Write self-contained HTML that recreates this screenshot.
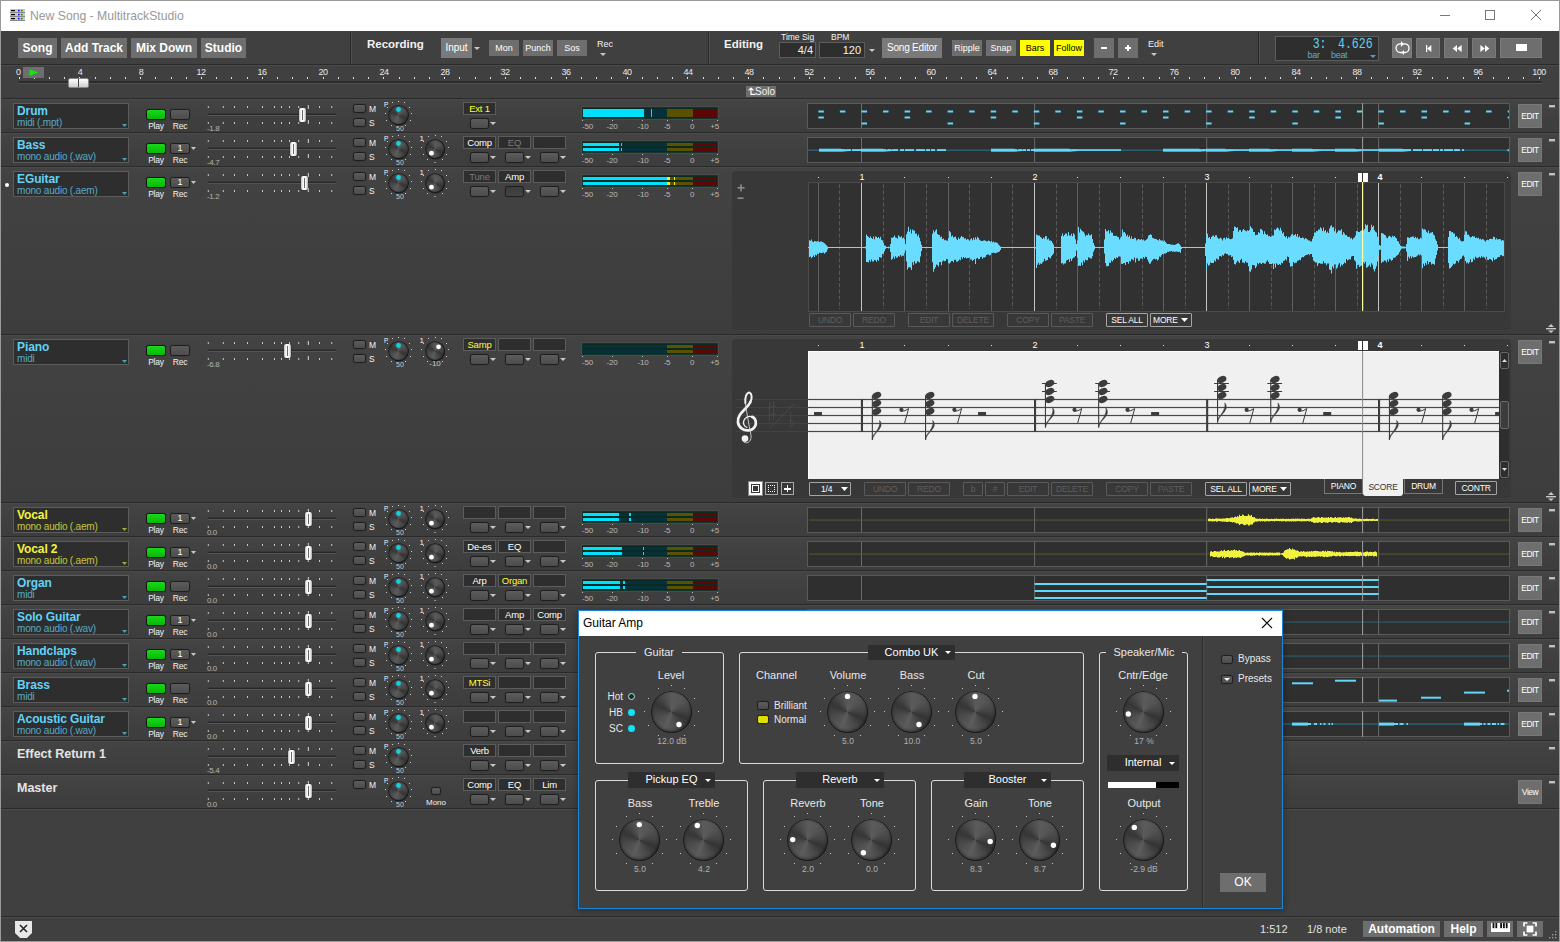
<!DOCTYPE html><html><head><meta charset="utf-8"><title>New Song - MultitrackStudio</title><style>
*{box-sizing:border-box;margin:0;padding:0}
html,body{width:1560px;height:942px;overflow:hidden;background:#404040}
body{position:relative;font-family:"Liberation Sans","DejaVu Sans",sans-serif;color:#f2f2f2;font-size:11px}
div,span.t,svg{position:absolute}
span.t{white-space:nowrap;line-height:1}
.dk{background:#2e2e2e;border:1px solid #5c5c5c}
.btn{background:#6e6e6e;color:#fff;text-align:center}
.b{font-weight:bold}
.sep{background:#2a2a2a;border-bottom:1px solid #4a4a4a}
.sb{background:linear-gradient(#5c5c5c,#4c4c4c);border:1px solid #1e1e1e;border-radius:2.5px;box-shadow:0 0 1px #222}
.ebtn{border:1px solid #5a5a5a;color:#5e5e5e;font-size:8.5px;letter-spacing:-0.2px;text-align:center;line-height:12px;border-radius:1px}
.ebtn.on{border-color:#a4a4a4;color:#fff}
.grp{border:1px solid #dadada;border-radius:3px}
.dd{background:#2e2e2e;color:#fff;font-size:11px;text-align:center}
</style></head><body>
<div style="left:0px;top:0px;width:1560px;height:942px;border:1px solid #9a9a9a;background:#404040"></div>
<div style="left:1px;top:1px;width:1558px;height:30px;background:#fff"></div>
<svg style="left:10px;top:9px" width="15" height="13" viewBox="0 0 15 13"><rect x="0" y="0" width="15" height="4" fill="#c8c8c8"/><rect x="0" y="3" width="15" height="1" fill="#888"/><rect x="1" y="1" width="4" height="1.2" fill="#000"/><rect x="8" y="0.8" width="1.6" height="1.6" fill="#10f"/><rect x="11" y="0.8" width="1.6" height="1.6" fill="#090"/><rect x="0" y="4" width="15" height="4" fill="#c8c8c8"/><rect x="0" y="7" width="15" height="1" fill="#888"/><rect x="1" y="5" width="4" height="1.2" fill="#000"/><rect x="8" y="4.8" width="1.6" height="1.6" fill="#10f"/><rect x="11" y="4.8" width="1.6" height="1.6" fill="#090"/><rect x="0" y="8" width="15" height="4" fill="#c8c8c8"/><rect x="0" y="11" width="15" height="1" fill="#888"/><rect x="1" y="9" width="4" height="1.2" fill="#000"/><rect x="8" y="8.8" width="1.6" height="1.6" fill="#10f"/><rect x="11" y="8.8" width="1.6" height="1.6" fill="#090"/></svg>
<span class="t" style="left:30px;top:9px;font-size:12.2px;color:#999;line-height:15px">New Song - MultitrackStudio</span>
<svg style="left:1430px;top:5px" width="120" height="22" viewBox="0 0 120 22" fill="none" stroke="#777" stroke-width="1"><path d="M10 10.5H20"/><rect x="55.5" y="5.5" width="9" height="9"/><path d="M101 5L111 15M111 5L101 15"/></svg>
<div style="left:1px;top:64px;width:1558px;height:2px;background:#2a2a2a;border-bottom:1px solid #4a4a4a"></div>
<div style="left:350px;top:32px;width:2px;height:32px;background:#2a2a2a;border-right:1px solid #505050"></div>
<div style="left:708px;top:32px;width:2px;height:32px;background:#2a2a2a;border-right:1px solid #505050"></div>
<div style="left:1258px;top:32px;width:2px;height:32px;background:#2a2a2a;border-right:1px solid #505050"></div>
<div style="left:18px;top:38px;width:39px;height:20px;background:#6e6e6e;color:#fff;font-size:12px;font-weight:bold;text-align:center;line-height:20px;">Song</div>
<div style="left:61px;top:38px;width:66px;height:20px;background:#6e6e6e;color:#fff;font-size:12px;font-weight:bold;text-align:center;line-height:20px;">Add Track</div>
<div style="left:131px;top:38px;width:66px;height:20px;background:#6e6e6e;color:#fff;font-size:12px;font-weight:bold;text-align:center;line-height:20px;">Mix Down</div>
<div style="left:201px;top:38px;width:45px;height:20px;background:#6e6e6e;color:#fff;font-size:12px;font-weight:bold;text-align:center;line-height:20px;">Studio</div>
<span class="t b" style="left:367px;top:37px;font-size:11.5px;line-height:14px">Recording</span>
<div style="left:441px;top:38px;width:31px;height:20px;background:#7a7a7a;color:#fff;font-size:10px;font-weight:normal;text-align:center;line-height:20px;">Input</div>
<svg style="left:474px;top:47px" width="6" height="3" viewBox="0 0 6 3"><path d="M0 0H6L3.0 3Z" fill="#c8c8c8"/></svg>
<div style="left:489px;top:40px;width:30px;height:16px;background:#6e6e6e;color:#fff;font-size:9px;font-weight:normal;text-align:center;line-height:16px;">Mon</div>
<div style="left:523px;top:40px;width:30px;height:16px;background:#6e6e6e;color:#fff;font-size:9px;font-weight:normal;text-align:center;line-height:16px;">Punch</div>
<div style="left:557px;top:40px;width:30px;height:16px;background:#6e6e6e;color:#fff;font-size:9px;font-weight:normal;text-align:center;line-height:16px;">Sos</div>
<span class="t" style="left:597px;top:39px;font-size:9px;line-height:10px">Rec</span>
<svg style="left:600px;top:53px" width="6" height="3" viewBox="0 0 6 3"><path d="M0 0H6L3.0 3Z" fill="#c8c8c8"/></svg>
<span class="t b" style="left:724px;top:37px;font-size:11.5px;line-height:14px">Editing</span>
<span class="t" style="left:781px;top:32px;font-size:8.5px;line-height:10px">Time Sig</span>
<div class="dk" style="left:779px;top:42px;width:37px;height:16px;font-size:11px;text-align:right;padding-right:2px;line-height:14px">4/4</div>
<span class="t" style="left:831px;top:32px;font-size:8.5px;line-height:10px">BPM</span>
<div class="dk" style="left:819px;top:42px;width:46px;height:16px;font-size:11px;text-align:right;padding-right:3px;line-height:14px">120</div>
<svg style="left:869px;top:49px" width="6" height="3" viewBox="0 0 6 3"><path d="M0 0H6L3.0 3Z" fill="#c8c8c8"/></svg>
<div style="left:882px;top:38px;width:60px;height:20px;background:#7a7a7a;color:#fff;font-size:10px;font-weight:normal;text-align:center;line-height:20px;letter-spacing:-0.2px;">Song Editor</div>
<div style="left:952px;top:40px;width:30px;height:16px;background:#6e6e6e;color:#fff;font-size:9px;font-weight:normal;text-align:center;line-height:16px;">Ripple</div>
<div style="left:986px;top:40px;width:30px;height:16px;background:#6e6e6e;color:#fff;font-size:9px;font-weight:normal;text-align:center;line-height:16px;">Snap</div>
<div style="left:1020px;top:40px;width:30px;height:16px;background:#ffff00;color:#000;font-size:9px;font-weight:normal;text-align:center;line-height:16px;">Bars</div>
<div style="left:1054px;top:40px;width:30px;height:16px;background:#ffff00;color:#000;font-size:9px;font-weight:normal;text-align:center;line-height:16px;">Follow</div>
<div class="btn" style="left:1094px;top:38px;width:20px;height:20px;"><div style="left:7px;top:9px;width:6px;height:2px;background:#fff"></div></div>
<div class="btn" style="left:1118px;top:38px;width:20px;height:20px;"><div style="left:7px;top:9px;width:6px;height:2px;background:#fff"></div><div style="left:9px;top:7px;width:2px;height:6px;background:#fff"></div></div>
<span class="t" style="left:1148px;top:39px;font-size:9px;line-height:10px">Edit</span>
<svg style="left:1151px;top:53px" width="6" height="3" viewBox="0 0 6 3"><path d="M0 0H6L3.0 3Z" fill="#c8c8c8"/></svg>
<div class="dk" style="left:1275px;top:35.5px;width:104px;height:25px;"></div>
<span class="t" style="left:1290px;top:37px;font-family:'Liberation Mono','DejaVu Sans Mono',monospace;font-size:15px;line-height:15px;transform:scaleX(0.77);color:#62d2f6;width:36.5px;text-align:right;transform-origin:100% 50%">3:</span>
<span class="t" style="left:1337.5px;top:37px;font-family:'Liberation Mono','DejaVu Sans Mono',monospace;font-size:15px;line-height:15px;transform:scaleX(0.77);color:#62d2f6;transform-origin:0 50%">4.626</span>
<span class="t" style="left:1307.5px;top:50px;font-size:9px;line-height:10px;color:#5aaecb;letter-spacing:-0.2px">bar</span>
<span class="t" style="left:1331px;top:50px;font-size:9px;line-height:10px;color:#5aaecb;letter-spacing:-0.3px">beat</span>
<svg style="left:1370px;top:55px" width="6" height="3" viewBox="0 0 6 3"><path d="M0 0H6L3.0 3Z" fill="#4aa6c4"/></svg>
<div class="btn" style="left:1392px;top:38px;width:20px;height:20px;background:#747474;border:1px solid #7e7e7e"><svg style="left:-1px;top:-1px" width="20" height="20" viewBox="0 0 20 20"><rect x="4.1" y="5.8" width="12.9" height="8.7" rx="4.3" fill="none" stroke="#fff" stroke-width="1.3"/><path d="M8.9 2.9V9.1L12 5.9Z M12 11.9V17.1L9.6 14.5Z" fill="#fff"/></svg></div>
<div class="btn" style="left:1416px;top:38px;width:24px;height:20px;border:1px solid #7a7a7a"><svg style="left:8px;top:5px" width="8" height="9" viewBox="0 0 8 9" fill="#fff"><rect x="1" y="1" width="1.3" height="7"/><path d="M2.2 4.5L6.3 1V8Z"/></svg></div>
<div class="btn" style="left:1444px;top:38px;width:24px;height:20px;border:1px solid #7a7a7a"><svg style="left:6px;top:5px" width="12" height="9" viewBox="0 0 12 9" fill="#fff"><path d="M1.6 4.5L6 1V8Z"/><path d="M6.2 4.5L10.6 1V8Z"/></svg></div>
<div class="btn" style="left:1472px;top:38px;width:24px;height:20px;border:1px solid #7a7a7a"><svg style="left:6px;top:5px" width="12" height="9" viewBox="0 0 12 9" fill="#fff"><path d="M5.8 4.5L1.4 1V8Z"/><path d="M10.4 4.5L6 1V8Z"/></svg></div>
<div class="btn" style="left:1500px;top:38px;width:42px;height:20px;border:1px solid #7a7a7a"><div style="left:15px;top:5px;width:10.5px;height:7px;background:#fff"></div></div>
<svg style="left:0;top:66px" width="1560" height="33" viewBox="0 0 1560 33"><rect x="19" y="15" width="1523" height="2" fill="#2c2c2c"/><rect x="19" y="17" width="1523" height="1" fill="#505050"/><rect x="19" y="11" width="1" height="2" fill="#e0e0e0"/><rect x="34" y="11" width="1" height="2" fill="#e0e0e0"/><rect x="49" y="11" width="1" height="2" fill="#e0e0e0"/><rect x="64" y="11" width="1" height="2" fill="#e0e0e0"/><rect x="79" y="11" width="1" height="2" fill="#e0e0e0"/><rect x="95" y="11" width="1" height="2" fill="#e0e0e0"/><rect x="110" y="11" width="1" height="2" fill="#e0e0e0"/><rect x="125" y="11" width="1" height="2" fill="#e0e0e0"/><rect x="140" y="11" width="1" height="2" fill="#e0e0e0"/><rect x="155" y="11" width="1" height="2" fill="#e0e0e0"/><rect x="171" y="11" width="1" height="2" fill="#e0e0e0"/><rect x="186" y="11" width="1" height="2" fill="#e0e0e0"/><rect x="201" y="11" width="1" height="2" fill="#e0e0e0"/><rect x="216" y="11" width="1" height="2" fill="#e0e0e0"/><rect x="231" y="11" width="1" height="2" fill="#e0e0e0"/><rect x="247" y="11" width="1" height="2" fill="#e0e0e0"/><rect x="262" y="11" width="1" height="2" fill="#e0e0e0"/><rect x="277" y="11" width="1" height="2" fill="#e0e0e0"/><rect x="292" y="11" width="1" height="2" fill="#e0e0e0"/><rect x="307" y="11" width="1" height="2" fill="#e0e0e0"/><rect x="323" y="11" width="1" height="2" fill="#e0e0e0"/><rect x="338" y="11" width="1" height="2" fill="#e0e0e0"/><rect x="353" y="11" width="1" height="2" fill="#e0e0e0"/><rect x="368" y="11" width="1" height="2" fill="#e0e0e0"/><rect x="383" y="11" width="1" height="2" fill="#e0e0e0"/><rect x="399" y="11" width="1" height="2" fill="#e0e0e0"/><rect x="414" y="11" width="1" height="2" fill="#e0e0e0"/><rect x="429" y="11" width="1" height="2" fill="#e0e0e0"/><rect x="444" y="11" width="1" height="2" fill="#e0e0e0"/><rect x="459" y="11" width="1" height="2" fill="#e0e0e0"/><rect x="475" y="11" width="1" height="2" fill="#e0e0e0"/><rect x="490" y="11" width="1" height="2" fill="#e0e0e0"/><rect x="505" y="11" width="1" height="2" fill="#e0e0e0"/><rect x="520" y="11" width="1" height="2" fill="#e0e0e0"/><rect x="535" y="11" width="1" height="2" fill="#e0e0e0"/><rect x="551" y="11" width="1" height="2" fill="#e0e0e0"/><rect x="566" y="11" width="1" height="2" fill="#e0e0e0"/><rect x="581" y="11" width="1" height="2" fill="#e0e0e0"/><rect x="596" y="11" width="1" height="2" fill="#e0e0e0"/><rect x="611" y="11" width="1" height="2" fill="#e0e0e0"/><rect x="627" y="11" width="1" height="2" fill="#e0e0e0"/><rect x="642" y="11" width="1" height="2" fill="#e0e0e0"/><rect x="657" y="11" width="1" height="2" fill="#e0e0e0"/><rect x="672" y="11" width="1" height="2" fill="#e0e0e0"/><rect x="687" y="11" width="1" height="2" fill="#e0e0e0"/><rect x="703" y="11" width="1" height="2" fill="#e0e0e0"/><rect x="718" y="11" width="1" height="2" fill="#e0e0e0"/><rect x="733" y="11" width="1" height="2" fill="#e0e0e0"/><rect x="748" y="11" width="1" height="2" fill="#e0e0e0"/><rect x="763" y="11" width="1" height="2" fill="#e0e0e0"/><rect x="779" y="11" width="1" height="2" fill="#e0e0e0"/><rect x="794" y="11" width="1" height="2" fill="#e0e0e0"/><rect x="809" y="11" width="1" height="2" fill="#e0e0e0"/><rect x="824" y="11" width="1" height="2" fill="#e0e0e0"/><rect x="839" y="11" width="1" height="2" fill="#e0e0e0"/><rect x="855" y="11" width="1" height="2" fill="#e0e0e0"/><rect x="870" y="11" width="1" height="2" fill="#e0e0e0"/><rect x="885" y="11" width="1" height="2" fill="#e0e0e0"/><rect x="900" y="11" width="1" height="2" fill="#e0e0e0"/><rect x="915" y="11" width="1" height="2" fill="#e0e0e0"/><rect x="931" y="11" width="1" height="2" fill="#e0e0e0"/><rect x="946" y="11" width="1" height="2" fill="#e0e0e0"/><rect x="961" y="11" width="1" height="2" fill="#e0e0e0"/><rect x="976" y="11" width="1" height="2" fill="#e0e0e0"/><rect x="991" y="11" width="1" height="2" fill="#e0e0e0"/><rect x="1007" y="11" width="1" height="2" fill="#e0e0e0"/><rect x="1022" y="11" width="1" height="2" fill="#e0e0e0"/><rect x="1037" y="11" width="1" height="2" fill="#e0e0e0"/><rect x="1052" y="11" width="1" height="2" fill="#e0e0e0"/><rect x="1067" y="11" width="1" height="2" fill="#e0e0e0"/><rect x="1083" y="11" width="1" height="2" fill="#e0e0e0"/><rect x="1098" y="11" width="1" height="2" fill="#e0e0e0"/><rect x="1113" y="11" width="1" height="2" fill="#e0e0e0"/><rect x="1128" y="11" width="1" height="2" fill="#e0e0e0"/><rect x="1143" y="11" width="1" height="2" fill="#e0e0e0"/><rect x="1159" y="11" width="1" height="2" fill="#e0e0e0"/><rect x="1174" y="11" width="1" height="2" fill="#e0e0e0"/><rect x="1189" y="11" width="1" height="2" fill="#e0e0e0"/><rect x="1204" y="11" width="1" height="2" fill="#e0e0e0"/><rect x="1219" y="11" width="1" height="2" fill="#e0e0e0"/><rect x="1235" y="11" width="1" height="2" fill="#e0e0e0"/><rect x="1250" y="11" width="1" height="2" fill="#e0e0e0"/><rect x="1265" y="11" width="1" height="2" fill="#e0e0e0"/><rect x="1280" y="11" width="1" height="2" fill="#e0e0e0"/><rect x="1295" y="11" width="1" height="2" fill="#e0e0e0"/><rect x="1311" y="11" width="1" height="2" fill="#e0e0e0"/><rect x="1326" y="11" width="1" height="2" fill="#e0e0e0"/><rect x="1341" y="11" width="1" height="2" fill="#e0e0e0"/><rect x="1356" y="11" width="1" height="2" fill="#e0e0e0"/><rect x="1371" y="11" width="1" height="2" fill="#e0e0e0"/><rect x="1387" y="11" width="1" height="2" fill="#e0e0e0"/><rect x="1402" y="11" width="1" height="2" fill="#e0e0e0"/><rect x="1417" y="11" width="1" height="2" fill="#e0e0e0"/><rect x="1432" y="11" width="1" height="2" fill="#e0e0e0"/><rect x="1447" y="11" width="1" height="2" fill="#e0e0e0"/><rect x="1463" y="11" width="1" height="2" fill="#e0e0e0"/><rect x="1478" y="11" width="1" height="2" fill="#e0e0e0"/><rect x="1493" y="11" width="1" height="2" fill="#e0e0e0"/><rect x="1508" y="11" width="1" height="2" fill="#e0e0e0"/><rect x="1523" y="11" width="1" height="2" fill="#e0e0e0"/><rect x="1539" y="11" width="1" height="2" fill="#e0e0e0"/></svg>
<span class="t" style="left:16px;top:67px;font-size:9px;line-height:10px;color:#e8e8e8;letter-spacing:-0.5px">0</span>
<span class="t" style="left:65px;top:67px;width:30px;text-align:center;font-size:9px;line-height:10px;color:#e8e8e8;letter-spacing:-0.5px">4</span>
<span class="t" style="left:126px;top:67px;width:30px;text-align:center;font-size:9px;line-height:10px;color:#e8e8e8;letter-spacing:-0.5px">8</span>
<span class="t" style="left:186px;top:67px;width:30px;text-align:center;font-size:9px;line-height:10px;color:#e8e8e8;letter-spacing:-0.5px">12</span>
<span class="t" style="left:247px;top:67px;width:30px;text-align:center;font-size:9px;line-height:10px;color:#e8e8e8;letter-spacing:-0.5px">16</span>
<span class="t" style="left:308px;top:67px;width:30px;text-align:center;font-size:9px;line-height:10px;color:#e8e8e8;letter-spacing:-0.5px">20</span>
<span class="t" style="left:369px;top:67px;width:30px;text-align:center;font-size:9px;line-height:10px;color:#e8e8e8;letter-spacing:-0.5px">24</span>
<span class="t" style="left:430px;top:67px;width:30px;text-align:center;font-size:9px;line-height:10px;color:#e8e8e8;letter-spacing:-0.5px">28</span>
<span class="t" style="left:490px;top:67px;width:30px;text-align:center;font-size:9px;line-height:10px;color:#e8e8e8;letter-spacing:-0.5px">32</span>
<span class="t" style="left:551px;top:67px;width:30px;text-align:center;font-size:9px;line-height:10px;color:#e8e8e8;letter-spacing:-0.5px">36</span>
<span class="t" style="left:612px;top:67px;width:30px;text-align:center;font-size:9px;line-height:10px;color:#e8e8e8;letter-spacing:-0.5px">40</span>
<span class="t" style="left:673px;top:67px;width:30px;text-align:center;font-size:9px;line-height:10px;color:#e8e8e8;letter-spacing:-0.5px">44</span>
<span class="t" style="left:734px;top:67px;width:30px;text-align:center;font-size:9px;line-height:10px;color:#e8e8e8;letter-spacing:-0.5px">48</span>
<span class="t" style="left:794px;top:67px;width:30px;text-align:center;font-size:9px;line-height:10px;color:#e8e8e8;letter-spacing:-0.5px">52</span>
<span class="t" style="left:855px;top:67px;width:30px;text-align:center;font-size:9px;line-height:10px;color:#e8e8e8;letter-spacing:-0.5px">56</span>
<span class="t" style="left:916px;top:67px;width:30px;text-align:center;font-size:9px;line-height:10px;color:#e8e8e8;letter-spacing:-0.5px">60</span>
<span class="t" style="left:977px;top:67px;width:30px;text-align:center;font-size:9px;line-height:10px;color:#e8e8e8;letter-spacing:-0.5px">64</span>
<span class="t" style="left:1038px;top:67px;width:30px;text-align:center;font-size:9px;line-height:10px;color:#e8e8e8;letter-spacing:-0.5px">68</span>
<span class="t" style="left:1098px;top:67px;width:30px;text-align:center;font-size:9px;line-height:10px;color:#e8e8e8;letter-spacing:-0.5px">72</span>
<span class="t" style="left:1159px;top:67px;width:30px;text-align:center;font-size:9px;line-height:10px;color:#e8e8e8;letter-spacing:-0.5px">76</span>
<span class="t" style="left:1220px;top:67px;width:30px;text-align:center;font-size:9px;line-height:10px;color:#e8e8e8;letter-spacing:-0.5px">80</span>
<span class="t" style="left:1281px;top:67px;width:30px;text-align:center;font-size:9px;line-height:10px;color:#e8e8e8;letter-spacing:-0.5px">84</span>
<span class="t" style="left:1342px;top:67px;width:30px;text-align:center;font-size:9px;line-height:10px;color:#e8e8e8;letter-spacing:-0.5px">88</span>
<span class="t" style="left:1402px;top:67px;width:30px;text-align:center;font-size:9px;line-height:10px;color:#e8e8e8;letter-spacing:-0.5px">92</span>
<span class="t" style="left:1463px;top:67px;width:30px;text-align:center;font-size:9px;line-height:10px;color:#e8e8e8;letter-spacing:-0.5px">96</span>
<span class="t" style="left:1524px;top:67px;width:30px;text-align:center;font-size:9px;line-height:10px;color:#e8e8e8;letter-spacing:-0.5px">100</span>
<div style="left:23px;top:67px;width:21px;height:11px;background:#6e6e6e"><svg style="left:6px;top:2px" width="10" height="8" viewBox="0 0 10 8"><path d="M0.7 0.2L9.2 3.6L0.7 7Z" fill="#10e810"/></svg></div>
<div style="left:68px;top:78px;width:21px;height:10px;background:linear-gradient(#fff,#d0d0d0);border-radius:2px;border:1px solid #888"><div style="left:9px;top:0;width:1px;height:8px;background:#444"></div></div>
<div style="left:746px;top:86px;width:30px;height:11px;background:#6e6e6e"></div>
<svg style="left:748px;top:87px" width="8" height="9" viewBox="0 0 8 9" fill="none" stroke="#fff" stroke-width="1.2"><path d="M3 8V1.2M0.6 3.4L3 1L5.4 3.4M3 7.4H7.6"/></svg>
<span class="t" style="left:755px;top:86px;font-size:10px;line-height:11px">Solo</span>
<div style="left:1px;top:100px;width:1558px;height:32px;background:linear-gradient(#444 0,#424242 6px,#3f3f3f 60%,#3d3d3d 100%)"></div>
<div class="sep" style="left:1px;top:98px;width:1558px;height:2px;"></div>
<div class="dk" style="left:13px;top:103px;width:116px;height:26px;"></div>
<span class="t b" style="left:17px;top:104px;font-size:12px;line-height:14px;color:#62d2f6;letter-spacing:-0.1px">Drum</span>
<span class="t" style="left:17px;top:117px;font-size:10px;line-height:11px;color:#62d2f6;opacity:0.75;letter-spacing:-0.2px">midi (.mpt)</span>
<svg style="left:122px;top:124px" width="5" height="3" viewBox="0 0 5 3"><path d="M0 0H5L2.5 3Z" fill="#4d9fba"/></svg>
<div style="left:146px;top:109px;width:20px;height:11px;background:linear-gradient(#18d818,#08b808);border:1px solid #161616;border-radius:2.5px;box-shadow:0 0 1px #222"></div>
<span class="t" style="left:146px;top:121px;width:20px;text-align:center;font-size:8.5px;line-height:10px;letter-spacing:-0.2px">Play</span>
<div class="sb" style="left:170px;top:109px;width:20px;height:11px;color:#fff;font-size:9px;line-height:9px;text-align:center"></div>
<span class="t" style="left:170px;top:121px;width:20px;text-align:center;font-size:8.5px;line-height:10px;letter-spacing:-0.2px">Rec</span>
<svg style="left:200px;top:98px" width="145" height="34" viewBox="200 0 145 34"><rect x="207.8" y="8" width="1" height="2" fill="#c8c8c8"/><rect x="207.8" y="24" width="1" height="2" fill="#c8c8c8"/><rect x="222.8" y="8" width="1" height="2" fill="#c8c8c8"/><rect x="222.8" y="24" width="1" height="2" fill="#c8c8c8"/><rect x="234.0" y="8" width="1" height="2" fill="#c8c8c8"/><rect x="234.0" y="24" width="1" height="2" fill="#c8c8c8"/><rect x="247.0" y="8" width="1" height="2" fill="#c8c8c8"/><rect x="247.0" y="24" width="1" height="2" fill="#c8c8c8"/><rect x="262.0" y="8" width="1" height="2" fill="#c8c8c8"/><rect x="262.0" y="24" width="1" height="2" fill="#c8c8c8"/><rect x="274.0" y="8" width="1" height="2" fill="#c8c8c8"/><rect x="274.0" y="24" width="1" height="2" fill="#c8c8c8"/><rect x="281.0" y="8" width="1" height="2" fill="#c8c8c8"/><rect x="281.0" y="24" width="1" height="2" fill="#c8c8c8"/><rect x="289.0" y="8" width="1" height="2" fill="#c8c8c8"/><rect x="289.0" y="24" width="1" height="2" fill="#c8c8c8"/><rect x="298.2" y="8" width="1" height="2" fill="#c8c8c8"/><rect x="298.2" y="24" width="1" height="2" fill="#c8c8c8"/><rect x="319.0" y="8" width="1" height="2" fill="#c8c8c8"/><rect x="319.0" y="24" width="1" height="2" fill="#c8c8c8"/><rect x="331.2" y="8" width="1" height="2" fill="#c8c8c8"/><rect x="331.2" y="24" width="1" height="2" fill="#c8c8c8"/><rect x="307.8" y="7" width="1" height="4" fill="#d8d8d8"/><rect x="307.8" y="22" width="1" height="4" fill="#d8d8d8"/><rect x="208" y="15" width="128" height="1" fill="#383838"/><rect x="208" y="16" width="128" height="1" fill="#272727"/><rect x="208" y="17" width="128" height="1" fill="#565656"/></svg>
<div style="left:299px;top:108px;width:7px;height:14px;background:linear-gradient(90deg,#b8b8b8,#f4f4f4 25%,#fff 50%,#f0f0f0 75%,#a8a8a8);border-radius:2px;box-shadow:0 0 1px #111"><div style="left:3px;top:2px;width:1px;height:10px;background:#6a6a6a"></div></div>
<span class="t" style="left:207px;top:125px;font-size:8px;line-height:8px;color:#b4b4b4;letter-spacing:-0.4px">-1.8</span>
<div class="sb" style="left:353px;top:104px;width:13px;height:9px;"></div>
<span class="t" style="left:369px;top:104px;font-size:8.5px;line-height:10px">M</span>
<div class="sb" style="left:353px;top:118px;width:13px;height:9px;"></div>
<span class="t" style="left:369px;top:118px;font-size:8.5px;line-height:10px">S</span>
<svg style="left:383px;top:99px" width="32" height="32" viewBox="-16 -16 32 32"><rect x="-8" y="10" width="1.0" height="1.0" fill="#d0d0d0"/><rect x="-13" y="5" width="1.0" height="1.0" fill="#d0d0d0"/><rect x="-14" y="-2" width="1.0" height="1.0" fill="#d0d0d0"/><rect x="-12" y="-8" width="1.0" height="1.0" fill="#d0d0d0"/><rect x="-7" y="-13" width="1.0" height="1.0" fill="#d0d0d0"/><rect x="-1" y="-14" width="1.0" height="1.0" fill="#d0d0d0"/><rect x="5" y="-13" width="1.0" height="1.0" fill="#d0d0d0"/><rect x="10" y="-8" width="1.0" height="1.0" fill="#d0d0d0"/><rect x="12" y="-2" width="1.0" height="1.0" fill="#d0d0d0"/><rect x="11" y="5" width="1.0" height="1.0" fill="#d0d0d0"/><rect x="6" y="10" width="1.0" height="1.0" fill="#d0d0d0"/><circle cx="-0.2" cy="0.6" r="9.9" fill="#1c1c1c"/></svg>
<div style="left:389.4px;top:105.9px;width:18.2px;height:18.2px;border-radius:50%;background:conic-gradient(from 0deg,#5a5a5a 0deg,#565656 40deg,#444 85deg,#343434 115deg,#484848 150deg,#5c5c5c 200deg,#4c4c4c 250deg,#363636 298deg,#4c4c4c 335deg,#5a5a5a 360deg);box-shadow:inset 0 0 2px 0 rgba(0,0,0,.5),0 0 0 0.8px #1e1e1e"></div>
<svg style="left:394px;top:105px" width="9" height="9" viewBox="0 0 9 9"><circle cx="4.50" cy="4.50" r="2.4" fill="#00d8e8"/></svg>
<span class="t" style="left:384px;top:101px;font-size:6.5px;line-height:8px">P</span>
<span class="t" style="left:390px;top:124.5px;width:20px;text-align:center;font-size:7px;line-height:8px;color:#c8c8c8">50</span>
<div class="dk" style="left:463px;top:102px;width:33px;height:13px;font-size:9.5px;line-height:11px;text-align:center;color:#ffff28;letter-spacing:-0.2px">Ext 1</div>
<div class="sb" style="left:470px;top:118px;width:19px;height:10.5px;"></div>
<svg style="left:490px;top:122px" width="6" height="3" viewBox="0 0 6 3"><path d="M0 0H6L3.0 3Z" fill="#c8c8c8"/></svg>
<div style="left:582px;top:107px;width:136px;height:12px;background:#0a2a22;border:1px solid #13352b;box-shadow:0 0 0 1px #4a4a4a"></div>
<div style="left:583px;top:109px;width:134px;height:8px;overflow:hidden"><div style="left:0.0px;top:0;width:84.0px;height:8px;background:#06303a"></div><div style="left:84.0px;top:0;width:25.5px;height:8px;background:#5a5200"></div><div style="left:109.5px;top:0;width:24.5px;height:8px;background:#5c0606"></div><div style="left:0.0px;top:0;width:61.0px;height:8px;background:#00e0ff"></div><div style="left:67.8px;top:0;width:1.4px;height:8px;background:#00e0ff"></div></div>
<div style="left:582px;top:120px;width:1px;height:1px;background:#c0c0c0"></div>
<div style="left:612px;top:120px;width:1px;height:1px;background:#c0c0c0"></div>
<div style="left:642px;top:120px;width:1px;height:1px;background:#c0c0c0"></div>
<div style="left:667px;top:120px;width:1px;height:1px;background:#c0c0c0"></div>
<div style="left:692px;top:120px;width:1px;height:1px;background:#c0c0c0"></div>
<div style="left:717px;top:120px;width:1px;height:1px;background:#c0c0c0"></div>
<span class="t" style="left:582px;top:123px;font-size:8px;line-height:8px;color:#b8b8b8;letter-spacing:-0.2px">-50</span>
<span class="t" style="left:602px;top:123px;width:20px;text-align:center;font-size:8px;line-height:8px;color:#b8b8b8;letter-spacing:-0.2px">-20</span>
<span class="t" style="left:633px;top:123px;width:20px;text-align:center;font-size:8px;line-height:8px;color:#b8b8b8;letter-spacing:-0.2px">-10</span>
<span class="t" style="left:657px;top:123px;width:20px;text-align:center;font-size:8px;line-height:8px;color:#b8b8b8;letter-spacing:-0.2px">-5</span>
<span class="t" style="left:682px;top:123px;width:20px;text-align:center;font-size:8px;line-height:8px;color:#b8b8b8;letter-spacing:-0.2px">0</span>
<span class="t" style="left:699px;top:123px;width:20px;text-align:right;font-size:8px;line-height:8px;color:#b8b8b8;letter-spacing:-0.2px">+5</span>
<svg style="left:807px;top:103px" width="703" height="26" viewBox="807 0 703 26"><rect x="807.5" y="0.5" width="702" height="25" fill="#2f2f2f" stroke="#5a5a5a"/><rect x="861.0" y="1" width="1" height="24" fill="#6a6a6a"/><rect x="1034.1" y="1" width="1" height="24" fill="#6a6a6a"/><rect x="1206.2" y="1" width="1" height="24" fill="#6a6a6a"/><rect x="1378.1" y="1" width="1" height="24" fill="#6a6a6a"/><rect x="818.4" y="7.5" width="5.5" height="2" fill="#5fd8fa"/><rect x="818.4" y="13.5" width="5.5" height="2" fill="#5fd8fa"/><rect x="839.9" y="7.5" width="5.5" height="2" fill="#5fd8fa"/><rect x="861.5" y="7.5" width="5.5" height="2" fill="#5fd8fa"/><rect x="861.5" y="19.5" width="5.5" height="2" fill="#5fd8fa"/><rect x="883.0" y="7.5" width="5.5" height="2" fill="#5fd8fa"/><rect x="904.6" y="7.5" width="5.5" height="2" fill="#5fd8fa"/><rect x="904.6" y="13.5" width="5.5" height="2" fill="#5fd8fa"/><rect x="926.1" y="7.5" width="5.5" height="2" fill="#5fd8fa"/><rect x="947.6" y="7.5" width="5.5" height="2" fill="#5fd8fa"/><rect x="947.6" y="19.5" width="5.5" height="2" fill="#5fd8fa"/><rect x="969.2" y="7.5" width="5.5" height="2" fill="#5fd8fa"/><rect x="990.7" y="7.5" width="5.5" height="2" fill="#5fd8fa"/><rect x="990.7" y="13.5" width="5.5" height="2" fill="#5fd8fa"/><rect x="1012.3" y="7.5" width="5.5" height="2" fill="#5fd8fa"/><rect x="1033.8" y="7.5" width="5.5" height="2" fill="#5fd8fa"/><rect x="1033.8" y="19.5" width="5.5" height="2" fill="#5fd8fa"/><rect x="1055.3" y="7.5" width="5.5" height="2" fill="#5fd8fa"/><rect x="1076.9" y="7.5" width="5.5" height="2" fill="#5fd8fa"/><rect x="1076.9" y="13.5" width="5.5" height="2" fill="#5fd8fa"/><rect x="1098.4" y="7.5" width="5.5" height="2" fill="#5fd8fa"/><rect x="1120.0" y="7.5" width="5.5" height="2" fill="#5fd8fa"/><rect x="1120.0" y="19.5" width="5.5" height="2" fill="#5fd8fa"/><rect x="1141.5" y="7.5" width="5.5" height="2" fill="#5fd8fa"/><rect x="1163.0" y="7.5" width="5.5" height="2" fill="#5fd8fa"/><rect x="1163.0" y="13.5" width="5.5" height="2" fill="#5fd8fa"/><rect x="1184.6" y="7.5" width="5.5" height="2" fill="#5fd8fa"/><rect x="1206.1" y="7.5" width="5.5" height="2" fill="#5fd8fa"/><rect x="1206.1" y="19.5" width="5.5" height="2" fill="#5fd8fa"/><rect x="1227.7" y="7.5" width="5.5" height="2" fill="#5fd8fa"/><rect x="1249.2" y="7.5" width="5.5" height="2" fill="#5fd8fa"/><rect x="1249.2" y="13.5" width="5.5" height="2" fill="#5fd8fa"/><rect x="1270.7" y="7.5" width="5.5" height="2" fill="#5fd8fa"/><rect x="1292.3" y="7.5" width="5.5" height="2" fill="#5fd8fa"/><rect x="1292.3" y="19.5" width="5.5" height="2" fill="#5fd8fa"/><rect x="1313.8" y="7.5" width="5.5" height="2" fill="#5fd8fa"/><rect x="1335.4" y="7.5" width="5.5" height="2" fill="#5fd8fa"/><rect x="1335.4" y="13.5" width="5.5" height="2" fill="#5fd8fa"/><rect x="1356.9" y="7.5" width="5.5" height="2" fill="#5fd8fa"/><rect x="1378.4" y="7.5" width="5.5" height="2" fill="#5fd8fa"/><rect x="1378.4" y="19.5" width="5.5" height="2" fill="#5fd8fa"/><rect x="1400.0" y="7.5" width="5.5" height="2" fill="#5fd8fa"/><rect x="1421.5" y="7.5" width="5.5" height="2" fill="#5fd8fa"/><rect x="1421.5" y="13.5" width="5.5" height="2" fill="#5fd8fa"/><rect x="1443.1" y="7.5" width="5.5" height="2" fill="#5fd8fa"/><rect x="1464.6" y="7.5" width="5.5" height="2" fill="#5fd8fa"/><rect x="1464.6" y="19.5" width="5.5" height="2" fill="#5fd8fa"/><rect x="1486.1" y="7.5" width="5.5" height="2" fill="#5fd8fa"/><rect x="1507.7" y="7.5" width="1.3" height="2" fill="#5fd8fa"/><rect x="1507.7" y="13.5" width="1.3" height="2" fill="#5fd8fa"/><rect x="1362.1" y="0" width="1" height="26" fill="#a0a0a0"/></svg>
<div class="btn" style="left:1518px;top:104px;width:24px;height:24px;font-size:8.5px;line-height:22px;letter-spacing:-0.5px;border:1px solid #787878">EDIT</div>
<div style="left:1549px;top:105px;width:6px;height:3px;background:#c0c0c0;border-bottom:1px solid #777"></div>
<div style="left:1px;top:134px;width:1558px;height:32px;background:linear-gradient(#444 0,#424242 6px,#3f3f3f 60%,#3d3d3d 100%)"></div>
<div class="sep" style="left:1px;top:132px;width:1558px;height:2px;"></div>
<div class="dk" style="left:13px;top:137px;width:116px;height:26px;"></div>
<span class="t b" style="left:17px;top:138px;font-size:12px;line-height:14px;color:#62d2f6;letter-spacing:-0.1px">Bass</span>
<span class="t" style="left:17px;top:151px;font-size:10px;line-height:11px;color:#62d2f6;opacity:0.75;letter-spacing:-0.2px">mono audio (.wav)</span>
<svg style="left:122px;top:158px" width="5" height="3" viewBox="0 0 5 3"><path d="M0 0H5L2.5 3Z" fill="#4d9fba"/></svg>
<div style="left:146px;top:143px;width:20px;height:11px;background:linear-gradient(#18d818,#08b808);border:1px solid #161616;border-radius:2.5px;box-shadow:0 0 1px #222"></div>
<span class="t" style="left:146px;top:155px;width:20px;text-align:center;font-size:8.5px;line-height:10px;letter-spacing:-0.2px">Play</span>
<div class="sb" style="left:170px;top:143px;width:20px;height:11px;color:#fff;font-size:9px;line-height:9px;text-align:center">1</div>
<span class="t" style="left:170px;top:155px;width:20px;text-align:center;font-size:8.5px;line-height:10px;letter-spacing:-0.2px">Rec</span>
<svg style="left:191px;top:147px" width="5" height="3" viewBox="0 0 5 3"><path d="M0 0H5L2.5 3Z" fill="#c8c8c8"/></svg>
<svg style="left:200px;top:132px" width="145" height="34" viewBox="200 0 145 34"><rect x="207.8" y="8" width="1" height="2" fill="#c8c8c8"/><rect x="207.8" y="24" width="1" height="2" fill="#c8c8c8"/><rect x="222.8" y="8" width="1" height="2" fill="#c8c8c8"/><rect x="222.8" y="24" width="1" height="2" fill="#c8c8c8"/><rect x="234.0" y="8" width="1" height="2" fill="#c8c8c8"/><rect x="234.0" y="24" width="1" height="2" fill="#c8c8c8"/><rect x="247.0" y="8" width="1" height="2" fill="#c8c8c8"/><rect x="247.0" y="24" width="1" height="2" fill="#c8c8c8"/><rect x="262.0" y="8" width="1" height="2" fill="#c8c8c8"/><rect x="262.0" y="24" width="1" height="2" fill="#c8c8c8"/><rect x="274.0" y="8" width="1" height="2" fill="#c8c8c8"/><rect x="274.0" y="24" width="1" height="2" fill="#c8c8c8"/><rect x="281.0" y="8" width="1" height="2" fill="#c8c8c8"/><rect x="281.0" y="24" width="1" height="2" fill="#c8c8c8"/><rect x="289.0" y="8" width="1" height="2" fill="#c8c8c8"/><rect x="289.0" y="24" width="1" height="2" fill="#c8c8c8"/><rect x="298.2" y="8" width="1" height="2" fill="#c8c8c8"/><rect x="298.2" y="24" width="1" height="2" fill="#c8c8c8"/><rect x="319.0" y="8" width="1" height="2" fill="#c8c8c8"/><rect x="319.0" y="24" width="1" height="2" fill="#c8c8c8"/><rect x="331.2" y="8" width="1" height="2" fill="#c8c8c8"/><rect x="331.2" y="24" width="1" height="2" fill="#c8c8c8"/><rect x="307.8" y="7" width="1" height="4" fill="#d8d8d8"/><rect x="307.8" y="22" width="1" height="4" fill="#d8d8d8"/><rect x="208" y="15" width="128" height="1" fill="#383838"/><rect x="208" y="16" width="128" height="1" fill="#272727"/><rect x="208" y="17" width="128" height="1" fill="#565656"/></svg>
<div style="left:290px;top:142px;width:7px;height:14px;background:linear-gradient(90deg,#b8b8b8,#f4f4f4 25%,#fff 50%,#f0f0f0 75%,#a8a8a8);border-radius:2px;box-shadow:0 0 1px #111"><div style="left:3px;top:2px;width:1px;height:10px;background:#6a6a6a"></div></div>
<span class="t" style="left:207px;top:159px;font-size:8px;line-height:8px;color:#b4b4b4;letter-spacing:-0.4px">-4.7</span>
<div class="sb" style="left:353px;top:138px;width:13px;height:9px;"></div>
<span class="t" style="left:369px;top:138px;font-size:8.5px;line-height:10px">M</span>
<div class="sb" style="left:353px;top:152px;width:13px;height:9px;"></div>
<span class="t" style="left:369px;top:152px;font-size:8.5px;line-height:10px">S</span>
<svg style="left:383px;top:133px" width="32" height="32" viewBox="-16 -16 32 32"><rect x="-8" y="10" width="1.0" height="1.0" fill="#d0d0d0"/><rect x="-13" y="5" width="1.0" height="1.0" fill="#d0d0d0"/><rect x="-14" y="-2" width="1.0" height="1.0" fill="#d0d0d0"/><rect x="-12" y="-8" width="1.0" height="1.0" fill="#d0d0d0"/><rect x="-7" y="-13" width="1.0" height="1.0" fill="#d0d0d0"/><rect x="-1" y="-14" width="1.0" height="1.0" fill="#d0d0d0"/><rect x="5" y="-13" width="1.0" height="1.0" fill="#d0d0d0"/><rect x="10" y="-8" width="1.0" height="1.0" fill="#d0d0d0"/><rect x="12" y="-2" width="1.0" height="1.0" fill="#d0d0d0"/><rect x="11" y="5" width="1.0" height="1.0" fill="#d0d0d0"/><rect x="6" y="10" width="1.0" height="1.0" fill="#d0d0d0"/><circle cx="-0.2" cy="0.6" r="9.9" fill="#1c1c1c"/></svg>
<div style="left:389.4px;top:139.9px;width:18.2px;height:18.2px;border-radius:50%;background:conic-gradient(from 0deg,#5a5a5a 0deg,#565656 40deg,#444 85deg,#343434 115deg,#484848 150deg,#5c5c5c 200deg,#4c4c4c 250deg,#363636 298deg,#4c4c4c 335deg,#5a5a5a 360deg);box-shadow:inset 0 0 2px 0 rgba(0,0,0,.5),0 0 0 0.8px #1e1e1e"></div>
<svg style="left:394px;top:139px" width="9" height="9" viewBox="0 0 9 9"><circle cx="4.50" cy="4.50" r="2.4" fill="#00d8e8"/></svg>
<span class="t" style="left:384px;top:135px;font-size:6.5px;line-height:8px">P</span>
<span class="t" style="left:390px;top:158.5px;width:20px;text-align:center;font-size:7px;line-height:8px;color:#c8c8c8">50</span>
<svg style="left:419px;top:133px" width="32" height="32" viewBox="-16 -16 32 32"><rect x="-8" y="10" width="1.0" height="1.0" fill="#d0d0d0"/><rect x="-12" y="5" width="1.0" height="1.0" fill="#d0d0d0"/><rect x="-14" y="-2" width="1.0" height="1.0" fill="#d0d0d0"/><rect x="-12" y="-8" width="1.0" height="1.0" fill="#d0d0d0"/><rect x="-7" y="-13" width="1.0" height="1.0" fill="#d0d0d0"/><rect x="0" y="-14" width="1.0" height="1.0" fill="#d0d0d0"/><rect x="6" y="-13" width="1.0" height="1.0" fill="#d0d0d0"/><rect x="11" y="-8" width="1.0" height="1.0" fill="#d0d0d0"/><rect x="13" y="-2" width="1.0" height="1.0" fill="#d0d0d0"/><rect x="11" y="5" width="1.0" height="1.0" fill="#d0d0d0"/><rect x="7" y="10" width="1.0" height="1.0" fill="#d0d0d0"/><circle cx="0.3" cy="0.6" r="9.9" fill="#1c1c1c"/></svg>
<div style="left:425.9px;top:139.9px;width:18.2px;height:18.2px;border-radius:50%;background:conic-gradient(from 0deg,#5a5a5a 0deg,#565656 40deg,#444 85deg,#343434 115deg,#484848 150deg,#5c5c5c 200deg,#4c4c4c 250deg,#363636 298deg,#4c4c4c 335deg,#5a5a5a 360deg);box-shadow:inset 0 0 2px 0 rgba(0,0,0,.5),0 0 0 0.8px #1e1e1e"></div>
<svg style="left:427px;top:149px" width="9" height="9" viewBox="0 0 9 9"><circle cx="4.46" cy="4.21" r="2.4" fill="#fff"/></svg>
<span class="t" style="left:419.5px;top:135px;font-size:8px;line-height:8px">1</span>
<span class="t" style="left:425px;top:158px;width:20px;text-align:center;font-size:8px;line-height:8px;color:#c8c8c8">-</span>
<div class="dk" style="left:463px;top:136px;width:33px;height:13px;font-size:9.5px;line-height:11px;text-align:center;color:#ffffff;letter-spacing:-0.2px">Comp</div>
<div class="sb" style="left:470px;top:152px;width:19px;height:10.5px;"></div>
<svg style="left:490px;top:156px" width="6" height="3" viewBox="0 0 6 3"><path d="M0 0H6L3.0 3Z" fill="#c8c8c8"/></svg>
<div class="dk" style="left:498px;top:136px;width:33px;height:13px;font-size:9.5px;line-height:11px;text-align:center;color:#7a7a7a;letter-spacing:-0.2px">EQ</div>
<div class="sb" style="left:505px;top:152px;width:19px;height:10.5px;"></div>
<svg style="left:525px;top:156px" width="6" height="3" viewBox="0 0 6 3"><path d="M0 0H6L3.0 3Z" fill="#c8c8c8"/></svg>
<div class="dk" style="left:533px;top:136px;width:33px;height:13px;font-size:9.5px;line-height:11px;text-align:center;color:#ffffff;letter-spacing:-0.2px"></div>
<div class="sb" style="left:540px;top:152px;width:19px;height:10.5px;"></div>
<svg style="left:560px;top:156px" width="6" height="3" viewBox="0 0 6 3"><path d="M0 0H6L3.0 3Z" fill="#c8c8c8"/></svg>
<div style="left:582px;top:141px;width:136px;height:12px;background:#0a2a22;border:1px solid #13352b;box-shadow:0 0 0 1px #4a4a4a"></div>
<div style="left:583px;top:143px;width:134px;height:3px;overflow:hidden"><div style="left:0.0px;top:0;width:84.0px;height:3px;background:#06303a"></div><div style="left:84.0px;top:0;width:25.5px;height:3px;background:#5a5200"></div><div style="left:109.5px;top:0;width:24.5px;height:3px;background:#5c0606"></div><div style="left:0.0px;top:0;width:35.7px;height:3px;background:#00e0ff"></div><div style="left:37.8px;top:0;width:1.4px;height:3px;background:#00e0ff"></div></div>
<div style="left:583px;top:148px;width:134px;height:3px;overflow:hidden"><div style="left:0.0px;top:0;width:84.0px;height:3px;background:#06303a"></div><div style="left:84.0px;top:0;width:25.5px;height:3px;background:#5a5200"></div><div style="left:109.5px;top:0;width:24.5px;height:3px;background:#5c0606"></div><div style="left:0.0px;top:0;width:35.7px;height:3px;background:#00e0ff"></div><div style="left:37.8px;top:0;width:1.4px;height:3px;background:#00e0ff"></div></div>
<div style="left:582px;top:154px;width:1px;height:1px;background:#c0c0c0"></div>
<div style="left:612px;top:154px;width:1px;height:1px;background:#c0c0c0"></div>
<div style="left:642px;top:154px;width:1px;height:1px;background:#c0c0c0"></div>
<div style="left:667px;top:154px;width:1px;height:1px;background:#c0c0c0"></div>
<div style="left:692px;top:154px;width:1px;height:1px;background:#c0c0c0"></div>
<div style="left:717px;top:154px;width:1px;height:1px;background:#c0c0c0"></div>
<span class="t" style="left:582px;top:157px;font-size:8px;line-height:8px;color:#b8b8b8;letter-spacing:-0.2px">-50</span>
<span class="t" style="left:602px;top:157px;width:20px;text-align:center;font-size:8px;line-height:8px;color:#b8b8b8;letter-spacing:-0.2px">-20</span>
<span class="t" style="left:633px;top:157px;width:20px;text-align:center;font-size:8px;line-height:8px;color:#b8b8b8;letter-spacing:-0.2px">-10</span>
<span class="t" style="left:657px;top:157px;width:20px;text-align:center;font-size:8px;line-height:8px;color:#b8b8b8;letter-spacing:-0.2px">-5</span>
<span class="t" style="left:682px;top:157px;width:20px;text-align:center;font-size:8px;line-height:8px;color:#b8b8b8;letter-spacing:-0.2px">0</span>
<span class="t" style="left:699px;top:157px;width:20px;text-align:right;font-size:8px;line-height:8px;color:#b8b8b8;letter-spacing:-0.2px">+5</span>
<svg style="left:807px;top:137px" width="703" height="26" viewBox="807 0 703 26"><rect x="807.5" y="0.5" width="702" height="25" fill="#2f2f2f" stroke="#5a5a5a"/><rect x="861.0" y="1" width="1" height="24" fill="#6a6a6a"/><rect x="1034.1" y="1" width="1" height="24" fill="#6a6a6a"/><rect x="1206.2" y="1" width="1" height="24" fill="#6a6a6a"/><rect x="1378.1" y="1" width="1" height="24" fill="#6a6a6a"/><rect x="808" y="12.7" width="701" height="0.9" fill="#2c7f98"/><rect x="819" y="11.7" width="22" height="3" fill="#5fd8fa"/><path d="M841 11.7l3 1.2l2 -0.8l2 1l2 -0.6v1.6l-9 0.6z" fill="#5fd8fa"/><rect x="861" y="11.7" width="22" height="3" fill="#5fd8fa"/><path d="M883 11.7l3 1.2l2 -0.8l2 1l2 -0.6v1.6l-9 0.6z" fill="#5fd8fa"/><rect x="991" y="11.7" width="23" height="3" fill="#5fd8fa"/><path d="M1014 11.7l3 1.2l2 -0.8l2 1l2 -0.6v1.6l-9 0.6z" fill="#5fd8fa"/><rect x="1034" y="11.7" width="35" height="3" fill="#5fd8fa"/><path d="M1069 11.7l3 1.2l2 -0.8l2 1l2 -0.6v1.6l-9 0.6z" fill="#5fd8fa"/><rect x="1163" y="11.7" width="36" height="3" fill="#5fd8fa"/><path d="M1199 11.7l3 1.2l2 -0.8l2 1l2 -0.6v1.6l-9 0.6z" fill="#5fd8fa"/><rect x="1206" y="11.7" width="19" height="3" fill="#5fd8fa"/><path d="M1225 11.7l3 1.2l2 -0.8l2 1l2 -0.6v1.6l-9 0.6z" fill="#5fd8fa"/><rect x="1249" y="11.7" width="20" height="3" fill="#5fd8fa"/><path d="M1269 11.7l3 1.2l2 -0.8l2 1l2 -0.6v1.6l-9 0.6z" fill="#5fd8fa"/><rect x="1292" y="11.7" width="20" height="3" fill="#5fd8fa"/><path d="M1312 11.7l3 1.2l2 -0.8l2 1l2 -0.6v1.6l-9 0.6z" fill="#5fd8fa"/><rect x="1335" y="11.7" width="20" height="3" fill="#5fd8fa"/><path d="M1355 11.7l3 1.2l2 -0.8l2 1l2 -0.6v1.6l-9 0.6z" fill="#5fd8fa"/><rect x="1379" y="11.7" width="23" height="3" fill="#5fd8fa"/><path d="M1402 11.7l3 1.2l2 -0.8l2 1l2 -0.6v1.6l-9 0.6z" fill="#5fd8fa"/><rect x="1069" y="12.2" width="52" height="1.7" fill="#5fd8fa"/><rect x="1199" y="12.2" width="7" height="1.7" fill="#5fd8fa"/><rect x="1225" y="12.2" width="24" height="1.7" fill="#5fd8fa"/><rect x="1269" y="12.2" width="23" height="1.7" fill="#5fd8fa"/><rect x="1312" y="12.2" width="23" height="1.7" fill="#5fd8fa"/><rect x="1355" y="12.2" width="24" height="1.7" fill="#5fd8fa"/><rect x="841" y="12.1" width="4" height="1.9" fill="#5fd8fa"/><rect x="847" y="12.1" width="4" height="1.9" fill="#5fd8fa"/><rect x="852" y="12.1" width="9" height="1.9" fill="#5fd8fa"/><rect x="883" y="12.1" width="3" height="1.9" fill="#5fd8fa"/><rect x="888" y="12.1" width="3" height="1.9" fill="#5fd8fa"/><rect x="892" y="12.1" width="6" height="1.9" fill="#5fd8fa"/><rect x="900" y="12.1" width="4" height="1.9" fill="#5fd8fa"/><rect x="905" y="12.1" width="9" height="1.9" fill="#5fd8fa"/><rect x="916" y="12.1" width="9" height="1.9" fill="#5fd8fa"/><rect x="926" y="12.1" width="4" height="1.9" fill="#5fd8fa"/><rect x="931" y="12.1" width="4" height="1.9" fill="#5fd8fa"/><rect x="937" y="12.1" width="9" height="1.9" fill="#5fd8fa"/><rect x="1014" y="12.1" width="3" height="1.9" fill="#5fd8fa"/><rect x="1019" y="12.1" width="3" height="1.9" fill="#5fd8fa"/><rect x="1023" y="12.1" width="3" height="1.9" fill="#5fd8fa"/><rect x="1027" y="12.1" width="3" height="1.9" fill="#5fd8fa"/><rect x="1031" y="12.1" width="3" height="1.9" fill="#5fd8fa"/><rect x="1402" y="12.1" width="9" height="1.9" fill="#5fd8fa"/><rect x="1413" y="12.1" width="9" height="1.9" fill="#5fd8fa"/><rect x="1423" y="12.1" width="9" height="1.9" fill="#5fd8fa"/><rect x="1433" y="12.1" width="6" height="1.9" fill="#5fd8fa"/><rect x="1440" y="12.1" width="3" height="1.9" fill="#5fd8fa"/><rect x="1444" y="12.1" width="9" height="1.9" fill="#5fd8fa"/><rect x="1454" y="12.1" width="6" height="1.9" fill="#5fd8fa"/><rect x="1462" y="12.1" width="2" height="1.9" fill="#5fd8fa"/><rect x="1507.5" y="12.2" width="1.5" height="2" fill="#5fd8fa"/><rect x="1362.1" y="0" width="1" height="26" fill="#a0a0a0"/></svg>
<div class="btn" style="left:1518px;top:138px;width:24px;height:24px;font-size:8.5px;line-height:22px;letter-spacing:-0.5px;border:1px solid #787878">EDIT</div>
<div style="left:1549px;top:139px;width:6px;height:3px;background:#c0c0c0;border-bottom:1px solid #777"></div>
<div style="left:1px;top:168px;width:1558px;height:166px;background:linear-gradient(#444 0,#424242 6px,#3f3f3f 60%,#3d3d3d 100%)"></div>
<div class="sep" style="left:1px;top:166px;width:1558px;height:2px;"></div>
<div class="dk" style="left:13px;top:171px;width:116px;height:26px;"></div>
<span class="t b" style="left:17px;top:172px;font-size:12px;line-height:14px;color:#62d2f6;letter-spacing:-0.1px">EGuitar</span>
<span class="t" style="left:17px;top:185px;font-size:10px;line-height:11px;color:#62d2f6;opacity:0.75;letter-spacing:-0.2px">mono audio (.aem)</span>
<svg style="left:122px;top:192px" width="5" height="3" viewBox="0 0 5 3"><path d="M0 0H5L2.5 3Z" fill="#4d9fba"/></svg>
<div style="left:5px;top:183px;width:4px;height:4px;background:#fff;border-radius:2px"></div>
<div style="left:146px;top:177px;width:20px;height:11px;background:linear-gradient(#18d818,#08b808);border:1px solid #161616;border-radius:2.5px;box-shadow:0 0 1px #222"></div>
<span class="t" style="left:146px;top:189px;width:20px;text-align:center;font-size:8.5px;line-height:10px;letter-spacing:-0.2px">Play</span>
<div class="sb" style="left:170px;top:177px;width:20px;height:11px;color:#fff;font-size:9px;line-height:9px;text-align:center">1</div>
<span class="t" style="left:170px;top:189px;width:20px;text-align:center;font-size:8.5px;line-height:10px;letter-spacing:-0.2px">Rec</span>
<svg style="left:191px;top:181px" width="5" height="3" viewBox="0 0 5 3"><path d="M0 0H5L2.5 3Z" fill="#c8c8c8"/></svg>
<svg style="left:200px;top:166px" width="145" height="34" viewBox="200 0 145 34"><rect x="207.8" y="8" width="1" height="2" fill="#c8c8c8"/><rect x="207.8" y="24" width="1" height="2" fill="#c8c8c8"/><rect x="222.8" y="8" width="1" height="2" fill="#c8c8c8"/><rect x="222.8" y="24" width="1" height="2" fill="#c8c8c8"/><rect x="234.0" y="8" width="1" height="2" fill="#c8c8c8"/><rect x="234.0" y="24" width="1" height="2" fill="#c8c8c8"/><rect x="247.0" y="8" width="1" height="2" fill="#c8c8c8"/><rect x="247.0" y="24" width="1" height="2" fill="#c8c8c8"/><rect x="262.0" y="8" width="1" height="2" fill="#c8c8c8"/><rect x="262.0" y="24" width="1" height="2" fill="#c8c8c8"/><rect x="274.0" y="8" width="1" height="2" fill="#c8c8c8"/><rect x="274.0" y="24" width="1" height="2" fill="#c8c8c8"/><rect x="281.0" y="8" width="1" height="2" fill="#c8c8c8"/><rect x="281.0" y="24" width="1" height="2" fill="#c8c8c8"/><rect x="289.0" y="8" width="1" height="2" fill="#c8c8c8"/><rect x="289.0" y="24" width="1" height="2" fill="#c8c8c8"/><rect x="298.2" y="8" width="1" height="2" fill="#c8c8c8"/><rect x="298.2" y="24" width="1" height="2" fill="#c8c8c8"/><rect x="319.0" y="8" width="1" height="2" fill="#c8c8c8"/><rect x="319.0" y="24" width="1" height="2" fill="#c8c8c8"/><rect x="331.2" y="8" width="1" height="2" fill="#c8c8c8"/><rect x="331.2" y="24" width="1" height="2" fill="#c8c8c8"/><rect x="307.8" y="7" width="1" height="4" fill="#d8d8d8"/><rect x="307.8" y="22" width="1" height="4" fill="#d8d8d8"/><rect x="208" y="15" width="128" height="1" fill="#383838"/><rect x="208" y="16" width="128" height="1" fill="#272727"/><rect x="208" y="17" width="128" height="1" fill="#565656"/></svg>
<div style="left:301px;top:176px;width:7px;height:14px;background:linear-gradient(90deg,#b8b8b8,#f4f4f4 25%,#fff 50%,#f0f0f0 75%,#a8a8a8);border-radius:2px;box-shadow:0 0 1px #111"><div style="left:3px;top:2px;width:1px;height:10px;background:#6a6a6a"></div></div>
<span class="t" style="left:207px;top:193px;font-size:8px;line-height:8px;color:#b4b4b4;letter-spacing:-0.4px">-1.2</span>
<div class="sb" style="left:353px;top:172px;width:13px;height:9px;"></div>
<span class="t" style="left:369px;top:172px;font-size:8.5px;line-height:10px">M</span>
<div class="sb" style="left:353px;top:186px;width:13px;height:9px;"></div>
<span class="t" style="left:369px;top:186px;font-size:8.5px;line-height:10px">S</span>
<svg style="left:383px;top:167px" width="32" height="32" viewBox="-16 -16 32 32"><rect x="-8" y="10" width="1.0" height="1.0" fill="#d0d0d0"/><rect x="-13" y="5" width="1.0" height="1.0" fill="#d0d0d0"/><rect x="-14" y="-2" width="1.0" height="1.0" fill="#d0d0d0"/><rect x="-12" y="-8" width="1.0" height="1.0" fill="#d0d0d0"/><rect x="-7" y="-13" width="1.0" height="1.0" fill="#d0d0d0"/><rect x="-1" y="-14" width="1.0" height="1.0" fill="#d0d0d0"/><rect x="5" y="-13" width="1.0" height="1.0" fill="#d0d0d0"/><rect x="10" y="-8" width="1.0" height="1.0" fill="#d0d0d0"/><rect x="12" y="-2" width="1.0" height="1.0" fill="#d0d0d0"/><rect x="11" y="5" width="1.0" height="1.0" fill="#d0d0d0"/><rect x="6" y="10" width="1.0" height="1.0" fill="#d0d0d0"/><circle cx="-0.2" cy="0.6" r="9.9" fill="#1c1c1c"/></svg>
<div style="left:389.4px;top:173.9px;width:18.2px;height:18.2px;border-radius:50%;background:conic-gradient(from 0deg,#5a5a5a 0deg,#565656 40deg,#444 85deg,#343434 115deg,#484848 150deg,#5c5c5c 200deg,#4c4c4c 250deg,#363636 298deg,#4c4c4c 335deg,#5a5a5a 360deg);box-shadow:inset 0 0 2px 0 rgba(0,0,0,.5),0 0 0 0.8px #1e1e1e"></div>
<svg style="left:394px;top:173px" width="9" height="9" viewBox="0 0 9 9"><circle cx="4.50" cy="4.50" r="2.4" fill="#00d8e8"/></svg>
<span class="t" style="left:384px;top:169px;font-size:6.5px;line-height:8px">P</span>
<span class="t" style="left:390px;top:192.5px;width:20px;text-align:center;font-size:7px;line-height:8px;color:#c8c8c8">50</span>
<svg style="left:419px;top:167px" width="32" height="32" viewBox="-16 -16 32 32"><rect x="-8" y="10" width="1.0" height="1.0" fill="#d0d0d0"/><rect x="-12" y="5" width="1.0" height="1.0" fill="#d0d0d0"/><rect x="-14" y="-2" width="1.0" height="1.0" fill="#d0d0d0"/><rect x="-12" y="-8" width="1.0" height="1.0" fill="#d0d0d0"/><rect x="-7" y="-13" width="1.0" height="1.0" fill="#d0d0d0"/><rect x="0" y="-14" width="1.0" height="1.0" fill="#d0d0d0"/><rect x="6" y="-13" width="1.0" height="1.0" fill="#d0d0d0"/><rect x="11" y="-8" width="1.0" height="1.0" fill="#d0d0d0"/><rect x="13" y="-2" width="1.0" height="1.0" fill="#d0d0d0"/><rect x="11" y="5" width="1.0" height="1.0" fill="#d0d0d0"/><rect x="7" y="10" width="1.0" height="1.0" fill="#d0d0d0"/><circle cx="0.3" cy="0.6" r="9.9" fill="#1c1c1c"/></svg>
<div style="left:425.9px;top:173.9px;width:18.2px;height:18.2px;border-radius:50%;background:conic-gradient(from 0deg,#5a5a5a 0deg,#565656 40deg,#444 85deg,#343434 115deg,#484848 150deg,#5c5c5c 200deg,#4c4c4c 250deg,#363636 298deg,#4c4c4c 335deg,#5a5a5a 360deg);box-shadow:inset 0 0 2px 0 rgba(0,0,0,.5),0 0 0 0.8px #1e1e1e"></div>
<svg style="left:427px;top:183px" width="9" height="9" viewBox="0 0 9 9"><circle cx="4.46" cy="4.21" r="2.4" fill="#fff"/></svg>
<span class="t" style="left:419.5px;top:169px;font-size:8px;line-height:8px">1</span>
<span class="t" style="left:425px;top:192px;width:20px;text-align:center;font-size:8px;line-height:8px;color:#c8c8c8">-</span>
<div class="dk" style="left:463px;top:170px;width:33px;height:13px;font-size:9.5px;line-height:11px;text-align:center;color:#7a7a7a;letter-spacing:-0.2px">Tune</div>
<div class="sb" style="left:470px;top:186px;width:19px;height:10.5px;"></div>
<svg style="left:490px;top:190px" width="6" height="3" viewBox="0 0 6 3"><path d="M0 0H6L3.0 3Z" fill="#c8c8c8"/></svg>
<div class="dk" style="left:498px;top:170px;width:33px;height:13px;font-size:9.5px;line-height:11px;text-align:center;color:#ffffff;letter-spacing:-0.2px">Amp</div>
<div class="sb" style="left:505px;top:186px;width:19px;height:10.5px;background:linear-gradient(#3a3a3a,#444);"></div>
<svg style="left:525px;top:190px" width="6" height="3" viewBox="0 0 6 3"><path d="M0 0H6L3.0 3Z" fill="#c8c8c8"/></svg>
<div class="dk" style="left:533px;top:170px;width:33px;height:13px;font-size:9.5px;line-height:11px;text-align:center;color:#ffffff;letter-spacing:-0.2px"></div>
<div class="sb" style="left:540px;top:186px;width:19px;height:10.5px;"></div>
<svg style="left:560px;top:190px" width="6" height="3" viewBox="0 0 6 3"><path d="M0 0H6L3.0 3Z" fill="#c8c8c8"/></svg>
<div style="left:582px;top:175px;width:136px;height:12px;background:#0a2a22;border:1px solid #13352b;box-shadow:0 0 0 1px #4a4a4a"></div>
<div style="left:583px;top:177px;width:134px;height:3px;overflow:hidden"><div style="left:0.0px;top:0;width:84.0px;height:3px;background:#06303a"></div><div style="left:84.0px;top:0;width:25.5px;height:3px;background:#5a5200"></div><div style="left:109.5px;top:0;width:24.5px;height:3px;background:#5c0606"></div><div style="left:0.0px;top:0;width:84.0px;height:3px;background:#00e0ff"></div><div style="left:84.0px;top:0;width:3.0px;height:3px;background:#ffee00"></div><div style="left:90.8px;top:0;width:1.4px;height:3px;background:#ffee00"></div></div>
<div style="left:583px;top:182px;width:134px;height:3px;overflow:hidden"><div style="left:0.0px;top:0;width:84.0px;height:3px;background:#06303a"></div><div style="left:84.0px;top:0;width:25.5px;height:3px;background:#5a5200"></div><div style="left:109.5px;top:0;width:24.5px;height:3px;background:#5c0606"></div><div style="left:0.0px;top:0;width:84.0px;height:3px;background:#00e0ff"></div><div style="left:84.0px;top:0;width:3.0px;height:3px;background:#ffee00"></div><div style="left:90.8px;top:0;width:1.4px;height:3px;background:#ffee00"></div></div>
<div style="left:582px;top:188px;width:1px;height:1px;background:#c0c0c0"></div>
<div style="left:612px;top:188px;width:1px;height:1px;background:#c0c0c0"></div>
<div style="left:642px;top:188px;width:1px;height:1px;background:#c0c0c0"></div>
<div style="left:667px;top:188px;width:1px;height:1px;background:#c0c0c0"></div>
<div style="left:692px;top:188px;width:1px;height:1px;background:#c0c0c0"></div>
<div style="left:717px;top:188px;width:1px;height:1px;background:#c0c0c0"></div>
<span class="t" style="left:582px;top:191px;font-size:8px;line-height:8px;color:#b8b8b8;letter-spacing:-0.2px">-50</span>
<span class="t" style="left:602px;top:191px;width:20px;text-align:center;font-size:8px;line-height:8px;color:#b8b8b8;letter-spacing:-0.2px">-20</span>
<span class="t" style="left:633px;top:191px;width:20px;text-align:center;font-size:8px;line-height:8px;color:#b8b8b8;letter-spacing:-0.2px">-10</span>
<span class="t" style="left:657px;top:191px;width:20px;text-align:center;font-size:8px;line-height:8px;color:#b8b8b8;letter-spacing:-0.2px">-5</span>
<span class="t" style="left:682px;top:191px;width:20px;text-align:center;font-size:8px;line-height:8px;color:#b8b8b8;letter-spacing:-0.2px">0</span>
<span class="t" style="left:699px;top:191px;width:20px;text-align:right;font-size:8px;line-height:8px;color:#b8b8b8;letter-spacing:-0.2px">+5</span>
<div class="btn" style="left:1518px;top:172px;width:24px;height:24px;font-size:8.5px;line-height:22px;letter-spacing:-0.5px;border:1px solid #787878">EDIT</div>
<div style="left:1549px;top:173px;width:6px;height:3px;background:#c0c0c0;border-bottom:1px solid #777"></div>
<div style="left:1px;top:336px;width:1558px;height:166px;background:linear-gradient(#444 0,#424242 6px,#3f3f3f 60%,#3d3d3d 100%)"></div>
<div class="sep" style="left:1px;top:334px;width:1558px;height:2px;"></div>
<div class="dk" style="left:13px;top:339px;width:116px;height:26px;"></div>
<span class="t b" style="left:17px;top:340px;font-size:12px;line-height:14px;color:#62d2f6;letter-spacing:-0.1px">Piano</span>
<span class="t" style="left:17px;top:353px;font-size:10px;line-height:11px;color:#62d2f6;opacity:0.75;letter-spacing:-0.2px">midi</span>
<svg style="left:122px;top:360px" width="5" height="3" viewBox="0 0 5 3"><path d="M0 0H5L2.5 3Z" fill="#4d9fba"/></svg>
<div style="left:146px;top:345px;width:20px;height:11px;background:linear-gradient(#18d818,#08b808);border:1px solid #161616;border-radius:2.5px;box-shadow:0 0 1px #222"></div>
<span class="t" style="left:146px;top:357px;width:20px;text-align:center;font-size:8.5px;line-height:10px;letter-spacing:-0.2px">Play</span>
<div class="sb" style="left:170px;top:345px;width:20px;height:11px;color:#fff;font-size:9px;line-height:9px;text-align:center"></div>
<span class="t" style="left:170px;top:357px;width:20px;text-align:center;font-size:8.5px;line-height:10px;letter-spacing:-0.2px">Rec</span>
<svg style="left:200px;top:334px" width="145" height="34" viewBox="200 0 145 34"><rect x="207.8" y="8" width="1" height="2" fill="#c8c8c8"/><rect x="207.8" y="24" width="1" height="2" fill="#c8c8c8"/><rect x="222.8" y="8" width="1" height="2" fill="#c8c8c8"/><rect x="222.8" y="24" width="1" height="2" fill="#c8c8c8"/><rect x="234.0" y="8" width="1" height="2" fill="#c8c8c8"/><rect x="234.0" y="24" width="1" height="2" fill="#c8c8c8"/><rect x="247.0" y="8" width="1" height="2" fill="#c8c8c8"/><rect x="247.0" y="24" width="1" height="2" fill="#c8c8c8"/><rect x="262.0" y="8" width="1" height="2" fill="#c8c8c8"/><rect x="262.0" y="24" width="1" height="2" fill="#c8c8c8"/><rect x="274.0" y="8" width="1" height="2" fill="#c8c8c8"/><rect x="274.0" y="24" width="1" height="2" fill="#c8c8c8"/><rect x="281.0" y="8" width="1" height="2" fill="#c8c8c8"/><rect x="281.0" y="24" width="1" height="2" fill="#c8c8c8"/><rect x="289.0" y="8" width="1" height="2" fill="#c8c8c8"/><rect x="289.0" y="24" width="1" height="2" fill="#c8c8c8"/><rect x="298.2" y="8" width="1" height="2" fill="#c8c8c8"/><rect x="298.2" y="24" width="1" height="2" fill="#c8c8c8"/><rect x="319.0" y="8" width="1" height="2" fill="#c8c8c8"/><rect x="319.0" y="24" width="1" height="2" fill="#c8c8c8"/><rect x="331.2" y="8" width="1" height="2" fill="#c8c8c8"/><rect x="331.2" y="24" width="1" height="2" fill="#c8c8c8"/><rect x="307.8" y="7" width="1" height="4" fill="#d8d8d8"/><rect x="307.8" y="22" width="1" height="4" fill="#d8d8d8"/><rect x="208" y="15" width="128" height="1" fill="#383838"/><rect x="208" y="16" width="128" height="1" fill="#272727"/><rect x="208" y="17" width="128" height="1" fill="#565656"/></svg>
<div style="left:284px;top:344px;width:7px;height:14px;background:linear-gradient(90deg,#b8b8b8,#f4f4f4 25%,#fff 50%,#f0f0f0 75%,#a8a8a8);border-radius:2px;box-shadow:0 0 1px #111"><div style="left:3px;top:2px;width:1px;height:10px;background:#6a6a6a"></div></div>
<span class="t" style="left:207px;top:361px;font-size:8px;line-height:8px;color:#b4b4b4;letter-spacing:-0.4px">-6.8</span>
<div class="sb" style="left:353px;top:340px;width:13px;height:9px;"></div>
<span class="t" style="left:369px;top:340px;font-size:8.5px;line-height:10px">M</span>
<div class="sb" style="left:353px;top:354px;width:13px;height:9px;"></div>
<span class="t" style="left:369px;top:354px;font-size:8.5px;line-height:10px">S</span>
<svg style="left:383px;top:335px" width="32" height="32" viewBox="-16 -16 32 32"><rect x="-8" y="10" width="1.0" height="1.0" fill="#d0d0d0"/><rect x="-13" y="5" width="1.0" height="1.0" fill="#d0d0d0"/><rect x="-14" y="-2" width="1.0" height="1.0" fill="#d0d0d0"/><rect x="-12" y="-8" width="1.0" height="1.0" fill="#d0d0d0"/><rect x="-7" y="-13" width="1.0" height="1.0" fill="#d0d0d0"/><rect x="-1" y="-14" width="1.0" height="1.0" fill="#d0d0d0"/><rect x="5" y="-13" width="1.0" height="1.0" fill="#d0d0d0"/><rect x="10" y="-8" width="1.0" height="1.0" fill="#d0d0d0"/><rect x="12" y="-2" width="1.0" height="1.0" fill="#d0d0d0"/><rect x="11" y="5" width="1.0" height="1.0" fill="#d0d0d0"/><rect x="6" y="10" width="1.0" height="1.0" fill="#d0d0d0"/><circle cx="-0.2" cy="0.6" r="9.9" fill="#1c1c1c"/></svg>
<div style="left:389.4px;top:341.9px;width:18.2px;height:18.2px;border-radius:50%;background:conic-gradient(from 0deg,#5a5a5a 0deg,#565656 40deg,#444 85deg,#343434 115deg,#484848 150deg,#5c5c5c 200deg,#4c4c4c 250deg,#363636 298deg,#4c4c4c 335deg,#5a5a5a 360deg);box-shadow:inset 0 0 2px 0 rgba(0,0,0,.5),0 0 0 0.8px #1e1e1e"></div>
<svg style="left:394px;top:341px" width="9" height="9" viewBox="0 0 9 9"><circle cx="4.50" cy="4.50" r="2.4" fill="#00d8e8"/></svg>
<span class="t" style="left:384px;top:337px;font-size:6.5px;line-height:8px">P</span>
<span class="t" style="left:390px;top:360.5px;width:20px;text-align:center;font-size:7px;line-height:8px;color:#c8c8c8">50</span>
<svg style="left:419px;top:335px" width="32" height="32" viewBox="-16 -16 32 32"><rect x="-8" y="10" width="1.0" height="1.0" fill="#d0d0d0"/><rect x="-12" y="5" width="1.0" height="1.0" fill="#d0d0d0"/><rect x="-14" y="-2" width="1.0" height="1.0" fill="#d0d0d0"/><rect x="-12" y="-8" width="1.0" height="1.0" fill="#d0d0d0"/><rect x="-7" y="-13" width="1.0" height="1.0" fill="#d0d0d0"/><rect x="0" y="-14" width="1.0" height="1.0" fill="#d0d0d0"/><rect x="6" y="-13" width="1.0" height="1.0" fill="#d0d0d0"/><rect x="11" y="-8" width="1.0" height="1.0" fill="#d0d0d0"/><rect x="13" y="-2" width="1.0" height="1.0" fill="#d0d0d0"/><rect x="11" y="5" width="1.0" height="1.0" fill="#d0d0d0"/><rect x="7" y="10" width="1.0" height="1.0" fill="#d0d0d0"/><circle cx="0.3" cy="0.6" r="9.9" fill="#1c1c1c"/></svg>
<div style="left:425.9px;top:341.9px;width:18.2px;height:18.2px;border-radius:50%;background:conic-gradient(from 0deg,#5a5a5a 0deg,#565656 40deg,#444 85deg,#343434 115deg,#484848 150deg,#5c5c5c 200deg,#4c4c4c 250deg,#363636 298deg,#4c4c4c 335deg,#5a5a5a 360deg);box-shadow:inset 0 0 2px 0 rgba(0,0,0,.5),0 0 0 0.8px #1e1e1e"></div>
<svg style="left:434px;top:342px" width="9" height="9" viewBox="0 0 9 9"><circle cx="4.54" cy="4.79" r="2.4" fill="#fff"/></svg>
<span class="t" style="left:419.5px;top:337px;font-size:8px;line-height:8px">1</span>
<span class="t" style="left:425px;top:360px;width:20px;text-align:center;font-size:8px;line-height:8px;color:#c8c8c8">-10</span>
<div class="dk" style="left:463px;top:338px;width:33px;height:13px;font-size:9.5px;line-height:11px;text-align:center;color:#ffff28;letter-spacing:-0.2px">Samp</div>
<div class="sb" style="left:470px;top:354px;width:19px;height:10.5px;"></div>
<svg style="left:490px;top:358px" width="6" height="3" viewBox="0 0 6 3"><path d="M0 0H6L3.0 3Z" fill="#c8c8c8"/></svg>
<div class="dk" style="left:498px;top:338px;width:33px;height:13px;font-size:9.5px;line-height:11px;text-align:center;color:#ffffff;letter-spacing:-0.2px"></div>
<div class="sb" style="left:505px;top:354px;width:19px;height:10.5px;"></div>
<svg style="left:525px;top:358px" width="6" height="3" viewBox="0 0 6 3"><path d="M0 0H6L3.0 3Z" fill="#c8c8c8"/></svg>
<div class="dk" style="left:533px;top:338px;width:33px;height:13px;font-size:9.5px;line-height:11px;text-align:center;color:#ffffff;letter-spacing:-0.2px"></div>
<div class="sb" style="left:540px;top:354px;width:19px;height:10.5px;"></div>
<svg style="left:560px;top:358px" width="6" height="3" viewBox="0 0 6 3"><path d="M0 0H6L3.0 3Z" fill="#c8c8c8"/></svg>
<div style="left:582px;top:343px;width:136px;height:12px;background:#0a2a22;border:1px solid #13352b;box-shadow:0 0 0 1px #4a4a4a"></div>
<div style="left:583px;top:345px;width:134px;height:3px;overflow:hidden"><div style="left:0.0px;top:0;width:84.0px;height:3px;background:#06303a"></div><div style="left:84.0px;top:0;width:25.5px;height:3px;background:#5a5200"></div><div style="left:109.5px;top:0;width:24.5px;height:3px;background:#5c0606"></div></div>
<div style="left:583px;top:350px;width:134px;height:3px;overflow:hidden"><div style="left:0.0px;top:0;width:84.0px;height:3px;background:#06303a"></div><div style="left:84.0px;top:0;width:25.5px;height:3px;background:#5a5200"></div><div style="left:109.5px;top:0;width:24.5px;height:3px;background:#5c0606"></div></div>
<div style="left:582px;top:356px;width:1px;height:1px;background:#c0c0c0"></div>
<div style="left:612px;top:356px;width:1px;height:1px;background:#c0c0c0"></div>
<div style="left:642px;top:356px;width:1px;height:1px;background:#c0c0c0"></div>
<div style="left:667px;top:356px;width:1px;height:1px;background:#c0c0c0"></div>
<div style="left:692px;top:356px;width:1px;height:1px;background:#c0c0c0"></div>
<div style="left:717px;top:356px;width:1px;height:1px;background:#c0c0c0"></div>
<span class="t" style="left:582px;top:359px;font-size:8px;line-height:8px;color:#b8b8b8;letter-spacing:-0.2px">-50</span>
<span class="t" style="left:602px;top:359px;width:20px;text-align:center;font-size:8px;line-height:8px;color:#b8b8b8;letter-spacing:-0.2px">-20</span>
<span class="t" style="left:633px;top:359px;width:20px;text-align:center;font-size:8px;line-height:8px;color:#b8b8b8;letter-spacing:-0.2px">-10</span>
<span class="t" style="left:657px;top:359px;width:20px;text-align:center;font-size:8px;line-height:8px;color:#b8b8b8;letter-spacing:-0.2px">-5</span>
<span class="t" style="left:682px;top:359px;width:20px;text-align:center;font-size:8px;line-height:8px;color:#b8b8b8;letter-spacing:-0.2px">0</span>
<span class="t" style="left:699px;top:359px;width:20px;text-align:right;font-size:8px;line-height:8px;color:#b8b8b8;letter-spacing:-0.2px">+5</span>
<div class="btn" style="left:1518px;top:340px;width:24px;height:24px;font-size:8.5px;line-height:22px;letter-spacing:-0.5px;border:1px solid #787878">EDIT</div>
<div style="left:1549px;top:341px;width:6px;height:3px;background:#c0c0c0;border-bottom:1px solid #777"></div>
<div style="left:1px;top:504px;width:1558px;height:32px;background:linear-gradient(#444 0,#424242 6px,#3f3f3f 60%,#3d3d3d 100%)"></div>
<div class="sep" style="left:1px;top:502px;width:1558px;height:2px;"></div>
<div class="dk" style="left:13px;top:507px;width:116px;height:26px;"></div>
<span class="t b" style="left:17px;top:508px;font-size:12px;line-height:14px;color:#f4f43c;letter-spacing:-0.1px">Vocal</span>
<span class="t" style="left:17px;top:521px;font-size:10px;line-height:11px;color:#f4f43c;opacity:0.75;letter-spacing:-0.2px">mono audio (.aem)</span>
<svg style="left:122px;top:528px" width="5" height="3" viewBox="0 0 5 3"><path d="M0 0H5L2.5 3Z" fill="#a8a83a"/></svg>
<div style="left:146px;top:513px;width:20px;height:11px;background:linear-gradient(#18d818,#08b808);border:1px solid #161616;border-radius:2.5px;box-shadow:0 0 1px #222"></div>
<span class="t" style="left:146px;top:525px;width:20px;text-align:center;font-size:8.5px;line-height:10px;letter-spacing:-0.2px">Play</span>
<div class="sb" style="left:170px;top:513px;width:20px;height:11px;color:#fff;font-size:9px;line-height:9px;text-align:center">1</div>
<span class="t" style="left:170px;top:525px;width:20px;text-align:center;font-size:8.5px;line-height:10px;letter-spacing:-0.2px">Rec</span>
<svg style="left:191px;top:517px" width="5" height="3" viewBox="0 0 5 3"><path d="M0 0H5L2.5 3Z" fill="#c8c8c8"/></svg>
<svg style="left:200px;top:502px" width="145" height="34" viewBox="200 0 145 34"><rect x="207.8" y="8" width="1" height="2" fill="#c8c8c8"/><rect x="207.8" y="24" width="1" height="2" fill="#c8c8c8"/><rect x="222.8" y="8" width="1" height="2" fill="#c8c8c8"/><rect x="222.8" y="24" width="1" height="2" fill="#c8c8c8"/><rect x="234.0" y="8" width="1" height="2" fill="#c8c8c8"/><rect x="234.0" y="24" width="1" height="2" fill="#c8c8c8"/><rect x="247.0" y="8" width="1" height="2" fill="#c8c8c8"/><rect x="247.0" y="24" width="1" height="2" fill="#c8c8c8"/><rect x="262.0" y="8" width="1" height="2" fill="#c8c8c8"/><rect x="262.0" y="24" width="1" height="2" fill="#c8c8c8"/><rect x="274.0" y="8" width="1" height="2" fill="#c8c8c8"/><rect x="274.0" y="24" width="1" height="2" fill="#c8c8c8"/><rect x="281.0" y="8" width="1" height="2" fill="#c8c8c8"/><rect x="281.0" y="24" width="1" height="2" fill="#c8c8c8"/><rect x="289.0" y="8" width="1" height="2" fill="#c8c8c8"/><rect x="289.0" y="24" width="1" height="2" fill="#c8c8c8"/><rect x="298.2" y="8" width="1" height="2" fill="#c8c8c8"/><rect x="298.2" y="24" width="1" height="2" fill="#c8c8c8"/><rect x="319.0" y="8" width="1" height="2" fill="#c8c8c8"/><rect x="319.0" y="24" width="1" height="2" fill="#c8c8c8"/><rect x="331.2" y="8" width="1" height="2" fill="#c8c8c8"/><rect x="331.2" y="24" width="1" height="2" fill="#c8c8c8"/><rect x="307.8" y="7" width="1" height="4" fill="#d8d8d8"/><rect x="307.8" y="22" width="1" height="4" fill="#d8d8d8"/><rect x="208" y="15" width="128" height="1" fill="#383838"/><rect x="208" y="16" width="128" height="1" fill="#272727"/><rect x="208" y="17" width="128" height="1" fill="#565656"/></svg>
<div style="left:305px;top:512px;width:7px;height:14px;background:linear-gradient(90deg,#b8b8b8,#f4f4f4 25%,#fff 50%,#f0f0f0 75%,#a8a8a8);border-radius:2px;box-shadow:0 0 1px #111"><div style="left:3px;top:2px;width:1px;height:10px;background:#6a6a6a"></div></div>
<span class="t" style="left:207px;top:529px;font-size:8px;line-height:8px;color:#b4b4b4;letter-spacing:-0.4px">0.0</span>
<div class="sb" style="left:353px;top:508px;width:13px;height:9px;"></div>
<span class="t" style="left:369px;top:508px;font-size:8.5px;line-height:10px">M</span>
<div class="sb" style="left:353px;top:522px;width:13px;height:9px;"></div>
<span class="t" style="left:369px;top:522px;font-size:8.5px;line-height:10px">S</span>
<svg style="left:383px;top:503px" width="32" height="32" viewBox="-16 -16 32 32"><rect x="-8" y="10" width="1.0" height="1.0" fill="#d0d0d0"/><rect x="-13" y="5" width="1.0" height="1.0" fill="#d0d0d0"/><rect x="-14" y="-2" width="1.0" height="1.0" fill="#d0d0d0"/><rect x="-12" y="-8" width="1.0" height="1.0" fill="#d0d0d0"/><rect x="-7" y="-13" width="1.0" height="1.0" fill="#d0d0d0"/><rect x="-1" y="-14" width="1.0" height="1.0" fill="#d0d0d0"/><rect x="5" y="-13" width="1.0" height="1.0" fill="#d0d0d0"/><rect x="10" y="-8" width="1.0" height="1.0" fill="#d0d0d0"/><rect x="12" y="-2" width="1.0" height="1.0" fill="#d0d0d0"/><rect x="11" y="5" width="1.0" height="1.0" fill="#d0d0d0"/><rect x="6" y="10" width="1.0" height="1.0" fill="#d0d0d0"/><circle cx="-0.2" cy="0.6" r="9.9" fill="#1c1c1c"/></svg>
<div style="left:389.4px;top:509.9px;width:18.2px;height:18.2px;border-radius:50%;background:conic-gradient(from 0deg,#5a5a5a 0deg,#565656 40deg,#444 85deg,#343434 115deg,#484848 150deg,#5c5c5c 200deg,#4c4c4c 250deg,#363636 298deg,#4c4c4c 335deg,#5a5a5a 360deg);box-shadow:inset 0 0 2px 0 rgba(0,0,0,.5),0 0 0 0.8px #1e1e1e"></div>
<svg style="left:394px;top:509px" width="9" height="9" viewBox="0 0 9 9"><circle cx="4.50" cy="4.50" r="2.4" fill="#00d8e8"/></svg>
<span class="t" style="left:384px;top:505px;font-size:6.5px;line-height:8px">P</span>
<span class="t" style="left:390px;top:528.5px;width:20px;text-align:center;font-size:7px;line-height:8px;color:#c8c8c8">50</span>
<svg style="left:419px;top:503px" width="32" height="32" viewBox="-16 -16 32 32"><rect x="-8" y="10" width="1.0" height="1.0" fill="#d0d0d0"/><rect x="-12" y="5" width="1.0" height="1.0" fill="#d0d0d0"/><rect x="-14" y="-2" width="1.0" height="1.0" fill="#d0d0d0"/><rect x="-12" y="-8" width="1.0" height="1.0" fill="#d0d0d0"/><rect x="-7" y="-13" width="1.0" height="1.0" fill="#d0d0d0"/><rect x="0" y="-14" width="1.0" height="1.0" fill="#d0d0d0"/><rect x="6" y="-13" width="1.0" height="1.0" fill="#d0d0d0"/><rect x="11" y="-8" width="1.0" height="1.0" fill="#d0d0d0"/><rect x="13" y="-2" width="1.0" height="1.0" fill="#d0d0d0"/><rect x="11" y="5" width="1.0" height="1.0" fill="#d0d0d0"/><rect x="7" y="10" width="1.0" height="1.0" fill="#d0d0d0"/><circle cx="0.3" cy="0.6" r="9.9" fill="#1c1c1c"/></svg>
<div style="left:425.9px;top:509.9px;width:18.2px;height:18.2px;border-radius:50%;background:conic-gradient(from 0deg,#5a5a5a 0deg,#565656 40deg,#444 85deg,#343434 115deg,#484848 150deg,#5c5c5c 200deg,#4c4c4c 250deg,#363636 298deg,#4c4c4c 335deg,#5a5a5a 360deg);box-shadow:inset 0 0 2px 0 rgba(0,0,0,.5),0 0 0 0.8px #1e1e1e"></div>
<svg style="left:427px;top:519px" width="9" height="9" viewBox="0 0 9 9"><circle cx="4.46" cy="4.21" r="2.4" fill="#fff"/></svg>
<span class="t" style="left:419.5px;top:505px;font-size:8px;line-height:8px">1</span>
<span class="t" style="left:425px;top:528px;width:20px;text-align:center;font-size:8px;line-height:8px;color:#c8c8c8">-</span>
<div class="dk" style="left:463px;top:506px;width:33px;height:13px;font-size:9.5px;line-height:11px;text-align:center;color:#ffffff;letter-spacing:-0.2px"></div>
<div class="sb" style="left:470px;top:522px;width:19px;height:10.5px;"></div>
<svg style="left:490px;top:526px" width="6" height="3" viewBox="0 0 6 3"><path d="M0 0H6L3.0 3Z" fill="#c8c8c8"/></svg>
<div class="dk" style="left:498px;top:506px;width:33px;height:13px;font-size:9.5px;line-height:11px;text-align:center;color:#ffffff;letter-spacing:-0.2px"></div>
<div class="sb" style="left:505px;top:522px;width:19px;height:10.5px;"></div>
<svg style="left:525px;top:526px" width="6" height="3" viewBox="0 0 6 3"><path d="M0 0H6L3.0 3Z" fill="#c8c8c8"/></svg>
<div class="dk" style="left:533px;top:506px;width:33px;height:13px;font-size:9.5px;line-height:11px;text-align:center;color:#ffffff;letter-spacing:-0.2px"></div>
<div class="sb" style="left:540px;top:522px;width:19px;height:10.5px;"></div>
<svg style="left:560px;top:526px" width="6" height="3" viewBox="0 0 6 3"><path d="M0 0H6L3.0 3Z" fill="#c8c8c8"/></svg>
<div style="left:582px;top:511px;width:136px;height:12px;background:#0a2a22;border:1px solid #13352b;box-shadow:0 0 0 1px #4a4a4a"></div>
<div style="left:583px;top:513px;width:134px;height:3px;overflow:hidden"><div style="left:0.0px;top:0;width:84.0px;height:3px;background:#06303a"></div><div style="left:84.0px;top:0;width:25.5px;height:3px;background:#5a5200"></div><div style="left:109.5px;top:0;width:24.5px;height:3px;background:#5c0606"></div><div style="left:0.0px;top:0;width:35.5px;height:3px;background:#00e0ff"></div><div style="left:46.3px;top:0;width:1.4px;height:3px;background:#00e0ff"></div></div>
<div style="left:583px;top:518px;width:134px;height:3px;overflow:hidden"><div style="left:0.0px;top:0;width:84.0px;height:3px;background:#06303a"></div><div style="left:84.0px;top:0;width:25.5px;height:3px;background:#5a5200"></div><div style="left:109.5px;top:0;width:24.5px;height:3px;background:#5c0606"></div><div style="left:0.0px;top:0;width:35.5px;height:3px;background:#00e0ff"></div><div style="left:46.3px;top:0;width:1.4px;height:3px;background:#00e0ff"></div></div>
<div style="left:582px;top:524px;width:1px;height:1px;background:#c0c0c0"></div>
<div style="left:612px;top:524px;width:1px;height:1px;background:#c0c0c0"></div>
<div style="left:642px;top:524px;width:1px;height:1px;background:#c0c0c0"></div>
<div style="left:667px;top:524px;width:1px;height:1px;background:#c0c0c0"></div>
<div style="left:692px;top:524px;width:1px;height:1px;background:#c0c0c0"></div>
<div style="left:717px;top:524px;width:1px;height:1px;background:#c0c0c0"></div>
<span class="t" style="left:582px;top:527px;font-size:8px;line-height:8px;color:#b8b8b8;letter-spacing:-0.2px">-50</span>
<span class="t" style="left:602px;top:527px;width:20px;text-align:center;font-size:8px;line-height:8px;color:#b8b8b8;letter-spacing:-0.2px">-20</span>
<span class="t" style="left:633px;top:527px;width:20px;text-align:center;font-size:8px;line-height:8px;color:#b8b8b8;letter-spacing:-0.2px">-10</span>
<span class="t" style="left:657px;top:527px;width:20px;text-align:center;font-size:8px;line-height:8px;color:#b8b8b8;letter-spacing:-0.2px">-5</span>
<span class="t" style="left:682px;top:527px;width:20px;text-align:center;font-size:8px;line-height:8px;color:#b8b8b8;letter-spacing:-0.2px">0</span>
<span class="t" style="left:699px;top:527px;width:20px;text-align:right;font-size:8px;line-height:8px;color:#b8b8b8;letter-spacing:-0.2px">+5</span>
<svg style="left:807px;top:507px" width="703" height="26" viewBox="807 0 703 26"><rect x="807.5" y="0.5" width="702" height="25" fill="#2f2f2f" stroke="#5a5a5a"/><rect x="861.0" y="1" width="1" height="24" fill="#6a6a6a"/><rect x="1034.1" y="1" width="1" height="24" fill="#6a6a6a"/><rect x="1206.2" y="1" width="1" height="24" fill="#6a6a6a"/><rect x="1378.1" y="1" width="1" height="24" fill="#6a6a6a"/><rect x="809" y="12.6" width="700" height="0.9" fill="#5e5e34"/><path d="M1208 11.8h1v2.4h-1zM1209 11.5h1v2.7h-1zM1210 11.7h1v2.5h-1zM1211 11.9h1v2.4h-1zM1212 11.6h1v2.8h-1zM1213 11.9h1v2.3h-1zM1214 11.9h1v2.6h-1zM1215 11.5h1v2.6h-1zM1216 11.3h1v3.4h-1zM1217 11.5h1v3.0h-1zM1218 11.8h1v2.3h-1zM1219 11.5h1v2.7h-1zM1220 11.7h1v2.6h-1zM1221 11.8h1v2.7h-1zM1222 11.5h1v3.2h-1zM1223 11.4h1v3.2h-1zM1224 11.4h1v3.3h-1zM1225 11.4h1v3.0h-1zM1226 10.9h1v4.1h-1zM1227 10.9h1v4.0h-1zM1228 11.3h1v3.4h-1zM1229 11.2h1v3.4h-1zM1230 10.7h1v4.4h-1zM1231 10.5h1v4.6h-1zM1232 10.2h1v5.4h-1zM1233 11.1h1v4.0h-1zM1234 10.0h1v5.4h-1zM1235 9.5h1v6.2h-1zM1236 10.3h1v6.1h-1zM1237 8.9h1v7.4h-1zM1238 9.7h1v7.0h-1zM1239 7.7h1v10.2h-1zM1240 9.0h1v8.3h-1zM1241 9.0h1v7.8h-1zM1242 7.6h1v9.5h-1zM1243 8.1h1v9.6h-1zM1244 8.9h1v9.4h-1zM1245 9.0h1v9.1h-1zM1246 9.0h1v8.6h-1zM1247 8.8h1v8.5h-1zM1248 7.2h1v11.2h-1zM1249 8.6h1v10.0h-1zM1250 8.8h1v8.8h-1zM1251 8.1h1v9.4h-1zM1252 10.0h1v7.5h-1zM1253 10.3h1v5.5h-1zM1254 10.1h1v5.2h-1zM1255 11.2h1v3.4h-1zM1256 11.6h1v3.2h-1zM1257 11.7h1v2.8h-1zM1258 11.9h1v2.3h-1zM1259 11.6h1v2.6h-1zM1260 11.8h1v2.6h-1zM1261 12.0h1v2.0h-1zM1262 11.6h1v2.8h-1zM1263 11.9h1v2.1h-1zM1264 11.7h1v2.8h-1zM1265 12.0h1v2.5h-1zM1266 11.6h1v2.7h-1zM1267 11.8h1v2.1h-1zM1268 12.0h1v2.4h-1zM1269 11.9h1v2.4h-1zM1270 11.9h1v2.4h-1zM1271 11.7h1v2.3h-1zM1272 12.0h1v2.3h-1zM1273 12.0h1v2.0h-1zM1274 11.8h1v2.6h-1zM1275 11.7h1v2.3h-1zM1276 11.6h1v2.5h-1zM1277 12.1h1v2.0h-1zM1278 11.8h1v2.1h-1zM1279 12.0h1v2.2h-1zM1280 11.8h1v2.2h-1zM1281 11.9h1v2.5h-1zM1282 11.5h1v2.7h-1zM1283 11.7h1v2.5h-1zM1284 12.0h1v2.0h-1zM1285 12.1h1v2.4h-1zM1286 11.7h1v2.8h-1zM1287 12.1h1v2.2h-1zM1288 11.8h1v2.5h-1zM1289 11.9h1v2.6h-1zM1290 12.0h1v2.2h-1zM1291 11.7h1v2.7h-1zM1292 11.7h1v2.6h-1zM1293 11.6h1v2.8h-1zM1294 11.9h1v2.4h-1zM1295 11.6h1v2.8h-1zM1296 11.8h1v2.5h-1zM1297 11.6h1v2.6h-1zM1298 11.7h1v2.4h-1zM1299 11.8h1v2.5h-1zM1300 12.0h1v2.3h-1zM1301 11.5h1v2.9h-1zM1302 11.7h1v2.5h-1zM1303 11.7h1v2.6h-1zM1304 11.8h1v2.5h-1zM1305 12.0h1v2.3h-1zM1306 12.0h1v2.2h-1zM1307 11.8h1v2.2h-1zM1308 11.7h1v2.5h-1zM1309 11.7h1v2.7h-1zM1310 11.9h1v2.0h-1zM1311 11.3h1v3.7h-1zM1312 10.8h1v4.3h-1zM1313 10.1h1v5.6h-1zM1314 10.6h1v5.4h-1zM1315 10.7h1v5.0h-1zM1316 10.8h1v4.6h-1zM1317 10.2h1v5.8h-1zM1318 10.1h1v5.3h-1zM1319 10.4h1v4.9h-1zM1320 10.9h1v4.6h-1zM1321 10.1h1v5.8h-1zM1322 10.3h1v5.7h-1zM1323 10.7h1v4.4h-1zM1324 10.6h1v4.7h-1zM1325 10.8h1v4.6h-1zM1326 10.4h1v5.1h-1zM1327 10.7h1v5.2h-1zM1328 10.0h1v5.5h-1zM1329 11.0h1v4.0h-1zM1330 10.1h1v4.9h-1zM1331 10.3h1v5.3h-1zM1332 10.7h1v5.1h-1zM1333 11.0h1v4.1h-1zM1334 10.5h1v4.4h-1zM1335 10.1h1v5.1h-1zM1336 10.9h1v4.1h-1zM1337 10.4h1v5.1h-1zM1338 10.4h1v5.3h-1zM1339 10.2h1v5.8h-1zM1340 10.3h1v4.9h-1zM1341 10.5h1v4.6h-1zM1342 11.0h1v4.4h-1zM1343 10.3h1v4.9h-1zM1344 10.8h1v4.6h-1zM1345 10.3h1v5.2h-1zM1346 10.4h1v5.4h-1zM1347 10.6h1v5.2h-1zM1348 10.1h1v5.0h-1zM1349 10.0h1v5.7h-1zM1350 10.9h1v4.5h-1zM1351 10.4h1v5.6h-1zM1352 11.2h1v3.8h-1zM1353 11.5h1v3.0h-1zM1354 11.5h1v2.8h-1zM1355 11.6h1v2.5h-1zM1356 11.6h1v2.8h-1zM1357 11.7h1v2.7h-1zM1358 11.9h1v2.5h-1zM1359 11.5h1v2.9h-1zM1360 11.8h1v2.5h-1zM1361 11.9h1v2.5h-1zM1362 11.7h1v2.4h-1zM1363 12.1h1v2.0h-1zM1364 11.9h1v2.4h-1zM1365 11.9h1v2.0h-1zM1366 11.8h1v2.1h-1zM1367 11.8h1v2.1h-1zM1368 12.0h1v2.2h-1zM1369 12.1h1v1.7h-1zM1370 12.0h1v2.1h-1zM1371 11.9h1v2.2h-1zM1372 11.8h1v2.2h-1zM1373 11.8h1v1.9h-1zM1374 12.2h1v1.8h-1zM1375 12.2h1v1.9h-1zM1376 12.0h1v1.9h-1zM1377 12.0h1v2.0h-1z" fill="#f2f240"/><rect x="1362.1" y="0" width="1" height="26" fill="#a0a0a0"/></svg>
<div class="btn" style="left:1518px;top:508px;width:24px;height:24px;font-size:8.5px;line-height:22px;letter-spacing:-0.5px;border:1px solid #787878">EDIT</div>
<div style="left:1549px;top:509px;width:6px;height:3px;background:#c0c0c0;border-bottom:1px solid #777"></div>
<div style="left:1px;top:538px;width:1558px;height:32px;background:linear-gradient(#444 0,#424242 6px,#3f3f3f 60%,#3d3d3d 100%)"></div>
<div class="sep" style="left:1px;top:536px;width:1558px;height:2px;"></div>
<div class="dk" style="left:13px;top:541px;width:116px;height:26px;"></div>
<span class="t b" style="left:17px;top:542px;font-size:12px;line-height:14px;color:#f4f43c;letter-spacing:-0.1px">Vocal 2</span>
<span class="t" style="left:17px;top:555px;font-size:10px;line-height:11px;color:#f4f43c;opacity:0.75;letter-spacing:-0.2px">mono audio (.aem)</span>
<svg style="left:122px;top:562px" width="5" height="3" viewBox="0 0 5 3"><path d="M0 0H5L2.5 3Z" fill="#a8a83a"/></svg>
<div style="left:146px;top:547px;width:20px;height:11px;background:linear-gradient(#18d818,#08b808);border:1px solid #161616;border-radius:2.5px;box-shadow:0 0 1px #222"></div>
<span class="t" style="left:146px;top:559px;width:20px;text-align:center;font-size:8.5px;line-height:10px;letter-spacing:-0.2px">Play</span>
<div class="sb" style="left:170px;top:547px;width:20px;height:11px;color:#fff;font-size:9px;line-height:9px;text-align:center">1</div>
<span class="t" style="left:170px;top:559px;width:20px;text-align:center;font-size:8.5px;line-height:10px;letter-spacing:-0.2px">Rec</span>
<svg style="left:191px;top:551px" width="5" height="3" viewBox="0 0 5 3"><path d="M0 0H5L2.5 3Z" fill="#c8c8c8"/></svg>
<svg style="left:200px;top:536px" width="145" height="34" viewBox="200 0 145 34"><rect x="207.8" y="8" width="1" height="2" fill="#c8c8c8"/><rect x="207.8" y="24" width="1" height="2" fill="#c8c8c8"/><rect x="222.8" y="8" width="1" height="2" fill="#c8c8c8"/><rect x="222.8" y="24" width="1" height="2" fill="#c8c8c8"/><rect x="234.0" y="8" width="1" height="2" fill="#c8c8c8"/><rect x="234.0" y="24" width="1" height="2" fill="#c8c8c8"/><rect x="247.0" y="8" width="1" height="2" fill="#c8c8c8"/><rect x="247.0" y="24" width="1" height="2" fill="#c8c8c8"/><rect x="262.0" y="8" width="1" height="2" fill="#c8c8c8"/><rect x="262.0" y="24" width="1" height="2" fill="#c8c8c8"/><rect x="274.0" y="8" width="1" height="2" fill="#c8c8c8"/><rect x="274.0" y="24" width="1" height="2" fill="#c8c8c8"/><rect x="281.0" y="8" width="1" height="2" fill="#c8c8c8"/><rect x="281.0" y="24" width="1" height="2" fill="#c8c8c8"/><rect x="289.0" y="8" width="1" height="2" fill="#c8c8c8"/><rect x="289.0" y="24" width="1" height="2" fill="#c8c8c8"/><rect x="298.2" y="8" width="1" height="2" fill="#c8c8c8"/><rect x="298.2" y="24" width="1" height="2" fill="#c8c8c8"/><rect x="319.0" y="8" width="1" height="2" fill="#c8c8c8"/><rect x="319.0" y="24" width="1" height="2" fill="#c8c8c8"/><rect x="331.2" y="8" width="1" height="2" fill="#c8c8c8"/><rect x="331.2" y="24" width="1" height="2" fill="#c8c8c8"/><rect x="307.8" y="7" width="1" height="4" fill="#d8d8d8"/><rect x="307.8" y="22" width="1" height="4" fill="#d8d8d8"/><rect x="208" y="15" width="128" height="1" fill="#383838"/><rect x="208" y="16" width="128" height="1" fill="#272727"/><rect x="208" y="17" width="128" height="1" fill="#565656"/></svg>
<div style="left:305px;top:546px;width:7px;height:14px;background:linear-gradient(90deg,#b8b8b8,#f4f4f4 25%,#fff 50%,#f0f0f0 75%,#a8a8a8);border-radius:2px;box-shadow:0 0 1px #111"><div style="left:3px;top:2px;width:1px;height:10px;background:#6a6a6a"></div></div>
<span class="t" style="left:207px;top:563px;font-size:8px;line-height:8px;color:#b4b4b4;letter-spacing:-0.4px">0.0</span>
<div class="sb" style="left:353px;top:542px;width:13px;height:9px;"></div>
<span class="t" style="left:369px;top:542px;font-size:8.5px;line-height:10px">M</span>
<div class="sb" style="left:353px;top:556px;width:13px;height:9px;"></div>
<span class="t" style="left:369px;top:556px;font-size:8.5px;line-height:10px">S</span>
<svg style="left:383px;top:537px" width="32" height="32" viewBox="-16 -16 32 32"><rect x="-8" y="10" width="1.0" height="1.0" fill="#d0d0d0"/><rect x="-13" y="5" width="1.0" height="1.0" fill="#d0d0d0"/><rect x="-14" y="-2" width="1.0" height="1.0" fill="#d0d0d0"/><rect x="-12" y="-8" width="1.0" height="1.0" fill="#d0d0d0"/><rect x="-7" y="-13" width="1.0" height="1.0" fill="#d0d0d0"/><rect x="-1" y="-14" width="1.0" height="1.0" fill="#d0d0d0"/><rect x="5" y="-13" width="1.0" height="1.0" fill="#d0d0d0"/><rect x="10" y="-8" width="1.0" height="1.0" fill="#d0d0d0"/><rect x="12" y="-2" width="1.0" height="1.0" fill="#d0d0d0"/><rect x="11" y="5" width="1.0" height="1.0" fill="#d0d0d0"/><rect x="6" y="10" width="1.0" height="1.0" fill="#d0d0d0"/><circle cx="-0.2" cy="0.6" r="9.9" fill="#1c1c1c"/></svg>
<div style="left:389.4px;top:543.9px;width:18.2px;height:18.2px;border-radius:50%;background:conic-gradient(from 0deg,#5a5a5a 0deg,#565656 40deg,#444 85deg,#343434 115deg,#484848 150deg,#5c5c5c 200deg,#4c4c4c 250deg,#363636 298deg,#4c4c4c 335deg,#5a5a5a 360deg);box-shadow:inset 0 0 2px 0 rgba(0,0,0,.5),0 0 0 0.8px #1e1e1e"></div>
<svg style="left:394px;top:543px" width="9" height="9" viewBox="0 0 9 9"><circle cx="4.50" cy="4.50" r="2.4" fill="#00d8e8"/></svg>
<span class="t" style="left:384px;top:539px;font-size:6.5px;line-height:8px">P</span>
<span class="t" style="left:390px;top:562.5px;width:20px;text-align:center;font-size:7px;line-height:8px;color:#c8c8c8">50</span>
<svg style="left:419px;top:537px" width="32" height="32" viewBox="-16 -16 32 32"><rect x="-8" y="10" width="1.0" height="1.0" fill="#d0d0d0"/><rect x="-12" y="5" width="1.0" height="1.0" fill="#d0d0d0"/><rect x="-14" y="-2" width="1.0" height="1.0" fill="#d0d0d0"/><rect x="-12" y="-8" width="1.0" height="1.0" fill="#d0d0d0"/><rect x="-7" y="-13" width="1.0" height="1.0" fill="#d0d0d0"/><rect x="0" y="-14" width="1.0" height="1.0" fill="#d0d0d0"/><rect x="6" y="-13" width="1.0" height="1.0" fill="#d0d0d0"/><rect x="11" y="-8" width="1.0" height="1.0" fill="#d0d0d0"/><rect x="13" y="-2" width="1.0" height="1.0" fill="#d0d0d0"/><rect x="11" y="5" width="1.0" height="1.0" fill="#d0d0d0"/><rect x="7" y="10" width="1.0" height="1.0" fill="#d0d0d0"/><circle cx="0.3" cy="0.6" r="9.9" fill="#1c1c1c"/></svg>
<div style="left:425.9px;top:543.9px;width:18.2px;height:18.2px;border-radius:50%;background:conic-gradient(from 0deg,#5a5a5a 0deg,#565656 40deg,#444 85deg,#343434 115deg,#484848 150deg,#5c5c5c 200deg,#4c4c4c 250deg,#363636 298deg,#4c4c4c 335deg,#5a5a5a 360deg);box-shadow:inset 0 0 2px 0 rgba(0,0,0,.5),0 0 0 0.8px #1e1e1e"></div>
<svg style="left:427px;top:553px" width="9" height="9" viewBox="0 0 9 9"><circle cx="4.46" cy="4.21" r="2.4" fill="#fff"/></svg>
<span class="t" style="left:419.5px;top:539px;font-size:8px;line-height:8px">1</span>
<span class="t" style="left:425px;top:562px;width:20px;text-align:center;font-size:8px;line-height:8px;color:#c8c8c8">-</span>
<div class="dk" style="left:463px;top:540px;width:33px;height:13px;font-size:9.5px;line-height:11px;text-align:center;color:#ffffff;letter-spacing:-0.2px">De-es</div>
<div class="sb" style="left:470px;top:556px;width:19px;height:10.5px;"></div>
<svg style="left:490px;top:560px" width="6" height="3" viewBox="0 0 6 3"><path d="M0 0H6L3.0 3Z" fill="#c8c8c8"/></svg>
<div class="dk" style="left:498px;top:540px;width:33px;height:13px;font-size:9.5px;line-height:11px;text-align:center;color:#ffffff;letter-spacing:-0.2px">EQ</div>
<div class="sb" style="left:505px;top:556px;width:19px;height:10.5px;"></div>
<svg style="left:525px;top:560px" width="6" height="3" viewBox="0 0 6 3"><path d="M0 0H6L3.0 3Z" fill="#c8c8c8"/></svg>
<div class="dk" style="left:533px;top:540px;width:33px;height:13px;font-size:9.5px;line-height:11px;text-align:center;color:#ffffff;letter-spacing:-0.2px"></div>
<div class="sb" style="left:540px;top:556px;width:19px;height:10.5px;"></div>
<svg style="left:560px;top:560px" width="6" height="3" viewBox="0 0 6 3"><path d="M0 0H6L3.0 3Z" fill="#c8c8c8"/></svg>
<div style="left:582px;top:545px;width:136px;height:12px;background:#0a2a22;border:1px solid #13352b;box-shadow:0 0 0 1px #4a4a4a"></div>
<div style="left:583px;top:547px;width:134px;height:3px;overflow:hidden"><div style="left:0.0px;top:0;width:84.0px;height:3px;background:#06303a"></div><div style="left:84.0px;top:0;width:25.5px;height:3px;background:#5a5200"></div><div style="left:109.5px;top:0;width:24.5px;height:3px;background:#5c0606"></div><div style="left:0.0px;top:0;width:38.5px;height:3px;background:#00e0ff"></div><div style="left:59.8px;top:0;width:1.4px;height:3px;background:#00e0ff"></div></div>
<div style="left:583px;top:552px;width:134px;height:3px;overflow:hidden"><div style="left:0.0px;top:0;width:84.0px;height:3px;background:#06303a"></div><div style="left:84.0px;top:0;width:25.5px;height:3px;background:#5a5200"></div><div style="left:109.5px;top:0;width:24.5px;height:3px;background:#5c0606"></div><div style="left:0.0px;top:0;width:38.5px;height:3px;background:#00e0ff"></div><div style="left:59.8px;top:0;width:1.4px;height:3px;background:#00e0ff"></div></div>
<div style="left:582px;top:558px;width:1px;height:1px;background:#c0c0c0"></div>
<div style="left:612px;top:558px;width:1px;height:1px;background:#c0c0c0"></div>
<div style="left:642px;top:558px;width:1px;height:1px;background:#c0c0c0"></div>
<div style="left:667px;top:558px;width:1px;height:1px;background:#c0c0c0"></div>
<div style="left:692px;top:558px;width:1px;height:1px;background:#c0c0c0"></div>
<div style="left:717px;top:558px;width:1px;height:1px;background:#c0c0c0"></div>
<span class="t" style="left:582px;top:561px;font-size:8px;line-height:8px;color:#b8b8b8;letter-spacing:-0.2px">-50</span>
<span class="t" style="left:602px;top:561px;width:20px;text-align:center;font-size:8px;line-height:8px;color:#b8b8b8;letter-spacing:-0.2px">-20</span>
<span class="t" style="left:633px;top:561px;width:20px;text-align:center;font-size:8px;line-height:8px;color:#b8b8b8;letter-spacing:-0.2px">-10</span>
<span class="t" style="left:657px;top:561px;width:20px;text-align:center;font-size:8px;line-height:8px;color:#b8b8b8;letter-spacing:-0.2px">-5</span>
<span class="t" style="left:682px;top:561px;width:20px;text-align:center;font-size:8px;line-height:8px;color:#b8b8b8;letter-spacing:-0.2px">0</span>
<span class="t" style="left:699px;top:561px;width:20px;text-align:right;font-size:8px;line-height:8px;color:#b8b8b8;letter-spacing:-0.2px">+5</span>
<svg style="left:807px;top:541px" width="703" height="26" viewBox="807 0 703 26"><rect x="807.5" y="0.5" width="702" height="25" fill="#2f2f2f" stroke="#5a5a5a"/><rect x="861.0" y="1" width="1" height="24" fill="#6a6a6a"/><rect x="1034.1" y="1" width="1" height="24" fill="#6a6a6a"/><rect x="1206.2" y="1" width="1" height="24" fill="#6a6a6a"/><rect x="1378.1" y="1" width="1" height="24" fill="#6a6a6a"/><rect x="809" y="12.6" width="700" height="0.9" fill="#5e5e34"/><path d="M1210 10.5h1v5.1h-1zM1211 10.2h1v4.9h-1zM1212 10.9h1v4.6h-1zM1213 10.6h1v5.5h-1zM1214 10.0h1v5.9h-1zM1215 10.1h1v6.0h-1zM1216 10.5h1v5.3h-1zM1217 10.4h1v6.1h-1zM1218 10.5h1v6.0h-1zM1219 10.4h1v6.0h-1zM1220 10.0h1v6.1h-1zM1221 9.2h1v6.4h-1zM1222 10.3h1v6.7h-1zM1223 9.5h1v6.3h-1zM1224 8.7h1v8.5h-1zM1225 10.0h1v6.5h-1zM1226 10.0h1v6.3h-1zM1227 9.2h1v6.9h-1zM1228 9.1h1v6.8h-1zM1229 9.9h1v7.2h-1zM1230 9.6h1v6.9h-1zM1231 9.2h1v7.3h-1zM1232 9.6h1v6.3h-1zM1233 9.0h1v8.3h-1zM1234 8.6h1v8.2h-1zM1235 9.6h1v6.8h-1zM1236 9.1h1v7.8h-1zM1237 10.0h1v6.2h-1zM1238 9.6h1v7.0h-1zM1239 8.9h1v7.7h-1zM1240 10.1h1v7.0h-1zM1241 9.9h1v6.3h-1zM1242 10.6h1v5.1h-1zM1243 10.8h1v4.8h-1zM1244 11.4h1v3.5h-1zM1245 11.7h1v2.9h-1zM1246 11.8h1v2.5h-1zM1247 11.6h1v3.0h-1zM1248 11.8h1v2.6h-1zM1249 11.7h1v2.6h-1zM1250 11.5h1v3.2h-1zM1251 11.5h1v3.2h-1zM1252 11.8h1v3.0h-1zM1253 11.6h1v2.6h-1zM1254 11.4h1v3.3h-1zM1255 11.9h1v2.4h-1zM1256 11.4h1v2.9h-1zM1257 11.7h1v2.4h-1zM1258 11.9h1v2.6h-1zM1259 11.3h1v3.4h-1zM1260 11.6h1v2.5h-1zM1261 11.7h1v2.9h-1zM1262 11.4h1v3.1h-1zM1263 11.8h1v2.6h-1zM1264 11.6h1v2.8h-1zM1265 11.8h1v2.9h-1zM1266 11.4h1v2.8h-1zM1267 11.8h1v2.8h-1zM1268 11.8h1v2.9h-1zM1269 11.6h1v2.8h-1zM1270 11.5h1v2.7h-1zM1271 11.8h1v2.4h-1zM1272 11.6h1v2.9h-1zM1273 11.9h1v2.7h-1zM1274 11.7h1v2.5h-1zM1275 11.7h1v2.9h-1zM1276 11.6h1v2.7h-1zM1277 11.4h1v3.1h-1zM1278 11.5h1v2.7h-1zM1279 11.6h1v2.9h-1zM1280 12.4h1v1.2h-1zM1281 12.3h1v1.3h-1zM1282 11.9h1v2.1h-1zM1283 11.4h1v3.8h-1zM1284 9.8h1v6.3h-1zM1285 8.9h1v8.2h-1zM1286 8.7h1v9.1h-1zM1287 8.3h1v8.9h-1zM1288 8.3h1v9.3h-1zM1289 7.0h1v11.4h-1zM1290 7.9h1v10.4h-1zM1291 8.8h1v9.2h-1zM1292 7.6h1v10.2h-1zM1293 8.6h1v9.2h-1zM1294 8.4h1v10.0h-1zM1295 9.3h1v7.3h-1zM1296 9.5h1v7.6h-1zM1297 9.4h1v7.0h-1zM1298 9.9h1v5.5h-1zM1299 10.9h1v4.7h-1zM1300 10.5h1v4.8h-1zM1301 10.2h1v5.2h-1zM1302 10.7h1v4.7h-1zM1303 9.9h1v5.2h-1zM1304 10.5h1v4.9h-1zM1305 10.7h1v4.9h-1zM1306 10.7h1v5.5h-1zM1307 10.3h1v5.5h-1zM1308 10.7h1v4.9h-1zM1309 10.2h1v5.9h-1zM1310 10.6h1v5.0h-1zM1311 9.9h1v6.2h-1zM1312 10.6h1v5.1h-1zM1313 10.0h1v5.6h-1zM1314 10.1h1v5.8h-1zM1315 9.7h1v6.0h-1zM1316 10.1h1v5.5h-1zM1317 10.0h1v5.5h-1zM1318 10.3h1v5.3h-1zM1319 10.5h1v4.8h-1zM1320 10.6h1v5.2h-1zM1321 10.6h1v4.6h-1zM1322 9.9h1v5.6h-1zM1323 9.7h1v6.2h-1zM1324 10.4h1v5.8h-1zM1325 9.8h1v5.8h-1zM1326 10.7h1v5.3h-1zM1327 9.8h1v6.1h-1zM1328 9.9h1v5.8h-1zM1329 10.1h1v5.4h-1zM1330 10.3h1v5.3h-1zM1331 10.3h1v5.3h-1zM1332 10.3h1v4.8h-1zM1333 11.3h1v3.5h-1zM1334 10.6h1v4.4h-1zM1335 11.4h1v3.9h-1zM1336 10.7h1v4.6h-1zM1337 11.1h1v4.1h-1zM1338 11.2h1v3.5h-1zM1339 10.7h1v4.6h-1zM1340 11.3h1v4.1h-1zM1341 11.4h1v3.4h-1zM1342 11.4h1v3.3h-1zM1343 11.3h1v3.9h-1zM1344 11.2h1v3.5h-1zM1345 11.3h1v3.6h-1zM1346 10.7h1v4.4h-1zM1347 11.3h1v3.8h-1zM1348 11.0h1v4.0h-1zM1349 11.0h1v4.2h-1zM1350 10.7h1v4.3h-1zM1351 10.9h1v4.1h-1zM1352 10.9h1v4.0h-1zM1353 11.1h1v3.9h-1zM1354 10.8h1v4.0h-1zM1355 10.6h1v4.4h-1zM1356 10.7h1v4.5h-1zM1357 10.6h1v4.6h-1zM1358 11.1h1v3.9h-1zM1359 10.9h1v4.3h-1zM1360 10.7h1v4.0h-1zM1361 11.4h1v3.3h-1zM1362 11.4h1v3.2h-1zM1363 11.4h1v3.3h-1zM1364 11.3h1v3.8h-1zM1365 10.9h1v4.5h-1zM1366 10.6h1v4.6h-1zM1367 10.6h1v4.0h-1zM1368 11.2h1v4.1h-1zM1369 11.0h1v3.7h-1zM1370 10.8h1v4.2h-1zM1371 11.0h1v3.9h-1zM1372 11.2h1v3.4h-1zM1373 10.9h1v4.5h-1zM1374 10.6h1v4.7h-1zM1375 10.6h1v4.3h-1zM1376 11.2h1v4.2h-1z" fill="#f2f240"/><rect x="1362.1" y="0" width="1" height="26" fill="#a0a0a0"/></svg>
<div class="btn" style="left:1518px;top:542px;width:24px;height:24px;font-size:8.5px;line-height:22px;letter-spacing:-0.5px;border:1px solid #787878">EDIT</div>
<div style="left:1549px;top:543px;width:6px;height:3px;background:#c0c0c0;border-bottom:1px solid #777"></div>
<div style="left:1px;top:572px;width:1558px;height:32px;background:linear-gradient(#444 0,#424242 6px,#3f3f3f 60%,#3d3d3d 100%)"></div>
<div class="sep" style="left:1px;top:570px;width:1558px;height:2px;"></div>
<div class="dk" style="left:13px;top:575px;width:116px;height:26px;"></div>
<span class="t b" style="left:17px;top:576px;font-size:12px;line-height:14px;color:#62d2f6;letter-spacing:-0.1px">Organ</span>
<span class="t" style="left:17px;top:589px;font-size:10px;line-height:11px;color:#62d2f6;opacity:0.75;letter-spacing:-0.2px">midi</span>
<svg style="left:122px;top:596px" width="5" height="3" viewBox="0 0 5 3"><path d="M0 0H5L2.5 3Z" fill="#4d9fba"/></svg>
<div style="left:146px;top:581px;width:20px;height:11px;background:linear-gradient(#18d818,#08b808);border:1px solid #161616;border-radius:2.5px;box-shadow:0 0 1px #222"></div>
<span class="t" style="left:146px;top:593px;width:20px;text-align:center;font-size:8.5px;line-height:10px;letter-spacing:-0.2px">Play</span>
<div class="sb" style="left:170px;top:581px;width:20px;height:11px;color:#fff;font-size:9px;line-height:9px;text-align:center"></div>
<span class="t" style="left:170px;top:593px;width:20px;text-align:center;font-size:8.5px;line-height:10px;letter-spacing:-0.2px">Rec</span>
<svg style="left:200px;top:570px" width="145" height="34" viewBox="200 0 145 34"><rect x="207.8" y="8" width="1" height="2" fill="#c8c8c8"/><rect x="207.8" y="24" width="1" height="2" fill="#c8c8c8"/><rect x="222.8" y="8" width="1" height="2" fill="#c8c8c8"/><rect x="222.8" y="24" width="1" height="2" fill="#c8c8c8"/><rect x="234.0" y="8" width="1" height="2" fill="#c8c8c8"/><rect x="234.0" y="24" width="1" height="2" fill="#c8c8c8"/><rect x="247.0" y="8" width="1" height="2" fill="#c8c8c8"/><rect x="247.0" y="24" width="1" height="2" fill="#c8c8c8"/><rect x="262.0" y="8" width="1" height="2" fill="#c8c8c8"/><rect x="262.0" y="24" width="1" height="2" fill="#c8c8c8"/><rect x="274.0" y="8" width="1" height="2" fill="#c8c8c8"/><rect x="274.0" y="24" width="1" height="2" fill="#c8c8c8"/><rect x="281.0" y="8" width="1" height="2" fill="#c8c8c8"/><rect x="281.0" y="24" width="1" height="2" fill="#c8c8c8"/><rect x="289.0" y="8" width="1" height="2" fill="#c8c8c8"/><rect x="289.0" y="24" width="1" height="2" fill="#c8c8c8"/><rect x="298.2" y="8" width="1" height="2" fill="#c8c8c8"/><rect x="298.2" y="24" width="1" height="2" fill="#c8c8c8"/><rect x="319.0" y="8" width="1" height="2" fill="#c8c8c8"/><rect x="319.0" y="24" width="1" height="2" fill="#c8c8c8"/><rect x="331.2" y="8" width="1" height="2" fill="#c8c8c8"/><rect x="331.2" y="24" width="1" height="2" fill="#c8c8c8"/><rect x="307.8" y="7" width="1" height="4" fill="#d8d8d8"/><rect x="307.8" y="22" width="1" height="4" fill="#d8d8d8"/><rect x="208" y="15" width="128" height="1" fill="#383838"/><rect x="208" y="16" width="128" height="1" fill="#272727"/><rect x="208" y="17" width="128" height="1" fill="#565656"/></svg>
<div style="left:305px;top:580px;width:7px;height:14px;background:linear-gradient(90deg,#b8b8b8,#f4f4f4 25%,#fff 50%,#f0f0f0 75%,#a8a8a8);border-radius:2px;box-shadow:0 0 1px #111"><div style="left:3px;top:2px;width:1px;height:10px;background:#6a6a6a"></div></div>
<span class="t" style="left:207px;top:597px;font-size:8px;line-height:8px;color:#b4b4b4;letter-spacing:-0.4px">0.0</span>
<div class="sb" style="left:353px;top:576px;width:13px;height:9px;"></div>
<span class="t" style="left:369px;top:576px;font-size:8.5px;line-height:10px">M</span>
<div class="sb" style="left:353px;top:590px;width:13px;height:9px;"></div>
<span class="t" style="left:369px;top:590px;font-size:8.5px;line-height:10px">S</span>
<svg style="left:383px;top:571px" width="32" height="32" viewBox="-16 -16 32 32"><rect x="-8" y="10" width="1.0" height="1.0" fill="#d0d0d0"/><rect x="-13" y="5" width="1.0" height="1.0" fill="#d0d0d0"/><rect x="-14" y="-2" width="1.0" height="1.0" fill="#d0d0d0"/><rect x="-12" y="-8" width="1.0" height="1.0" fill="#d0d0d0"/><rect x="-7" y="-13" width="1.0" height="1.0" fill="#d0d0d0"/><rect x="-1" y="-14" width="1.0" height="1.0" fill="#d0d0d0"/><rect x="5" y="-13" width="1.0" height="1.0" fill="#d0d0d0"/><rect x="10" y="-8" width="1.0" height="1.0" fill="#d0d0d0"/><rect x="12" y="-2" width="1.0" height="1.0" fill="#d0d0d0"/><rect x="11" y="5" width="1.0" height="1.0" fill="#d0d0d0"/><rect x="6" y="10" width="1.0" height="1.0" fill="#d0d0d0"/><circle cx="-0.2" cy="0.6" r="9.9" fill="#1c1c1c"/></svg>
<div style="left:389.4px;top:577.9px;width:18.2px;height:18.2px;border-radius:50%;background:conic-gradient(from 0deg,#5a5a5a 0deg,#565656 40deg,#444 85deg,#343434 115deg,#484848 150deg,#5c5c5c 200deg,#4c4c4c 250deg,#363636 298deg,#4c4c4c 335deg,#5a5a5a 360deg);box-shadow:inset 0 0 2px 0 rgba(0,0,0,.5),0 0 0 0.8px #1e1e1e"></div>
<svg style="left:394px;top:577px" width="9" height="9" viewBox="0 0 9 9"><circle cx="4.50" cy="4.50" r="2.4" fill="#00d8e8"/></svg>
<span class="t" style="left:384px;top:573px;font-size:6.5px;line-height:8px">P</span>
<span class="t" style="left:390px;top:596.5px;width:20px;text-align:center;font-size:7px;line-height:8px;color:#c8c8c8">50</span>
<svg style="left:419px;top:571px" width="32" height="32" viewBox="-16 -16 32 32"><rect x="-8" y="10" width="1.0" height="1.0" fill="#d0d0d0"/><rect x="-12" y="5" width="1.0" height="1.0" fill="#d0d0d0"/><rect x="-14" y="-2" width="1.0" height="1.0" fill="#d0d0d0"/><rect x="-12" y="-8" width="1.0" height="1.0" fill="#d0d0d0"/><rect x="-7" y="-13" width="1.0" height="1.0" fill="#d0d0d0"/><rect x="0" y="-14" width="1.0" height="1.0" fill="#d0d0d0"/><rect x="6" y="-13" width="1.0" height="1.0" fill="#d0d0d0"/><rect x="11" y="-8" width="1.0" height="1.0" fill="#d0d0d0"/><rect x="13" y="-2" width="1.0" height="1.0" fill="#d0d0d0"/><rect x="11" y="5" width="1.0" height="1.0" fill="#d0d0d0"/><rect x="7" y="10" width="1.0" height="1.0" fill="#d0d0d0"/><circle cx="0.3" cy="0.6" r="9.9" fill="#1c1c1c"/></svg>
<div style="left:425.9px;top:577.9px;width:18.2px;height:18.2px;border-radius:50%;background:conic-gradient(from 0deg,#5a5a5a 0deg,#565656 40deg,#444 85deg,#343434 115deg,#484848 150deg,#5c5c5c 200deg,#4c4c4c 250deg,#363636 298deg,#4c4c4c 335deg,#5a5a5a 360deg);box-shadow:inset 0 0 2px 0 rgba(0,0,0,.5),0 0 0 0.8px #1e1e1e"></div>
<svg style="left:427px;top:587px" width="9" height="9" viewBox="0 0 9 9"><circle cx="4.46" cy="4.21" r="2.4" fill="#fff"/></svg>
<span class="t" style="left:419.5px;top:573px;font-size:8px;line-height:8px">1</span>
<span class="t" style="left:425px;top:596px;width:20px;text-align:center;font-size:8px;line-height:8px;color:#c8c8c8">-</span>
<div class="dk" style="left:463px;top:574px;width:33px;height:13px;font-size:9.5px;line-height:11px;text-align:center;color:#ffffff;letter-spacing:-0.2px">Arp</div>
<div class="sb" style="left:470px;top:590px;width:19px;height:10.5px;"></div>
<svg style="left:490px;top:594px" width="6" height="3" viewBox="0 0 6 3"><path d="M0 0H6L3.0 3Z" fill="#c8c8c8"/></svg>
<div class="dk" style="left:498px;top:574px;width:33px;height:13px;font-size:9.5px;line-height:11px;text-align:center;color:#ffff28;letter-spacing:-0.2px">Organ</div>
<div class="sb" style="left:505px;top:590px;width:19px;height:10.5px;"></div>
<svg style="left:525px;top:594px" width="6" height="3" viewBox="0 0 6 3"><path d="M0 0H6L3.0 3Z" fill="#c8c8c8"/></svg>
<div class="dk" style="left:533px;top:574px;width:33px;height:13px;font-size:9.5px;line-height:11px;text-align:center;color:#ffffff;letter-spacing:-0.2px"></div>
<div class="sb" style="left:540px;top:590px;width:19px;height:10.5px;"></div>
<svg style="left:560px;top:594px" width="6" height="3" viewBox="0 0 6 3"><path d="M0 0H6L3.0 3Z" fill="#c8c8c8"/></svg>
<div style="left:582px;top:579px;width:136px;height:12px;background:#0a2a22;border:1px solid #13352b;box-shadow:0 0 0 1px #4a4a4a"></div>
<div style="left:583px;top:581px;width:134px;height:3px;overflow:hidden"><div style="left:0.0px;top:0;width:84.0px;height:3px;background:#06303a"></div><div style="left:84.0px;top:0;width:25.5px;height:3px;background:#5a5200"></div><div style="left:109.5px;top:0;width:24.5px;height:3px;background:#5c0606"></div><div style="left:0.0px;top:0;width:37.0px;height:3px;background:#00e0ff"></div><div style="left:40.3px;top:0;width:1.4px;height:3px;background:#00e0ff"></div></div>
<div style="left:583px;top:586px;width:134px;height:3px;overflow:hidden"><div style="left:0.0px;top:0;width:84.0px;height:3px;background:#06303a"></div><div style="left:84.0px;top:0;width:25.5px;height:3px;background:#5a5200"></div><div style="left:109.5px;top:0;width:24.5px;height:3px;background:#5c0606"></div><div style="left:0.0px;top:0;width:37.0px;height:3px;background:#00e0ff"></div><div style="left:40.3px;top:0;width:1.4px;height:3px;background:#00e0ff"></div></div>
<div style="left:582px;top:592px;width:1px;height:1px;background:#c0c0c0"></div>
<div style="left:612px;top:592px;width:1px;height:1px;background:#c0c0c0"></div>
<div style="left:642px;top:592px;width:1px;height:1px;background:#c0c0c0"></div>
<div style="left:667px;top:592px;width:1px;height:1px;background:#c0c0c0"></div>
<div style="left:692px;top:592px;width:1px;height:1px;background:#c0c0c0"></div>
<div style="left:717px;top:592px;width:1px;height:1px;background:#c0c0c0"></div>
<span class="t" style="left:582px;top:595px;font-size:8px;line-height:8px;color:#b8b8b8;letter-spacing:-0.2px">-50</span>
<span class="t" style="left:602px;top:595px;width:20px;text-align:center;font-size:8px;line-height:8px;color:#b8b8b8;letter-spacing:-0.2px">-20</span>
<span class="t" style="left:633px;top:595px;width:20px;text-align:center;font-size:8px;line-height:8px;color:#b8b8b8;letter-spacing:-0.2px">-10</span>
<span class="t" style="left:657px;top:595px;width:20px;text-align:center;font-size:8px;line-height:8px;color:#b8b8b8;letter-spacing:-0.2px">-5</span>
<span class="t" style="left:682px;top:595px;width:20px;text-align:center;font-size:8px;line-height:8px;color:#b8b8b8;letter-spacing:-0.2px">0</span>
<span class="t" style="left:699px;top:595px;width:20px;text-align:right;font-size:8px;line-height:8px;color:#b8b8b8;letter-spacing:-0.2px">+5</span>
<svg style="left:807px;top:575px" width="703" height="26" viewBox="807 0 703 26"><rect x="807.5" y="0.5" width="702" height="25" fill="#2f2f2f" stroke="#5a5a5a"/><rect x="861.0" y="1" width="1" height="24" fill="#6a6a6a"/><rect x="1034.1" y="1" width="1" height="24" fill="#6a6a6a"/><rect x="1206.2" y="1" width="1" height="24" fill="#6a6a6a"/><rect x="1378.1" y="1" width="1" height="24" fill="#6a6a6a"/><rect x="1034.6" y="8" width="172.1" height="2" fill="#5fd8fa"/><rect x="1034.6" y="15" width="172.1" height="2" fill="#5fd8fa"/><rect x="1034.6" y="22" width="172.1" height="2" fill="#5fd8fa"/><rect x="1206.7" y="4" width="171.9" height="2" fill="#5fd8fa"/><rect x="1206.7" y="11" width="171.9" height="2" fill="#5fd8fa"/><rect x="1206.7" y="18" width="171.9" height="2" fill="#5fd8fa"/><rect x="1362.1" y="0" width="1" height="26" fill="#a0a0a0"/></svg>
<div class="btn" style="left:1518px;top:576px;width:24px;height:24px;font-size:8.5px;line-height:22px;letter-spacing:-0.5px;border:1px solid #787878">EDIT</div>
<div style="left:1549px;top:577px;width:6px;height:3px;background:#c0c0c0;border-bottom:1px solid #777"></div>
<div style="left:1px;top:606px;width:1558px;height:32px;background:linear-gradient(#444 0,#424242 6px,#3f3f3f 60%,#3d3d3d 100%)"></div>
<div class="sep" style="left:1px;top:604px;width:1558px;height:2px;"></div>
<div class="dk" style="left:13px;top:609px;width:116px;height:26px;"></div>
<span class="t b" style="left:17px;top:610px;font-size:12px;line-height:14px;color:#62d2f6;letter-spacing:-0.1px">Solo Guitar</span>
<span class="t" style="left:17px;top:623px;font-size:10px;line-height:11px;color:#62d2f6;opacity:0.75;letter-spacing:-0.2px">mono audio (.wav)</span>
<svg style="left:122px;top:630px" width="5" height="3" viewBox="0 0 5 3"><path d="M0 0H5L2.5 3Z" fill="#4d9fba"/></svg>
<div style="left:146px;top:615px;width:20px;height:11px;background:linear-gradient(#18d818,#08b808);border:1px solid #161616;border-radius:2.5px;box-shadow:0 0 1px #222"></div>
<span class="t" style="left:146px;top:627px;width:20px;text-align:center;font-size:8.5px;line-height:10px;letter-spacing:-0.2px">Play</span>
<div class="sb" style="left:170px;top:615px;width:20px;height:11px;color:#fff;font-size:9px;line-height:9px;text-align:center">1</div>
<span class="t" style="left:170px;top:627px;width:20px;text-align:center;font-size:8.5px;line-height:10px;letter-spacing:-0.2px">Rec</span>
<svg style="left:191px;top:619px" width="5" height="3" viewBox="0 0 5 3"><path d="M0 0H5L2.5 3Z" fill="#c8c8c8"/></svg>
<svg style="left:200px;top:604px" width="145" height="34" viewBox="200 0 145 34"><rect x="207.8" y="8" width="1" height="2" fill="#c8c8c8"/><rect x="207.8" y="24" width="1" height="2" fill="#c8c8c8"/><rect x="222.8" y="8" width="1" height="2" fill="#c8c8c8"/><rect x="222.8" y="24" width="1" height="2" fill="#c8c8c8"/><rect x="234.0" y="8" width="1" height="2" fill="#c8c8c8"/><rect x="234.0" y="24" width="1" height="2" fill="#c8c8c8"/><rect x="247.0" y="8" width="1" height="2" fill="#c8c8c8"/><rect x="247.0" y="24" width="1" height="2" fill="#c8c8c8"/><rect x="262.0" y="8" width="1" height="2" fill="#c8c8c8"/><rect x="262.0" y="24" width="1" height="2" fill="#c8c8c8"/><rect x="274.0" y="8" width="1" height="2" fill="#c8c8c8"/><rect x="274.0" y="24" width="1" height="2" fill="#c8c8c8"/><rect x="281.0" y="8" width="1" height="2" fill="#c8c8c8"/><rect x="281.0" y="24" width="1" height="2" fill="#c8c8c8"/><rect x="289.0" y="8" width="1" height="2" fill="#c8c8c8"/><rect x="289.0" y="24" width="1" height="2" fill="#c8c8c8"/><rect x="298.2" y="8" width="1" height="2" fill="#c8c8c8"/><rect x="298.2" y="24" width="1" height="2" fill="#c8c8c8"/><rect x="319.0" y="8" width="1" height="2" fill="#c8c8c8"/><rect x="319.0" y="24" width="1" height="2" fill="#c8c8c8"/><rect x="331.2" y="8" width="1" height="2" fill="#c8c8c8"/><rect x="331.2" y="24" width="1" height="2" fill="#c8c8c8"/><rect x="307.8" y="7" width="1" height="4" fill="#d8d8d8"/><rect x="307.8" y="22" width="1" height="4" fill="#d8d8d8"/><rect x="208" y="15" width="128" height="1" fill="#383838"/><rect x="208" y="16" width="128" height="1" fill="#272727"/><rect x="208" y="17" width="128" height="1" fill="#565656"/></svg>
<div style="left:305px;top:614px;width:7px;height:14px;background:linear-gradient(90deg,#b8b8b8,#f4f4f4 25%,#fff 50%,#f0f0f0 75%,#a8a8a8);border-radius:2px;box-shadow:0 0 1px #111"><div style="left:3px;top:2px;width:1px;height:10px;background:#6a6a6a"></div></div>
<span class="t" style="left:207px;top:631px;font-size:8px;line-height:8px;color:#b4b4b4;letter-spacing:-0.4px">0.0</span>
<div class="sb" style="left:353px;top:610px;width:13px;height:9px;"></div>
<span class="t" style="left:369px;top:610px;font-size:8.5px;line-height:10px">M</span>
<div class="sb" style="left:353px;top:624px;width:13px;height:9px;"></div>
<span class="t" style="left:369px;top:624px;font-size:8.5px;line-height:10px">S</span>
<svg style="left:383px;top:605px" width="32" height="32" viewBox="-16 -16 32 32"><rect x="-8" y="10" width="1.0" height="1.0" fill="#d0d0d0"/><rect x="-13" y="5" width="1.0" height="1.0" fill="#d0d0d0"/><rect x="-14" y="-2" width="1.0" height="1.0" fill="#d0d0d0"/><rect x="-12" y="-8" width="1.0" height="1.0" fill="#d0d0d0"/><rect x="-7" y="-13" width="1.0" height="1.0" fill="#d0d0d0"/><rect x="-1" y="-14" width="1.0" height="1.0" fill="#d0d0d0"/><rect x="5" y="-13" width="1.0" height="1.0" fill="#d0d0d0"/><rect x="10" y="-8" width="1.0" height="1.0" fill="#d0d0d0"/><rect x="12" y="-2" width="1.0" height="1.0" fill="#d0d0d0"/><rect x="11" y="5" width="1.0" height="1.0" fill="#d0d0d0"/><rect x="6" y="10" width="1.0" height="1.0" fill="#d0d0d0"/><circle cx="-0.2" cy="0.6" r="9.9" fill="#1c1c1c"/></svg>
<div style="left:389.4px;top:611.9px;width:18.2px;height:18.2px;border-radius:50%;background:conic-gradient(from 0deg,#5a5a5a 0deg,#565656 40deg,#444 85deg,#343434 115deg,#484848 150deg,#5c5c5c 200deg,#4c4c4c 250deg,#363636 298deg,#4c4c4c 335deg,#5a5a5a 360deg);box-shadow:inset 0 0 2px 0 rgba(0,0,0,.5),0 0 0 0.8px #1e1e1e"></div>
<svg style="left:394px;top:611px" width="9" height="9" viewBox="0 0 9 9"><circle cx="4.50" cy="4.50" r="2.4" fill="#00d8e8"/></svg>
<span class="t" style="left:384px;top:607px;font-size:6.5px;line-height:8px">P</span>
<span class="t" style="left:390px;top:630.5px;width:20px;text-align:center;font-size:7px;line-height:8px;color:#c8c8c8">50</span>
<svg style="left:419px;top:605px" width="32" height="32" viewBox="-16 -16 32 32"><rect x="-8" y="10" width="1.0" height="1.0" fill="#d0d0d0"/><rect x="-12" y="5" width="1.0" height="1.0" fill="#d0d0d0"/><rect x="-14" y="-2" width="1.0" height="1.0" fill="#d0d0d0"/><rect x="-12" y="-8" width="1.0" height="1.0" fill="#d0d0d0"/><rect x="-7" y="-13" width="1.0" height="1.0" fill="#d0d0d0"/><rect x="0" y="-14" width="1.0" height="1.0" fill="#d0d0d0"/><rect x="6" y="-13" width="1.0" height="1.0" fill="#d0d0d0"/><rect x="11" y="-8" width="1.0" height="1.0" fill="#d0d0d0"/><rect x="13" y="-2" width="1.0" height="1.0" fill="#d0d0d0"/><rect x="11" y="5" width="1.0" height="1.0" fill="#d0d0d0"/><rect x="7" y="10" width="1.0" height="1.0" fill="#d0d0d0"/><circle cx="0.3" cy="0.6" r="9.9" fill="#1c1c1c"/></svg>
<div style="left:425.9px;top:611.9px;width:18.2px;height:18.2px;border-radius:50%;background:conic-gradient(from 0deg,#5a5a5a 0deg,#565656 40deg,#444 85deg,#343434 115deg,#484848 150deg,#5c5c5c 200deg,#4c4c4c 250deg,#363636 298deg,#4c4c4c 335deg,#5a5a5a 360deg);box-shadow:inset 0 0 2px 0 rgba(0,0,0,.5),0 0 0 0.8px #1e1e1e"></div>
<svg style="left:427px;top:621px" width="9" height="9" viewBox="0 0 9 9"><circle cx="4.46" cy="4.21" r="2.4" fill="#fff"/></svg>
<span class="t" style="left:419.5px;top:607px;font-size:8px;line-height:8px">1</span>
<span class="t" style="left:425px;top:630px;width:20px;text-align:center;font-size:8px;line-height:8px;color:#c8c8c8">-</span>
<div class="dk" style="left:463px;top:608px;width:33px;height:13px;font-size:9.5px;line-height:11px;text-align:center;color:#ffffff;letter-spacing:-0.2px"></div>
<div class="sb" style="left:470px;top:624px;width:19px;height:10.5px;"></div>
<svg style="left:490px;top:628px" width="6" height="3" viewBox="0 0 6 3"><path d="M0 0H6L3.0 3Z" fill="#c8c8c8"/></svg>
<div class="dk" style="left:498px;top:608px;width:33px;height:13px;font-size:9.5px;line-height:11px;text-align:center;color:#ffffff;letter-spacing:-0.2px">Amp</div>
<div class="sb" style="left:505px;top:624px;width:19px;height:10.5px;"></div>
<svg style="left:525px;top:628px" width="6" height="3" viewBox="0 0 6 3"><path d="M0 0H6L3.0 3Z" fill="#c8c8c8"/></svg>
<div class="dk" style="left:533px;top:608px;width:33px;height:13px;font-size:9.5px;line-height:11px;text-align:center;color:#ffffff;letter-spacing:-0.2px">Comp</div>
<div class="sb" style="left:540px;top:624px;width:19px;height:10.5px;"></div>
<svg style="left:560px;top:628px" width="6" height="3" viewBox="0 0 6 3"><path d="M0 0H6L3.0 3Z" fill="#c8c8c8"/></svg>
<svg style="left:807px;top:609px" width="703" height="26" viewBox="807 0 703 26"><rect x="807.5" y="0.5" width="702" height="25" fill="#2f2f2f" stroke="#5a5a5a"/><rect x="861.0" y="1" width="1" height="24" fill="#6a6a6a"/><rect x="1034.1" y="1" width="1" height="24" fill="#6a6a6a"/><rect x="1206.2" y="1" width="1" height="24" fill="#6a6a6a"/><rect x="1378.1" y="1" width="1" height="24" fill="#6a6a6a"/><rect x="809" y="12.6" width="700" height="0.9" fill="#2c6a7c"/><rect x="1362.1" y="0" width="1" height="26" fill="#a0a0a0"/></svg>
<div class="btn" style="left:1518px;top:610px;width:24px;height:24px;font-size:8.5px;line-height:22px;letter-spacing:-0.5px;border:1px solid #787878">EDIT</div>
<div style="left:1549px;top:611px;width:6px;height:3px;background:#c0c0c0;border-bottom:1px solid #777"></div>
<div style="left:1px;top:640px;width:1558px;height:32px;background:linear-gradient(#444 0,#424242 6px,#3f3f3f 60%,#3d3d3d 100%)"></div>
<div class="sep" style="left:1px;top:638px;width:1558px;height:2px;"></div>
<div class="dk" style="left:13px;top:643px;width:116px;height:26px;"></div>
<span class="t b" style="left:17px;top:644px;font-size:12px;line-height:14px;color:#62d2f6;letter-spacing:-0.1px">Handclaps</span>
<span class="t" style="left:17px;top:657px;font-size:10px;line-height:11px;color:#62d2f6;opacity:0.75;letter-spacing:-0.2px">mono audio (.wav)</span>
<svg style="left:122px;top:664px" width="5" height="3" viewBox="0 0 5 3"><path d="M0 0H5L2.5 3Z" fill="#4d9fba"/></svg>
<div style="left:146px;top:649px;width:20px;height:11px;background:linear-gradient(#18d818,#08b808);border:1px solid #161616;border-radius:2.5px;box-shadow:0 0 1px #222"></div>
<span class="t" style="left:146px;top:661px;width:20px;text-align:center;font-size:8.5px;line-height:10px;letter-spacing:-0.2px">Play</span>
<div class="sb" style="left:170px;top:649px;width:20px;height:11px;color:#fff;font-size:9px;line-height:9px;text-align:center">1</div>
<span class="t" style="left:170px;top:661px;width:20px;text-align:center;font-size:8.5px;line-height:10px;letter-spacing:-0.2px">Rec</span>
<svg style="left:191px;top:653px" width="5" height="3" viewBox="0 0 5 3"><path d="M0 0H5L2.5 3Z" fill="#c8c8c8"/></svg>
<svg style="left:200px;top:638px" width="145" height="34" viewBox="200 0 145 34"><rect x="207.8" y="8" width="1" height="2" fill="#c8c8c8"/><rect x="207.8" y="24" width="1" height="2" fill="#c8c8c8"/><rect x="222.8" y="8" width="1" height="2" fill="#c8c8c8"/><rect x="222.8" y="24" width="1" height="2" fill="#c8c8c8"/><rect x="234.0" y="8" width="1" height="2" fill="#c8c8c8"/><rect x="234.0" y="24" width="1" height="2" fill="#c8c8c8"/><rect x="247.0" y="8" width="1" height="2" fill="#c8c8c8"/><rect x="247.0" y="24" width="1" height="2" fill="#c8c8c8"/><rect x="262.0" y="8" width="1" height="2" fill="#c8c8c8"/><rect x="262.0" y="24" width="1" height="2" fill="#c8c8c8"/><rect x="274.0" y="8" width="1" height="2" fill="#c8c8c8"/><rect x="274.0" y="24" width="1" height="2" fill="#c8c8c8"/><rect x="281.0" y="8" width="1" height="2" fill="#c8c8c8"/><rect x="281.0" y="24" width="1" height="2" fill="#c8c8c8"/><rect x="289.0" y="8" width="1" height="2" fill="#c8c8c8"/><rect x="289.0" y="24" width="1" height="2" fill="#c8c8c8"/><rect x="298.2" y="8" width="1" height="2" fill="#c8c8c8"/><rect x="298.2" y="24" width="1" height="2" fill="#c8c8c8"/><rect x="319.0" y="8" width="1" height="2" fill="#c8c8c8"/><rect x="319.0" y="24" width="1" height="2" fill="#c8c8c8"/><rect x="331.2" y="8" width="1" height="2" fill="#c8c8c8"/><rect x="331.2" y="24" width="1" height="2" fill="#c8c8c8"/><rect x="307.8" y="7" width="1" height="4" fill="#d8d8d8"/><rect x="307.8" y="22" width="1" height="4" fill="#d8d8d8"/><rect x="208" y="15" width="128" height="1" fill="#383838"/><rect x="208" y="16" width="128" height="1" fill="#272727"/><rect x="208" y="17" width="128" height="1" fill="#565656"/></svg>
<div style="left:305px;top:648px;width:7px;height:14px;background:linear-gradient(90deg,#b8b8b8,#f4f4f4 25%,#fff 50%,#f0f0f0 75%,#a8a8a8);border-radius:2px;box-shadow:0 0 1px #111"><div style="left:3px;top:2px;width:1px;height:10px;background:#6a6a6a"></div></div>
<span class="t" style="left:207px;top:665px;font-size:8px;line-height:8px;color:#b4b4b4;letter-spacing:-0.4px">0.0</span>
<div class="sb" style="left:353px;top:644px;width:13px;height:9px;"></div>
<span class="t" style="left:369px;top:644px;font-size:8.5px;line-height:10px">M</span>
<div class="sb" style="left:353px;top:658px;width:13px;height:9px;"></div>
<span class="t" style="left:369px;top:658px;font-size:8.5px;line-height:10px">S</span>
<svg style="left:383px;top:639px" width="32" height="32" viewBox="-16 -16 32 32"><rect x="-8" y="10" width="1.0" height="1.0" fill="#d0d0d0"/><rect x="-13" y="5" width="1.0" height="1.0" fill="#d0d0d0"/><rect x="-14" y="-2" width="1.0" height="1.0" fill="#d0d0d0"/><rect x="-12" y="-8" width="1.0" height="1.0" fill="#d0d0d0"/><rect x="-7" y="-13" width="1.0" height="1.0" fill="#d0d0d0"/><rect x="-1" y="-14" width="1.0" height="1.0" fill="#d0d0d0"/><rect x="5" y="-13" width="1.0" height="1.0" fill="#d0d0d0"/><rect x="10" y="-8" width="1.0" height="1.0" fill="#d0d0d0"/><rect x="12" y="-2" width="1.0" height="1.0" fill="#d0d0d0"/><rect x="11" y="5" width="1.0" height="1.0" fill="#d0d0d0"/><rect x="6" y="10" width="1.0" height="1.0" fill="#d0d0d0"/><circle cx="-0.2" cy="0.6" r="9.9" fill="#1c1c1c"/></svg>
<div style="left:389.4px;top:645.9px;width:18.2px;height:18.2px;border-radius:50%;background:conic-gradient(from 0deg,#5a5a5a 0deg,#565656 40deg,#444 85deg,#343434 115deg,#484848 150deg,#5c5c5c 200deg,#4c4c4c 250deg,#363636 298deg,#4c4c4c 335deg,#5a5a5a 360deg);box-shadow:inset 0 0 2px 0 rgba(0,0,0,.5),0 0 0 0.8px #1e1e1e"></div>
<svg style="left:394px;top:645px" width="9" height="9" viewBox="0 0 9 9"><circle cx="4.50" cy="4.50" r="2.4" fill="#00d8e8"/></svg>
<span class="t" style="left:384px;top:641px;font-size:6.5px;line-height:8px">P</span>
<span class="t" style="left:390px;top:664.5px;width:20px;text-align:center;font-size:7px;line-height:8px;color:#c8c8c8">50</span>
<svg style="left:419px;top:639px" width="32" height="32" viewBox="-16 -16 32 32"><rect x="-8" y="10" width="1.0" height="1.0" fill="#d0d0d0"/><rect x="-12" y="5" width="1.0" height="1.0" fill="#d0d0d0"/><rect x="-14" y="-2" width="1.0" height="1.0" fill="#d0d0d0"/><rect x="-12" y="-8" width="1.0" height="1.0" fill="#d0d0d0"/><rect x="-7" y="-13" width="1.0" height="1.0" fill="#d0d0d0"/><rect x="0" y="-14" width="1.0" height="1.0" fill="#d0d0d0"/><rect x="6" y="-13" width="1.0" height="1.0" fill="#d0d0d0"/><rect x="11" y="-8" width="1.0" height="1.0" fill="#d0d0d0"/><rect x="13" y="-2" width="1.0" height="1.0" fill="#d0d0d0"/><rect x="11" y="5" width="1.0" height="1.0" fill="#d0d0d0"/><rect x="7" y="10" width="1.0" height="1.0" fill="#d0d0d0"/><circle cx="0.3" cy="0.6" r="9.9" fill="#1c1c1c"/></svg>
<div style="left:425.9px;top:645.9px;width:18.2px;height:18.2px;border-radius:50%;background:conic-gradient(from 0deg,#5a5a5a 0deg,#565656 40deg,#444 85deg,#343434 115deg,#484848 150deg,#5c5c5c 200deg,#4c4c4c 250deg,#363636 298deg,#4c4c4c 335deg,#5a5a5a 360deg);box-shadow:inset 0 0 2px 0 rgba(0,0,0,.5),0 0 0 0.8px #1e1e1e"></div>
<svg style="left:427px;top:655px" width="9" height="9" viewBox="0 0 9 9"><circle cx="4.46" cy="4.21" r="2.4" fill="#fff"/></svg>
<span class="t" style="left:419.5px;top:641px;font-size:8px;line-height:8px">1</span>
<span class="t" style="left:425px;top:664px;width:20px;text-align:center;font-size:8px;line-height:8px;color:#c8c8c8">-</span>
<div class="dk" style="left:463px;top:642px;width:33px;height:13px;font-size:9.5px;line-height:11px;text-align:center;color:#ffffff;letter-spacing:-0.2px"></div>
<div class="sb" style="left:470px;top:658px;width:19px;height:10.5px;"></div>
<svg style="left:490px;top:662px" width="6" height="3" viewBox="0 0 6 3"><path d="M0 0H6L3.0 3Z" fill="#c8c8c8"/></svg>
<div class="dk" style="left:498px;top:642px;width:33px;height:13px;font-size:9.5px;line-height:11px;text-align:center;color:#ffffff;letter-spacing:-0.2px"></div>
<div class="sb" style="left:505px;top:658px;width:19px;height:10.5px;"></div>
<svg style="left:525px;top:662px" width="6" height="3" viewBox="0 0 6 3"><path d="M0 0H6L3.0 3Z" fill="#c8c8c8"/></svg>
<div class="dk" style="left:533px;top:642px;width:33px;height:13px;font-size:9.5px;line-height:11px;text-align:center;color:#ffffff;letter-spacing:-0.2px"></div>
<div class="sb" style="left:540px;top:658px;width:19px;height:10.5px;"></div>
<svg style="left:560px;top:662px" width="6" height="3" viewBox="0 0 6 3"><path d="M0 0H6L3.0 3Z" fill="#c8c8c8"/></svg>
<svg style="left:807px;top:643px" width="703" height="26" viewBox="807 0 703 26"><rect x="807.5" y="0.5" width="702" height="25" fill="#2f2f2f" stroke="#5a5a5a"/><rect x="861.0" y="1" width="1" height="24" fill="#6a6a6a"/><rect x="1034.1" y="1" width="1" height="24" fill="#6a6a6a"/><rect x="1206.2" y="1" width="1" height="24" fill="#6a6a6a"/><rect x="1378.1" y="1" width="1" height="24" fill="#6a6a6a"/><rect x="809" y="12.6" width="700" height="0.9" fill="#2c6a7c"/><rect x="1362.1" y="0" width="1" height="26" fill="#a0a0a0"/></svg>
<div class="btn" style="left:1518px;top:644px;width:24px;height:24px;font-size:8.5px;line-height:22px;letter-spacing:-0.5px;border:1px solid #787878">EDIT</div>
<div style="left:1549px;top:645px;width:6px;height:3px;background:#c0c0c0;border-bottom:1px solid #777"></div>
<div style="left:1px;top:674px;width:1558px;height:32px;background:linear-gradient(#444 0,#424242 6px,#3f3f3f 60%,#3d3d3d 100%)"></div>
<div class="sep" style="left:1px;top:672px;width:1558px;height:2px;"></div>
<div class="dk" style="left:13px;top:677px;width:116px;height:26px;"></div>
<span class="t b" style="left:17px;top:678px;font-size:12px;line-height:14px;color:#62d2f6;letter-spacing:-0.1px">Brass</span>
<span class="t" style="left:17px;top:691px;font-size:10px;line-height:11px;color:#62d2f6;opacity:0.75;letter-spacing:-0.2px">midi</span>
<svg style="left:122px;top:698px" width="5" height="3" viewBox="0 0 5 3"><path d="M0 0H5L2.5 3Z" fill="#4d9fba"/></svg>
<div style="left:146px;top:683px;width:20px;height:11px;background:linear-gradient(#18d818,#08b808);border:1px solid #161616;border-radius:2.5px;box-shadow:0 0 1px #222"></div>
<span class="t" style="left:146px;top:695px;width:20px;text-align:center;font-size:8.5px;line-height:10px;letter-spacing:-0.2px">Play</span>
<div class="sb" style="left:170px;top:683px;width:20px;height:11px;color:#fff;font-size:9px;line-height:9px;text-align:center"></div>
<span class="t" style="left:170px;top:695px;width:20px;text-align:center;font-size:8.5px;line-height:10px;letter-spacing:-0.2px">Rec</span>
<svg style="left:200px;top:672px" width="145" height="34" viewBox="200 0 145 34"><rect x="207.8" y="8" width="1" height="2" fill="#c8c8c8"/><rect x="207.8" y="24" width="1" height="2" fill="#c8c8c8"/><rect x="222.8" y="8" width="1" height="2" fill="#c8c8c8"/><rect x="222.8" y="24" width="1" height="2" fill="#c8c8c8"/><rect x="234.0" y="8" width="1" height="2" fill="#c8c8c8"/><rect x="234.0" y="24" width="1" height="2" fill="#c8c8c8"/><rect x="247.0" y="8" width="1" height="2" fill="#c8c8c8"/><rect x="247.0" y="24" width="1" height="2" fill="#c8c8c8"/><rect x="262.0" y="8" width="1" height="2" fill="#c8c8c8"/><rect x="262.0" y="24" width="1" height="2" fill="#c8c8c8"/><rect x="274.0" y="8" width="1" height="2" fill="#c8c8c8"/><rect x="274.0" y="24" width="1" height="2" fill="#c8c8c8"/><rect x="281.0" y="8" width="1" height="2" fill="#c8c8c8"/><rect x="281.0" y="24" width="1" height="2" fill="#c8c8c8"/><rect x="289.0" y="8" width="1" height="2" fill="#c8c8c8"/><rect x="289.0" y="24" width="1" height="2" fill="#c8c8c8"/><rect x="298.2" y="8" width="1" height="2" fill="#c8c8c8"/><rect x="298.2" y="24" width="1" height="2" fill="#c8c8c8"/><rect x="319.0" y="8" width="1" height="2" fill="#c8c8c8"/><rect x="319.0" y="24" width="1" height="2" fill="#c8c8c8"/><rect x="331.2" y="8" width="1" height="2" fill="#c8c8c8"/><rect x="331.2" y="24" width="1" height="2" fill="#c8c8c8"/><rect x="307.8" y="7" width="1" height="4" fill="#d8d8d8"/><rect x="307.8" y="22" width="1" height="4" fill="#d8d8d8"/><rect x="208" y="15" width="128" height="1" fill="#383838"/><rect x="208" y="16" width="128" height="1" fill="#272727"/><rect x="208" y="17" width="128" height="1" fill="#565656"/></svg>
<div style="left:305px;top:682px;width:7px;height:14px;background:linear-gradient(90deg,#b8b8b8,#f4f4f4 25%,#fff 50%,#f0f0f0 75%,#a8a8a8);border-radius:2px;box-shadow:0 0 1px #111"><div style="left:3px;top:2px;width:1px;height:10px;background:#6a6a6a"></div></div>
<span class="t" style="left:207px;top:699px;font-size:8px;line-height:8px;color:#b4b4b4;letter-spacing:-0.4px">0.0</span>
<div class="sb" style="left:353px;top:678px;width:13px;height:9px;"></div>
<span class="t" style="left:369px;top:678px;font-size:8.5px;line-height:10px">M</span>
<div class="sb" style="left:353px;top:692px;width:13px;height:9px;"></div>
<span class="t" style="left:369px;top:692px;font-size:8.5px;line-height:10px">S</span>
<svg style="left:383px;top:673px" width="32" height="32" viewBox="-16 -16 32 32"><rect x="-8" y="10" width="1.0" height="1.0" fill="#d0d0d0"/><rect x="-13" y="5" width="1.0" height="1.0" fill="#d0d0d0"/><rect x="-14" y="-2" width="1.0" height="1.0" fill="#d0d0d0"/><rect x="-12" y="-8" width="1.0" height="1.0" fill="#d0d0d0"/><rect x="-7" y="-13" width="1.0" height="1.0" fill="#d0d0d0"/><rect x="-1" y="-14" width="1.0" height="1.0" fill="#d0d0d0"/><rect x="5" y="-13" width="1.0" height="1.0" fill="#d0d0d0"/><rect x="10" y="-8" width="1.0" height="1.0" fill="#d0d0d0"/><rect x="12" y="-2" width="1.0" height="1.0" fill="#d0d0d0"/><rect x="11" y="5" width="1.0" height="1.0" fill="#d0d0d0"/><rect x="6" y="10" width="1.0" height="1.0" fill="#d0d0d0"/><circle cx="-0.2" cy="0.6" r="9.9" fill="#1c1c1c"/></svg>
<div style="left:389.4px;top:679.9px;width:18.2px;height:18.2px;border-radius:50%;background:conic-gradient(from 0deg,#5a5a5a 0deg,#565656 40deg,#444 85deg,#343434 115deg,#484848 150deg,#5c5c5c 200deg,#4c4c4c 250deg,#363636 298deg,#4c4c4c 335deg,#5a5a5a 360deg);box-shadow:inset 0 0 2px 0 rgba(0,0,0,.5),0 0 0 0.8px #1e1e1e"></div>
<svg style="left:394px;top:679px" width="9" height="9" viewBox="0 0 9 9"><circle cx="4.50" cy="4.50" r="2.4" fill="#00d8e8"/></svg>
<span class="t" style="left:384px;top:675px;font-size:6.5px;line-height:8px">P</span>
<span class="t" style="left:390px;top:698.5px;width:20px;text-align:center;font-size:7px;line-height:8px;color:#c8c8c8">50</span>
<svg style="left:419px;top:673px" width="32" height="32" viewBox="-16 -16 32 32"><rect x="-8" y="10" width="1.0" height="1.0" fill="#d0d0d0"/><rect x="-12" y="5" width="1.0" height="1.0" fill="#d0d0d0"/><rect x="-14" y="-2" width="1.0" height="1.0" fill="#d0d0d0"/><rect x="-12" y="-8" width="1.0" height="1.0" fill="#d0d0d0"/><rect x="-7" y="-13" width="1.0" height="1.0" fill="#d0d0d0"/><rect x="0" y="-14" width="1.0" height="1.0" fill="#d0d0d0"/><rect x="6" y="-13" width="1.0" height="1.0" fill="#d0d0d0"/><rect x="11" y="-8" width="1.0" height="1.0" fill="#d0d0d0"/><rect x="13" y="-2" width="1.0" height="1.0" fill="#d0d0d0"/><rect x="11" y="5" width="1.0" height="1.0" fill="#d0d0d0"/><rect x="7" y="10" width="1.0" height="1.0" fill="#d0d0d0"/><circle cx="0.3" cy="0.6" r="9.9" fill="#1c1c1c"/></svg>
<div style="left:425.9px;top:679.9px;width:18.2px;height:18.2px;border-radius:50%;background:conic-gradient(from 0deg,#5a5a5a 0deg,#565656 40deg,#444 85deg,#343434 115deg,#484848 150deg,#5c5c5c 200deg,#4c4c4c 250deg,#363636 298deg,#4c4c4c 335deg,#5a5a5a 360deg);box-shadow:inset 0 0 2px 0 rgba(0,0,0,.5),0 0 0 0.8px #1e1e1e"></div>
<svg style="left:427px;top:689px" width="9" height="9" viewBox="0 0 9 9"><circle cx="4.46" cy="4.21" r="2.4" fill="#fff"/></svg>
<span class="t" style="left:419.5px;top:675px;font-size:8px;line-height:8px">1</span>
<span class="t" style="left:425px;top:698px;width:20px;text-align:center;font-size:8px;line-height:8px;color:#c8c8c8">-</span>
<div class="dk" style="left:463px;top:676px;width:33px;height:13px;font-size:9.5px;line-height:11px;text-align:center;color:#ffff28;letter-spacing:-0.2px">MTSi</div>
<div class="sb" style="left:470px;top:692px;width:19px;height:10.5px;"></div>
<svg style="left:490px;top:696px" width="6" height="3" viewBox="0 0 6 3"><path d="M0 0H6L3.0 3Z" fill="#c8c8c8"/></svg>
<div class="dk" style="left:498px;top:676px;width:33px;height:13px;font-size:9.5px;line-height:11px;text-align:center;color:#ffffff;letter-spacing:-0.2px"></div>
<div class="sb" style="left:505px;top:692px;width:19px;height:10.5px;"></div>
<svg style="left:525px;top:696px" width="6" height="3" viewBox="0 0 6 3"><path d="M0 0H6L3.0 3Z" fill="#c8c8c8"/></svg>
<div class="dk" style="left:533px;top:676px;width:33px;height:13px;font-size:9.5px;line-height:11px;text-align:center;color:#ffffff;letter-spacing:-0.2px"></div>
<div class="sb" style="left:540px;top:692px;width:19px;height:10.5px;"></div>
<svg style="left:560px;top:696px" width="6" height="3" viewBox="0 0 6 3"><path d="M0 0H6L3.0 3Z" fill="#c8c8c8"/></svg>
<svg style="left:807px;top:677px" width="703" height="26" viewBox="807 0 703 26"><rect x="807.5" y="0.5" width="702" height="25" fill="#2f2f2f" stroke="#5a5a5a"/><rect x="861.0" y="1" width="1" height="24" fill="#6a6a6a"/><rect x="1034.1" y="1" width="1" height="24" fill="#6a6a6a"/><rect x="1206.2" y="1" width="1" height="24" fill="#6a6a6a"/><rect x="1378.1" y="1" width="1" height="24" fill="#6a6a6a"/><rect x="1292" y="5.3" width="21" height="2" fill="#5fd8fa"/><rect x="1335" y="2.7" width="21" height="2" fill="#5fd8fa"/><rect x="1379" y="22.6" width="18" height="2" fill="#5fd8fa"/><rect x="1421" y="19.7" width="20" height="2" fill="#5fd8fa"/><rect x="1464" y="14.6" width="21" height="2" fill="#5fd8fa"/><rect x="1507" y="12.7" width="2" height="2" fill="#5fd8fa"/><rect x="1362.1" y="0" width="1" height="26" fill="#a0a0a0"/></svg>
<div class="btn" style="left:1518px;top:678px;width:24px;height:24px;font-size:8.5px;line-height:22px;letter-spacing:-0.5px;border:1px solid #787878">EDIT</div>
<div style="left:1549px;top:679px;width:6px;height:3px;background:#c0c0c0;border-bottom:1px solid #777"></div>
<div style="left:1px;top:708px;width:1558px;height:32px;background:linear-gradient(#444 0,#424242 6px,#3f3f3f 60%,#3d3d3d 100%)"></div>
<div class="sep" style="left:1px;top:706px;width:1558px;height:2px;"></div>
<div class="dk" style="left:13px;top:711px;width:116px;height:26px;"></div>
<span class="t b" style="left:17px;top:712px;font-size:12px;line-height:14px;color:#62d2f6;letter-spacing:-0.1px">Acoustic Guitar</span>
<span class="t" style="left:17px;top:725px;font-size:10px;line-height:11px;color:#62d2f6;opacity:0.75;letter-spacing:-0.2px">mono audio (.wav)</span>
<svg style="left:122px;top:732px" width="5" height="3" viewBox="0 0 5 3"><path d="M0 0H5L2.5 3Z" fill="#4d9fba"/></svg>
<div style="left:146px;top:717px;width:20px;height:11px;background:linear-gradient(#18d818,#08b808);border:1px solid #161616;border-radius:2.5px;box-shadow:0 0 1px #222"></div>
<span class="t" style="left:146px;top:729px;width:20px;text-align:center;font-size:8.5px;line-height:10px;letter-spacing:-0.2px">Play</span>
<div class="sb" style="left:170px;top:717px;width:20px;height:11px;color:#fff;font-size:9px;line-height:9px;text-align:center">1</div>
<span class="t" style="left:170px;top:729px;width:20px;text-align:center;font-size:8.5px;line-height:10px;letter-spacing:-0.2px">Rec</span>
<svg style="left:191px;top:721px" width="5" height="3" viewBox="0 0 5 3"><path d="M0 0H5L2.5 3Z" fill="#c8c8c8"/></svg>
<svg style="left:200px;top:706px" width="145" height="34" viewBox="200 0 145 34"><rect x="207.8" y="8" width="1" height="2" fill="#c8c8c8"/><rect x="207.8" y="24" width="1" height="2" fill="#c8c8c8"/><rect x="222.8" y="8" width="1" height="2" fill="#c8c8c8"/><rect x="222.8" y="24" width="1" height="2" fill="#c8c8c8"/><rect x="234.0" y="8" width="1" height="2" fill="#c8c8c8"/><rect x="234.0" y="24" width="1" height="2" fill="#c8c8c8"/><rect x="247.0" y="8" width="1" height="2" fill="#c8c8c8"/><rect x="247.0" y="24" width="1" height="2" fill="#c8c8c8"/><rect x="262.0" y="8" width="1" height="2" fill="#c8c8c8"/><rect x="262.0" y="24" width="1" height="2" fill="#c8c8c8"/><rect x="274.0" y="8" width="1" height="2" fill="#c8c8c8"/><rect x="274.0" y="24" width="1" height="2" fill="#c8c8c8"/><rect x="281.0" y="8" width="1" height="2" fill="#c8c8c8"/><rect x="281.0" y="24" width="1" height="2" fill="#c8c8c8"/><rect x="289.0" y="8" width="1" height="2" fill="#c8c8c8"/><rect x="289.0" y="24" width="1" height="2" fill="#c8c8c8"/><rect x="298.2" y="8" width="1" height="2" fill="#c8c8c8"/><rect x="298.2" y="24" width="1" height="2" fill="#c8c8c8"/><rect x="319.0" y="8" width="1" height="2" fill="#c8c8c8"/><rect x="319.0" y="24" width="1" height="2" fill="#c8c8c8"/><rect x="331.2" y="8" width="1" height="2" fill="#c8c8c8"/><rect x="331.2" y="24" width="1" height="2" fill="#c8c8c8"/><rect x="307.8" y="7" width="1" height="4" fill="#d8d8d8"/><rect x="307.8" y="22" width="1" height="4" fill="#d8d8d8"/><rect x="208" y="15" width="128" height="1" fill="#383838"/><rect x="208" y="16" width="128" height="1" fill="#272727"/><rect x="208" y="17" width="128" height="1" fill="#565656"/></svg>
<div style="left:305px;top:716px;width:7px;height:14px;background:linear-gradient(90deg,#b8b8b8,#f4f4f4 25%,#fff 50%,#f0f0f0 75%,#a8a8a8);border-radius:2px;box-shadow:0 0 1px #111"><div style="left:3px;top:2px;width:1px;height:10px;background:#6a6a6a"></div></div>
<span class="t" style="left:207px;top:733px;font-size:8px;line-height:8px;color:#b4b4b4;letter-spacing:-0.4px">0.0</span>
<div class="sb" style="left:353px;top:712px;width:13px;height:9px;"></div>
<span class="t" style="left:369px;top:712px;font-size:8.5px;line-height:10px">M</span>
<div class="sb" style="left:353px;top:726px;width:13px;height:9px;"></div>
<span class="t" style="left:369px;top:726px;font-size:8.5px;line-height:10px">S</span>
<svg style="left:383px;top:707px" width="32" height="32" viewBox="-16 -16 32 32"><rect x="-8" y="10" width="1.0" height="1.0" fill="#d0d0d0"/><rect x="-13" y="5" width="1.0" height="1.0" fill="#d0d0d0"/><rect x="-14" y="-2" width="1.0" height="1.0" fill="#d0d0d0"/><rect x="-12" y="-8" width="1.0" height="1.0" fill="#d0d0d0"/><rect x="-7" y="-13" width="1.0" height="1.0" fill="#d0d0d0"/><rect x="-1" y="-14" width="1.0" height="1.0" fill="#d0d0d0"/><rect x="5" y="-13" width="1.0" height="1.0" fill="#d0d0d0"/><rect x="10" y="-8" width="1.0" height="1.0" fill="#d0d0d0"/><rect x="12" y="-2" width="1.0" height="1.0" fill="#d0d0d0"/><rect x="11" y="5" width="1.0" height="1.0" fill="#d0d0d0"/><rect x="6" y="10" width="1.0" height="1.0" fill="#d0d0d0"/><circle cx="-0.2" cy="0.6" r="9.9" fill="#1c1c1c"/></svg>
<div style="left:389.4px;top:713.9px;width:18.2px;height:18.2px;border-radius:50%;background:conic-gradient(from 0deg,#5a5a5a 0deg,#565656 40deg,#444 85deg,#343434 115deg,#484848 150deg,#5c5c5c 200deg,#4c4c4c 250deg,#363636 298deg,#4c4c4c 335deg,#5a5a5a 360deg);box-shadow:inset 0 0 2px 0 rgba(0,0,0,.5),0 0 0 0.8px #1e1e1e"></div>
<svg style="left:394px;top:713px" width="9" height="9" viewBox="0 0 9 9"><circle cx="4.50" cy="4.50" r="2.4" fill="#00d8e8"/></svg>
<span class="t" style="left:384px;top:709px;font-size:6.5px;line-height:8px">P</span>
<span class="t" style="left:390px;top:732.5px;width:20px;text-align:center;font-size:7px;line-height:8px;color:#c8c8c8">50</span>
<svg style="left:419px;top:707px" width="32" height="32" viewBox="-16 -16 32 32"><rect x="-8" y="10" width="1.0" height="1.0" fill="#d0d0d0"/><rect x="-12" y="5" width="1.0" height="1.0" fill="#d0d0d0"/><rect x="-14" y="-2" width="1.0" height="1.0" fill="#d0d0d0"/><rect x="-12" y="-8" width="1.0" height="1.0" fill="#d0d0d0"/><rect x="-7" y="-13" width="1.0" height="1.0" fill="#d0d0d0"/><rect x="0" y="-14" width="1.0" height="1.0" fill="#d0d0d0"/><rect x="6" y="-13" width="1.0" height="1.0" fill="#d0d0d0"/><rect x="11" y="-8" width="1.0" height="1.0" fill="#d0d0d0"/><rect x="13" y="-2" width="1.0" height="1.0" fill="#d0d0d0"/><rect x="11" y="5" width="1.0" height="1.0" fill="#d0d0d0"/><rect x="7" y="10" width="1.0" height="1.0" fill="#d0d0d0"/><circle cx="0.3" cy="0.6" r="9.9" fill="#1c1c1c"/></svg>
<div style="left:425.9px;top:713.9px;width:18.2px;height:18.2px;border-radius:50%;background:conic-gradient(from 0deg,#5a5a5a 0deg,#565656 40deg,#444 85deg,#343434 115deg,#484848 150deg,#5c5c5c 200deg,#4c4c4c 250deg,#363636 298deg,#4c4c4c 335deg,#5a5a5a 360deg);box-shadow:inset 0 0 2px 0 rgba(0,0,0,.5),0 0 0 0.8px #1e1e1e"></div>
<svg style="left:427px;top:723px" width="9" height="9" viewBox="0 0 9 9"><circle cx="4.46" cy="4.21" r="2.4" fill="#fff"/></svg>
<span class="t" style="left:419.5px;top:709px;font-size:8px;line-height:8px">1</span>
<span class="t" style="left:425px;top:732px;width:20px;text-align:center;font-size:8px;line-height:8px;color:#c8c8c8">-</span>
<div class="dk" style="left:463px;top:710px;width:33px;height:13px;font-size:9.5px;line-height:11px;text-align:center;color:#ffffff;letter-spacing:-0.2px"></div>
<div class="sb" style="left:470px;top:726px;width:19px;height:10.5px;"></div>
<svg style="left:490px;top:730px" width="6" height="3" viewBox="0 0 6 3"><path d="M0 0H6L3.0 3Z" fill="#c8c8c8"/></svg>
<div class="dk" style="left:498px;top:710px;width:33px;height:13px;font-size:9.5px;line-height:11px;text-align:center;color:#ffffff;letter-spacing:-0.2px"></div>
<div class="sb" style="left:505px;top:726px;width:19px;height:10.5px;"></div>
<svg style="left:525px;top:730px" width="6" height="3" viewBox="0 0 6 3"><path d="M0 0H6L3.0 3Z" fill="#c8c8c8"/></svg>
<div class="dk" style="left:533px;top:710px;width:33px;height:13px;font-size:9.5px;line-height:11px;text-align:center;color:#ffffff;letter-spacing:-0.2px"></div>
<div class="sb" style="left:540px;top:726px;width:19px;height:10.5px;"></div>
<svg style="left:560px;top:730px" width="6" height="3" viewBox="0 0 6 3"><path d="M0 0H6L3.0 3Z" fill="#c8c8c8"/></svg>
<svg style="left:807px;top:711px" width="703" height="26" viewBox="807 0 703 26"><rect x="807.5" y="0.5" width="702" height="25" fill="#2f2f2f" stroke="#5a5a5a"/><rect x="861.0" y="1" width="1" height="24" fill="#6a6a6a"/><rect x="1034.1" y="1" width="1" height="24" fill="#6a6a6a"/><rect x="1206.2" y="1" width="1" height="24" fill="#6a6a6a"/><rect x="1378.1" y="1" width="1" height="24" fill="#6a6a6a"/><rect x="809" y="12.6" width="700" height="0.9" fill="#2c7f98"/><rect x="1292" y="11.6" width="16" height="3" fill="#5fd8fa"/><rect x="1308" y="12" width="3" height="2" fill="#5fd8fa"/><rect x="1314" y="12" width="3" height="2" fill="#5fd8fa"/><rect x="1320" y="12" width="1.5" height="2" fill="#5fd8fa"/><rect x="1323.5" y="12" width="2" height="2" fill="#5fd8fa"/><rect x="1328.5" y="12" width="1.5" height="2" fill="#5fd8fa"/><rect x="1331.5" y="12" width="1.5" height="2" fill="#5fd8fa"/><rect x="1379" y="11.6" width="15" height="3" fill="#5fd8fa"/><rect x="1394" y="12" width="4" height="2" fill="#5fd8fa"/><rect x="1399.5" y="12" width="4" height="2" fill="#5fd8fa"/><rect x="1406.5" y="12" width="1.5" height="2" fill="#5fd8fa"/><rect x="1464" y="11.6" width="16" height="3" fill="#5fd8fa"/><rect x="1480" y="12" width="2" height="2" fill="#5fd8fa"/><rect x="1483.5" y="12" width="2" height="2" fill="#5fd8fa"/><rect x="1487.5" y="12" width="3" height="2" fill="#5fd8fa"/><rect x="1492.0" y="12" width="4" height="2" fill="#5fd8fa"/><rect x="1497.5" y="12" width="1.5" height="2" fill="#5fd8fa"/><rect x="1500.5" y="12" width="4" height="2" fill="#5fd8fa"/><rect x="1362.1" y="0" width="1" height="26" fill="#a0a0a0"/></svg>
<div class="btn" style="left:1518px;top:712px;width:24px;height:24px;font-size:8.5px;line-height:22px;letter-spacing:-0.5px;border:1px solid #787878">EDIT</div>
<div style="left:1549px;top:713px;width:6px;height:3px;background:#c0c0c0;border-bottom:1px solid #777"></div>
<div style="left:1px;top:742px;width:1558px;height:32px;background:linear-gradient(#444 0,#424242 6px,#3f3f3f 60%,#3d3d3d 100%)"></div>
<div class="sep" style="left:1px;top:740px;width:1558px;height:2px;"></div>
<span class="t b" style="left:17px;top:747px;font-size:12.5px;line-height:14px;color:#e4e4e4">Effect Return 1</span>
<svg style="left:200px;top:740px" width="145" height="34" viewBox="200 0 145 34"><rect x="207.8" y="8" width="1" height="2" fill="#c8c8c8"/><rect x="207.8" y="24" width="1" height="2" fill="#c8c8c8"/><rect x="222.8" y="8" width="1" height="2" fill="#c8c8c8"/><rect x="222.8" y="24" width="1" height="2" fill="#c8c8c8"/><rect x="234.0" y="8" width="1" height="2" fill="#c8c8c8"/><rect x="234.0" y="24" width="1" height="2" fill="#c8c8c8"/><rect x="247.0" y="8" width="1" height="2" fill="#c8c8c8"/><rect x="247.0" y="24" width="1" height="2" fill="#c8c8c8"/><rect x="262.0" y="8" width="1" height="2" fill="#c8c8c8"/><rect x="262.0" y="24" width="1" height="2" fill="#c8c8c8"/><rect x="274.0" y="8" width="1" height="2" fill="#c8c8c8"/><rect x="274.0" y="24" width="1" height="2" fill="#c8c8c8"/><rect x="281.0" y="8" width="1" height="2" fill="#c8c8c8"/><rect x="281.0" y="24" width="1" height="2" fill="#c8c8c8"/><rect x="289.0" y="8" width="1" height="2" fill="#c8c8c8"/><rect x="289.0" y="24" width="1" height="2" fill="#c8c8c8"/><rect x="298.2" y="8" width="1" height="2" fill="#c8c8c8"/><rect x="298.2" y="24" width="1" height="2" fill="#c8c8c8"/><rect x="319.0" y="8" width="1" height="2" fill="#c8c8c8"/><rect x="319.0" y="24" width="1" height="2" fill="#c8c8c8"/><rect x="331.2" y="8" width="1" height="2" fill="#c8c8c8"/><rect x="331.2" y="24" width="1" height="2" fill="#c8c8c8"/><rect x="307.8" y="7" width="1" height="4" fill="#d8d8d8"/><rect x="307.8" y="22" width="1" height="4" fill="#d8d8d8"/><rect x="208" y="15" width="128" height="1" fill="#383838"/><rect x="208" y="16" width="128" height="1" fill="#272727"/><rect x="208" y="17" width="128" height="1" fill="#565656"/></svg>
<div style="left:288px;top:750px;width:7px;height:14px;background:linear-gradient(90deg,#b8b8b8,#f4f4f4 25%,#fff 50%,#f0f0f0 75%,#a8a8a8);border-radius:2px;box-shadow:0 0 1px #111"><div style="left:3px;top:2px;width:1px;height:10px;background:#6a6a6a"></div></div>
<span class="t" style="left:207px;top:767px;font-size:8px;line-height:8px;color:#b4b4b4;letter-spacing:-0.4px">-5.4</span>
<div class="sb" style="left:353px;top:746px;width:13px;height:9px;"></div>
<span class="t" style="left:369px;top:746px;font-size:8.5px;line-height:10px">M</span>
<div class="sb" style="left:353px;top:760px;width:13px;height:9px;"></div>
<span class="t" style="left:369px;top:760px;font-size:8.5px;line-height:10px">S</span>
<svg style="left:383px;top:741px" width="32" height="32" viewBox="-16 -16 32 32"><rect x="-8" y="10" width="1.0" height="1.0" fill="#d0d0d0"/><rect x="-13" y="5" width="1.0" height="1.0" fill="#d0d0d0"/><rect x="-14" y="-2" width="1.0" height="1.0" fill="#d0d0d0"/><rect x="-12" y="-8" width="1.0" height="1.0" fill="#d0d0d0"/><rect x="-7" y="-13" width="1.0" height="1.0" fill="#d0d0d0"/><rect x="-1" y="-14" width="1.0" height="1.0" fill="#d0d0d0"/><rect x="5" y="-13" width="1.0" height="1.0" fill="#d0d0d0"/><rect x="10" y="-8" width="1.0" height="1.0" fill="#d0d0d0"/><rect x="12" y="-2" width="1.0" height="1.0" fill="#d0d0d0"/><rect x="11" y="5" width="1.0" height="1.0" fill="#d0d0d0"/><rect x="6" y="10" width="1.0" height="1.0" fill="#d0d0d0"/><circle cx="-0.2" cy="0.6" r="9.9" fill="#1c1c1c"/></svg>
<div style="left:389.4px;top:747.9px;width:18.2px;height:18.2px;border-radius:50%;background:conic-gradient(from 0deg,#5a5a5a 0deg,#565656 40deg,#444 85deg,#343434 115deg,#484848 150deg,#5c5c5c 200deg,#4c4c4c 250deg,#363636 298deg,#4c4c4c 335deg,#5a5a5a 360deg);box-shadow:inset 0 0 2px 0 rgba(0,0,0,.5),0 0 0 0.8px #1e1e1e"></div>
<svg style="left:394px;top:747px" width="9" height="9" viewBox="0 0 9 9"><circle cx="4.50" cy="4.50" r="2.4" fill="#00d8e8"/></svg>
<span class="t" style="left:384px;top:743px;font-size:6.5px;line-height:8px">P</span>
<span class="t" style="left:390px;top:766.5px;width:20px;text-align:center;font-size:7px;line-height:8px;color:#c8c8c8">50</span>
<div class="dk" style="left:463px;top:744px;width:33px;height:13px;font-size:9.5px;line-height:11px;text-align:center;color:#ffffff;letter-spacing:-0.2px">Verb</div>
<div class="sb" style="left:470px;top:760px;width:19px;height:10.5px;"></div>
<svg style="left:490px;top:764px" width="6" height="3" viewBox="0 0 6 3"><path d="M0 0H6L3.0 3Z" fill="#c8c8c8"/></svg>
<div class="dk" style="left:498px;top:744px;width:33px;height:13px;font-size:9.5px;line-height:11px;text-align:center;color:#ffffff;letter-spacing:-0.2px"></div>
<div class="sb" style="left:505px;top:760px;width:19px;height:10.5px;"></div>
<svg style="left:525px;top:764px" width="6" height="3" viewBox="0 0 6 3"><path d="M0 0H6L3.0 3Z" fill="#c8c8c8"/></svg>
<div class="dk" style="left:533px;top:744px;width:33px;height:13px;font-size:9.5px;line-height:11px;text-align:center;color:#ffffff;letter-spacing:-0.2px"></div>
<div class="sb" style="left:540px;top:760px;width:19px;height:10.5px;"></div>
<svg style="left:560px;top:764px" width="6" height="3" viewBox="0 0 6 3"><path d="M0 0H6L3.0 3Z" fill="#c8c8c8"/></svg>
<div style="left:1549px;top:747px;width:6px;height:3px;background:#c0c0c0;border-bottom:1px solid #777"></div>
<div style="left:1px;top:776px;width:1558px;height:32px;background:linear-gradient(#444 0,#424242 6px,#3f3f3f 60%,#3d3d3d 100%)"></div>
<div class="sep" style="left:1px;top:774px;width:1558px;height:2px;"></div>
<span class="t b" style="left:17px;top:781px;font-size:12.5px;line-height:14px;color:#e4e4e4">Master</span>
<svg style="left:200px;top:774px" width="145" height="34" viewBox="200 0 145 34"><rect x="207.8" y="8" width="1" height="2" fill="#c8c8c8"/><rect x="207.8" y="24" width="1" height="2" fill="#c8c8c8"/><rect x="222.8" y="8" width="1" height="2" fill="#c8c8c8"/><rect x="222.8" y="24" width="1" height="2" fill="#c8c8c8"/><rect x="234.0" y="8" width="1" height="2" fill="#c8c8c8"/><rect x="234.0" y="24" width="1" height="2" fill="#c8c8c8"/><rect x="247.0" y="8" width="1" height="2" fill="#c8c8c8"/><rect x="247.0" y="24" width="1" height="2" fill="#c8c8c8"/><rect x="262.0" y="8" width="1" height="2" fill="#c8c8c8"/><rect x="262.0" y="24" width="1" height="2" fill="#c8c8c8"/><rect x="274.0" y="8" width="1" height="2" fill="#c8c8c8"/><rect x="274.0" y="24" width="1" height="2" fill="#c8c8c8"/><rect x="281.0" y="8" width="1" height="2" fill="#c8c8c8"/><rect x="281.0" y="24" width="1" height="2" fill="#c8c8c8"/><rect x="289.0" y="8" width="1" height="2" fill="#c8c8c8"/><rect x="289.0" y="24" width="1" height="2" fill="#c8c8c8"/><rect x="298.2" y="8" width="1" height="2" fill="#c8c8c8"/><rect x="298.2" y="24" width="1" height="2" fill="#c8c8c8"/><rect x="319.0" y="8" width="1" height="2" fill="#c8c8c8"/><rect x="319.0" y="24" width="1" height="2" fill="#c8c8c8"/><rect x="331.2" y="8" width="1" height="2" fill="#c8c8c8"/><rect x="331.2" y="24" width="1" height="2" fill="#c8c8c8"/><rect x="307.8" y="7" width="1" height="4" fill="#d8d8d8"/><rect x="307.8" y="22" width="1" height="4" fill="#d8d8d8"/><rect x="208" y="15" width="128" height="1" fill="#383838"/><rect x="208" y="16" width="128" height="1" fill="#272727"/><rect x="208" y="17" width="128" height="1" fill="#565656"/></svg>
<div style="left:305px;top:784px;width:7px;height:14px;background:linear-gradient(90deg,#b8b8b8,#f4f4f4 25%,#fff 50%,#f0f0f0 75%,#a8a8a8);border-radius:2px;box-shadow:0 0 1px #111"><div style="left:3px;top:2px;width:1px;height:10px;background:#6a6a6a"></div></div>
<span class="t" style="left:207px;top:801px;font-size:8px;line-height:8px;color:#b4b4b4;letter-spacing:-0.4px">0.0</span>
<div class="sb" style="left:353px;top:780px;width:13px;height:9px;"></div>
<span class="t" style="left:369px;top:780px;font-size:8.5px;line-height:10px">M</span>
<svg style="left:383px;top:775px" width="32" height="32" viewBox="-16 -16 32 32"><rect x="-8" y="10" width="1.0" height="1.0" fill="#d0d0d0"/><rect x="-13" y="5" width="1.0" height="1.0" fill="#d0d0d0"/><rect x="-14" y="-2" width="1.0" height="1.0" fill="#d0d0d0"/><rect x="-12" y="-8" width="1.0" height="1.0" fill="#d0d0d0"/><rect x="-7" y="-13" width="1.0" height="1.0" fill="#d0d0d0"/><rect x="-1" y="-14" width="1.0" height="1.0" fill="#d0d0d0"/><rect x="5" y="-13" width="1.0" height="1.0" fill="#d0d0d0"/><rect x="10" y="-8" width="1.0" height="1.0" fill="#d0d0d0"/><rect x="12" y="-2" width="1.0" height="1.0" fill="#d0d0d0"/><rect x="11" y="5" width="1.0" height="1.0" fill="#d0d0d0"/><rect x="6" y="10" width="1.0" height="1.0" fill="#d0d0d0"/><circle cx="-0.2" cy="0.6" r="9.9" fill="#1c1c1c"/></svg>
<div style="left:389.4px;top:781.9px;width:18.2px;height:18.2px;border-radius:50%;background:conic-gradient(from 0deg,#5a5a5a 0deg,#565656 40deg,#444 85deg,#343434 115deg,#484848 150deg,#5c5c5c 200deg,#4c4c4c 250deg,#363636 298deg,#4c4c4c 335deg,#5a5a5a 360deg);box-shadow:inset 0 0 2px 0 rgba(0,0,0,.5),0 0 0 0.8px #1e1e1e"></div>
<svg style="left:394px;top:781px" width="9" height="9" viewBox="0 0 9 9"><circle cx="4.50" cy="4.50" r="2.4" fill="#00d8e8"/></svg>
<span class="t" style="left:384px;top:777px;font-size:6.5px;line-height:8px">P</span>
<span class="t" style="left:390px;top:800.5px;width:20px;text-align:center;font-size:7px;line-height:8px;color:#c8c8c8">50</span>
<div class="sb" style="left:431px;top:787px;width:10px;height:8px;"></div>
<span class="t" style="left:421px;top:798px;width:30px;text-align:center;font-size:8px;line-height:9px">Mono</span>
<div class="dk" style="left:463px;top:778px;width:33px;height:13px;font-size:9.5px;line-height:11px;text-align:center;color:#ffffff;letter-spacing:-0.2px">Comp</div>
<div class="sb" style="left:470px;top:794px;width:19px;height:10.5px;"></div>
<svg style="left:490px;top:798px" width="6" height="3" viewBox="0 0 6 3"><path d="M0 0H6L3.0 3Z" fill="#c8c8c8"/></svg>
<div class="dk" style="left:498px;top:778px;width:33px;height:13px;font-size:9.5px;line-height:11px;text-align:center;color:#ffffff;letter-spacing:-0.2px">EQ</div>
<div class="sb" style="left:505px;top:794px;width:19px;height:10.5px;"></div>
<svg style="left:525px;top:798px" width="6" height="3" viewBox="0 0 6 3"><path d="M0 0H6L3.0 3Z" fill="#c8c8c8"/></svg>
<div class="dk" style="left:533px;top:778px;width:33px;height:13px;font-size:9.5px;line-height:11px;text-align:center;color:#ffffff;letter-spacing:-0.2px">Lim</div>
<div class="sb" style="left:540px;top:794px;width:19px;height:10.5px;"></div>
<svg style="left:560px;top:798px" width="6" height="3" viewBox="0 0 6 3"><path d="M0 0H6L3.0 3Z" fill="#c8c8c8"/></svg>
<div class="btn" style="left:1518px;top:780px;width:24px;height:24px;font-size:8.5px;line-height:22px;letter-spacing:-0.5px;border:1px solid #787878">View</div>
<div style="left:1549px;top:781px;width:6px;height:3px;background:#c0c0c0;border-bottom:1px solid #777"></div>
<div class="sep" style="left:1px;top:808px;width:1558px;height:2px;"></div>
<div style="left:732px;top:171px;width:779px;height:159px;background:#383838;border-radius:4px"></div>
<svg style="left:808px;top:171px" width="702" height="12" viewBox="808 0 702 12"><rect x="818" y="6" width="1" height="1" fill="#e0e0e0"/><rect x="904" y="6" width="1" height="1" fill="#e0e0e0"/><rect x="948" y="6" width="1" height="1" fill="#e0e0e0"/><rect x="991" y="6" width="1" height="1" fill="#e0e0e0"/><rect x="1077" y="6" width="1" height="1" fill="#e0e0e0"/><rect x="1120" y="6" width="1" height="1" fill="#e0e0e0"/><rect x="1163" y="6" width="1" height="1" fill="#e0e0e0"/><rect x="1249" y="6" width="1" height="1" fill="#e0e0e0"/><rect x="1292" y="6" width="1" height="1" fill="#e0e0e0"/><rect x="1335" y="6" width="1" height="1" fill="#e0e0e0"/><rect x="1421" y="6" width="1" height="1" fill="#e0e0e0"/><rect x="1464" y="6" width="1" height="1" fill="#e0e0e0"/><rect x="1507" y="6" width="1" height="1" fill="#e0e0e0"/></svg>
<span class="t" style="left:852px;top:172px;width:20px;text-align:center;font-size:9px;line-height:10px;color:#fff">1</span>
<span class="t" style="left:1025px;top:172px;width:20px;text-align:center;font-size:9px;line-height:10px;color:#fff">2</span>
<span class="t" style="left:1197px;top:172px;width:20px;text-align:center;font-size:9px;line-height:10px;color:#fff">3</span>
<span class="t" style="left:1370px;top:172px;width:20px;text-align:center;font-size:9px;line-height:10px;color:#fff;font-weight:bold">4</span>
<div style="left:1358px;top:173px;width:10px;height:9px;background:#fff"><div style="left:4px;top:0;width:1px;height:9px;background:#333"></div></div>
<svg style="left:737px;top:184px" width="8" height="18" viewBox="0 0 8 18" fill="#8c8c8c"><rect x="0.5" y="3" width="7" height="1.6"/><rect x="3.2" y="0.4" width="1.6" height="7"/><rect x="0.5" y="13.4" width="6" height="1.6"/></svg>
<svg style="left:808px;top:182px" width="697" height="130" viewBox="808 182 697 130"><rect x="808.5" y="182.5" width="696" height="129" fill="#313131" stroke="#4a4a4a"/><rect x="818" y="183" width="1" height="128" fill="#606060"/><path d="M839.5 184V309" stroke="#585858" stroke-width="1" stroke-dasharray="4 2.2"/><rect x="861" y="183" width="1" height="128" fill="#c4c4c4"/><path d="M883.5 184V309" stroke="#585858" stroke-width="1" stroke-dasharray="4 2.2"/><rect x="904" y="183" width="1" height="128" fill="#606060"/><path d="M926.5 184V309" stroke="#585858" stroke-width="1" stroke-dasharray="4 2.2"/><rect x="948" y="183" width="1" height="128" fill="#606060"/><path d="M969.5 184V309" stroke="#585858" stroke-width="1" stroke-dasharray="4 2.2"/><rect x="991" y="183" width="1" height="128" fill="#606060"/><path d="M1012.5 184V309" stroke="#585858" stroke-width="1" stroke-dasharray="4 2.2"/><rect x="1034" y="183" width="1" height="128" fill="#c4c4c4"/><path d="M1056.5 184V309" stroke="#585858" stroke-width="1" stroke-dasharray="4 2.2"/><rect x="1077" y="183" width="1" height="128" fill="#606060"/><path d="M1099.5 184V309" stroke="#585858" stroke-width="1" stroke-dasharray="4 2.2"/><rect x="1120" y="183" width="1" height="128" fill="#606060"/><path d="M1142.5 184V309" stroke="#585858" stroke-width="1" stroke-dasharray="4 2.2"/><rect x="1163" y="183" width="1" height="128" fill="#606060"/><path d="M1185.5 184V309" stroke="#585858" stroke-width="1" stroke-dasharray="4 2.2"/><rect x="1206" y="183" width="1" height="128" fill="#c4c4c4"/><path d="M1228.5 184V309" stroke="#585858" stroke-width="1" stroke-dasharray="4 2.2"/><rect x="1249" y="183" width="1" height="128" fill="#606060"/><path d="M1271.5 184V309" stroke="#585858" stroke-width="1" stroke-dasharray="4 2.2"/><rect x="1292" y="183" width="1" height="128" fill="#606060"/><path d="M1314.5 184V309" stroke="#585858" stroke-width="1" stroke-dasharray="4 2.2"/><rect x="1335" y="183" width="1" height="128" fill="#606060"/><path d="M1357.5 184V309" stroke="#585858" stroke-width="1" stroke-dasharray="4 2.2"/><rect x="1378" y="183" width="1" height="128" fill="#c4c4c4"/><path d="M1400.5 184V309" stroke="#585858" stroke-width="1" stroke-dasharray="4 2.2"/><rect x="1421" y="183" width="1" height="128" fill="#606060"/><path d="M1443.5 184V309" stroke="#585858" stroke-width="1" stroke-dasharray="4 2.2"/><rect x="1464" y="183" width="1" height="128" fill="#606060"/><path d="M1486.5 184V309" stroke="#585858" stroke-width="1" stroke-dasharray="4 2.2"/><path d="M808,246.9V246.9h1V240.2h1V240.8h1V239.5h1V241.4h1V241.9h1V240.9h1V241.2h1V241.6h1V241.2h1V241.6h1V242.1h1V241.5h1V241.6h1V242.0h1V242.6h1V243.3h1V244.3h1V245.2h1V246.6h1V246.9h1V246.9h1V246.9h1V246.9h1V246.9h1V246.9h1V246.9h1V246.9h1V246.9h1V246.9h1V246.9h1V246.9h1V246.9h1V246.9h1V246.9h1V246.9h1V246.9h1V246.9h1V246.9h1V246.9h1V246.9h1V246.9h1V246.9h1V246.9h1V246.9h1V246.9h1V246.9h1V246.9h1V246.9h1V246.9h1V246.9h1V246.9h1V246.9h1V246.9h1V246.9h1V246.9h1V246.9h1V246.5h1V234.5h1V236.0h1V236.9h1V238.1h1V236.2h1V237.9h1V239.1h1V236.6h1V239.2h1V236.6h1V236.8h1V238.0h1V237.1h1V238.4h1V236.8h1V239.8h1V240.6h1V243.0h1V245.4h1V245.7h1V246.7h1V246.9h1V246.4h1V246.9h1V244.1h1V237.8h1V237.7h1V236.9h1V235.5h1V237.5h1V237.7h1V238.4h1V235.3h1V236.6h1V237.3h1V236.3h1V238.2h1V237.4h1V239.2h1V244.0h1V234.2h1V231.5h1V226.8h1V231.7h1V229.2h1V233.5h1V229.6h1V230.6h1V230.6h1V233.7h1V233.5h1V236.3h1V234.5h1V237.7h1V241.3h1V244.7h1V246.9h1V246.9h1V246.9h1V246.9h1V246.9h1V246.9h1V246.9h1V246.9h1V246.9h1V246.9h1V233.8h1V230.2h1V232.3h1V230.4h1V229.2h1V233.9h1V234.8h1V235.1h1V237.2h1V236.6h1V239.0h1V238.5h1V240.3h1V239.7h1V240.5h1V240.7h1V237.9h1V231.1h1V232.2h1V236.5h1V235.5h1V237.4h1V237.0h1V236.5h1V238.7h1V240.0h1V237.6h1V239.1h1V237.6h1V236.0h1V236.9h1V236.9h1V238.7h1V238.3h1V239.8h1V238.9h1V239.4h1V241.0h1V239.2h1V238.3h1V240.3h1V237.8h1V239.8h1V237.2h1V239.2h1V236.8h1V238.1h1V239.7h1V240.6h1V240.9h1V241.0h1V240.5h1V240.3h1V240.7h1V241.2h1V241.3h1V240.6h1V241.1h1V241.7h1V240.9h1V242.3h1V241.5h1V242.5h1V242.3h1V242.6h1V243.1h1V244.5h1V245.4h1V246.4h1V246.9h1V246.9h1V246.9h1V246.9h1V246.9h1V246.9h1V246.9h1V246.9h1V246.9h1V246.9h1V246.9h1V246.9h1V246.9h1V246.9h1V246.9h1V246.9h1V246.9h1V246.9h1V246.9h1V246.9h1V246.9h1V246.9h1V246.9h1V246.9h1V246.9h1V246.9h1V246.9h1V246.9h1V246.9h1V246.9h1V246.9h1V246.9h1V246.9h1V246.9h1V246.9h1V234.6h1V234.9h1V235.8h1V235.6h1V237.1h1V237.8h1V239.0h1V237.5h1V238.4h1V236.0h1V236.3h1V239.6h1V238.4h1V240.4h1V240.4h1V240.9h1V242.8h1V244.4h1V246.9h1V246.9h1V246.9h1V246.9h1V246.9h1V246.9h1V246.9h1V236.1h1V233.4h1V236.2h1V235.0h1V233.5h1V233.4h1V235.8h1V232.0h1V235.4h1V235.7h1V233.7h1V236.3h1V233.3h1V234.4h1V239.3h1V243.9h1V240.4h1V226.9h1V232.4h1V228.8h1V230.3h1V231.3h1V231.7h1V233.4h1V236.3h1V235.1h1V235.3h1V233.4h1V235.3h1V235.2h1V234.2h1V239.0h1V243.0h1V245.4h1V246.9h1V246.9h1V246.9h1V246.9h1V246.9h1V246.9h1V246.9h1V246.9h1V246.9h1V239.5h1V229.0h1V231.2h1V231.2h1V229.9h1V233.6h1V230.4h1V232.6h1V232.8h1V235.7h1V235.7h1V235.9h1V235.7h1V236.7h1V237.2h1V239.4h1V237.9h1V236.6h1V229.6h1V232.4h1V232.1h1V233.4h1V236.3h1V234.7h1V237.1h1V235.5h1V238.7h1V236.4h1V239.1h1V238.9h1V237.8h1V237.9h1V240.5h1V239.5h1V239.0h1V239.4h1V239.8h1V239.1h1V240.3h1V239.6h1V240.8h1V240.3h1V239.6h1V238.6h1V235.5h1V234.9h1V234.2h1V234.9h1V237.7h1V238.2h1V238.7h1V238.9h1V239.1h1V239.9h1V240.4h1V238.9h1V240.2h1V240.4h1V240.5h1V241.4h1V240.4h1V242.1h1V243.2h1V243.9h1V244.0h1V243.9h1V244.4h1V244.7h1V244.4h1V244.9h1V245.0h1V244.5h1V244.0h1V243.6h1V243.2h1V244.2h1V245.4h1V246.9h1V246.9h1V246.9h1V246.9h1V246.9h1V246.9h1V246.9h1V246.9h1V246.9h1V246.9h1V246.9h1V246.9h1V246.9h1V246.9h1V246.9h1V246.9h1V246.9h1V246.9h1V246.9h1V246.9h1V246.9h1V246.9h1V246.9h1V246.9h1V243.4h1V234.7h1V233.7h1V237.8h1V237.1h1V239.0h1V237.0h1V235.8h1V235.4h1V237.1h1V235.2h1V235.2h1V237.5h1V238.7h1V238.4h1V237.8h1V238.4h1V240.4h1V238.3h1V237.8h1V239.2h1V237.2h1V238.2h1V238.0h1V238.8h1V239.2h1V239.1h1V238.2h1V231.1h1V226.6h1V227.0h1V228.1h1V227.2h1V231.7h1V230.0h1V230.1h1V231.9h1V230.6h1V229.1h1V230.1h1V230.7h1V231.2h1V230.2h1V230.8h1V230.0h1V226.2h1V227.8h1V228.8h1V231.9h1V232.1h1V235.3h1V234.8h1V234.8h1V232.1h1V232.9h1V229.0h1V229.2h1V230.5h1V234.3h1V231.3h1V233.8h1V234.9h1V234.3h1V236.3h1V236.0h1V236.8h1V236.6h1V235.5h1V235.6h1V229.5h1V230.1h1V228.6h1V227.4h1V228.5h1V230.6h1V227.8h1V230.5h1V233.5h1V232.3h1V236.0h1V237.2h1V236.0h1V238.4h1V236.7h1V237.5h1V236.3h1V234.4h1V234.1h1V235.6h1V235.0h1V234.0h1V236.5h1V234.1h1V237.3h1V236.3h1V238.0h1V238.1h1V237.4h1V237.8h1V239.2h1V238.0h1V238.8h1V239.6h1V240.6h1V240.5h1V241.2h1V241.5h1V238.8h1V236.2h1V232.5h1V232.6h1V231.1h1V231.3h1V229.6h1V229.6h1V227.3h1V228.5h1V231.0h1V227.5h1V231.2h1V230.0h1V232.8h1V231.4h1V233.0h1V228.4h1V226.3h1V225.2h1V227.4h1V227.1h1V231.3h1V228.7h1V233.2h1V231.8h1V230.3h1V230.4h1V230.6h1V229.3h1V234.8h1V232.2h1V233.6h1V235.3h1V234.9h1V236.4h1V236.9h1V236.8h1V238.5h1V237.7h1V239.6h1V238.2h1V237.6h1V235.6h1V231.1h1V231.2h1V232.0h1V231.9h1V230.9h1V230.3h1V226.8h1V230.6h1V228.9h1V224.2h1V225.5h1V224.8h1V231.9h1V231.9h1V230.2h1V224.7h1V227.0h1V225.7h1V230.3h1V231.7h1V232.4h1V236.7h1V238.7h1V245.1h1V245.7h1V232.9h1V233.3h1V233.8h1V234.8h1V235.3h1V237.6h1V238.2h1V236.6h1V235.8h1V236.4h1V237.6h1V235.8h1V236.7h1V236.1h1V237.6h1V238.2h1V240.9h1V241.5h1V243.8h1V245.6h1V246.3h1V246.4h1V246.5h1V246.6h1V246.7h1V244.0h1V237.3h1V237.6h1V237.9h1V237.2h1V237.1h1V236.5h1V236.6h1V238.0h1V236.8h1V238.3h1V237.4h1V239.2h1V238.9h1V237.7h1V238.5h1V228.4h1V229.5h1V229.3h1V229.7h1V231.8h1V232.8h1V230.4h1V233.4h1V232.8h1V232.6h1V232.1h1V234.5h1V235.4h1V239.3h1V240.9h1V244.5h1V246.9h1V246.9h1V246.9h1V246.9h1V246.9h1V246.9h1V246.9h1V246.9h1V246.9h1V246.9h1V236.9h1V230.9h1V230.9h1V232.3h1V232.0h1V233.6h1V233.5h1V237.0h1V235.9h1V237.2h1V238.9h1V237.8h1V240.5h1V241.2h1V241.5h1V240.9h1V234.8h1V231.2h1V231.4h1V234.7h1V234.4h1V236.2h1V237.4h1V237.0h1V236.0h1V236.4h1V236.5h1V238.0h1V237.4h1V238.2h1V237.7h1V239.2h1V238.7h1V239.8h1V239.0h1V239.5h1V240.5h1V241.6h1V240.2h1V239.8h1V240.3h1V239.0h1V238.7h1V239.0h1V239.1h1V236.8h1V237.1h1V239.4h1V238.3h1V239.6h1V239.3h1V239.0h1V239.2h1V240.8h1V240.0h1V240.4h1V255.9h-1V256.2h-1V255.0h-1V255.2h-1V257.0h-1V257.1h-1V257.5h-1V259.0h-1V259.2h-1V260.0h-1V257.8h-1V261.5h-1V259.9h-1V259.0h-1V259.0h-1V259.9h-1V259.8h-1V256.7h-1V259.2h-1V257.6h-1V256.7h-1V257.6h-1V256.3h-1V258.1h-1V256.7h-1V257.6h-1V258.3h-1V257.7h-1V256.7h-1V259.8h-1V258.6h-1V261.7h-1V262.2h-1V259.3h-1V262.3h-1V263.7h-1V262.5h-1V263.2h-1V260.9h-1V257.0h-1V255.4h-1V256.2h-1V258.4h-1V258.9h-1V260.3h-1V262.5h-1V261.1h-1V260.8h-1V263.5h-1V264.3h-1V263.7h-1V265.6h-1V266.8h-1V268.0h-1V268.4h-1V263.0h-1V248.1h-1V248.1h-1V248.1h-1V248.1h-1V248.1h-1V248.1h-1V248.1h-1V248.1h-1V248.1h-1V248.1h-1V250.5h-1V255.1h-1V258.6h-1V264.8h-1V264.1h-1V263.8h-1V264.4h-1V262.1h-1V262.0h-1V264.2h-1V261.1h-1V264.8h-1V263.0h-1V266.1h-1V263.8h-1V268.3h-1V255.6h-1V254.5h-1V255.4h-1V254.5h-1V255.6h-1V256.5h-1V257.1h-1V257.3h-1V257.6h-1V256.6h-1V258.2h-1V256.2h-1V258.4h-1V256.8h-1V261.1h-1V251.5h-1V248.3h-1V248.4h-1V248.5h-1V248.5h-1V248.7h-1V250.5h-1V252.2h-1V254.2h-1V255.2h-1V255.8h-1V257.3h-1V257.7h-1V257.8h-1V260.0h-1V260.8h-1V259.4h-1V258.7h-1V261.6h-1V259.6h-1V262.5h-1V260.7h-1V260.6h-1V261.8h-1V261.7h-1V263.0h-1V249.4h-1V250.0h-1V255.7h-1V261.5h-1V266.3h-1V268.7h-1V271.4h-1V269.3h-1V264.8h-1V263.2h-1V266.9h-1V264.7h-1V266.3h-1V267.2h-1V267.7h-1V261.8h-1V263.5h-1V262.2h-1V265.1h-1V265.5h-1V266.2h-1V267.1h-1V264.8h-1V265.0h-1V268.8h-1V261.4h-1V260.2h-1V256.0h-1V256.0h-1V256.6h-1V259.4h-1V259.3h-1V259.8h-1V260.4h-1V259.1h-1V263.2h-1V262.6h-1V264.1h-1V265.5h-1V264.5h-1V266.8h-1V263.0h-1V264.4h-1V267.6h-1V268.7h-1V264.2h-1V264.4h-1V268.6h-1V266.5h-1V273.6h-1V270.0h-1V269.5h-1V263.6h-1V263.6h-1V265.3h-1V263.2h-1V263.3h-1V261.2h-1V263.8h-1V263.7h-1V263.7h-1V262.9h-1V263.6h-1V266.0h-1V262.4h-1V262.6h-1V261.4h-1V260.7h-1V257.0h-1V253.9h-1V253.9h-1V255.3h-1V254.0h-1V254.7h-1V254.9h-1V255.3h-1V256.3h-1V257.3h-1V257.1h-1V257.7h-1V260.2h-1V259.7h-1V260.4h-1V260.8h-1V262.7h-1V262.7h-1V263.2h-1V262.0h-1V266.1h-1V266.3h-1V266.7h-1V262.8h-1V256.9h-1V256.4h-1V260.6h-1V259.3h-1V260.5h-1V261.1h-1V263.3h-1V262.7h-1V264.9h-1V264.1h-1V265.1h-1V264.4h-1V263.2h-1V267.4h-1V263.8h-1V268.9h-1V263.6h-1V264.0h-1V264.1h-1V264.0h-1V262.0h-1V260.2h-1V261.4h-1V263.5h-1V263.7h-1V263.0h-1V262.7h-1V264.0h-1V263.3h-1V262.8h-1V264.2h-1V263.1h-1V266.5h-1V268.3h-1V265.4h-1V265.0h-1V265.0h-1V269.4h-1V271.7h-1V271.2h-1V266.2h-1V262.8h-1V262.5h-1V261.3h-1V263.3h-1V262.5h-1V262.5h-1V258.8h-1V260.1h-1V263.0h-1V261.8h-1V260.8h-1V262.6h-1V264.4h-1V264.0h-1V259.9h-1V256.4h-1V256.9h-1V254.9h-1V255.6h-1V255.3h-1V254.0h-1V254.1h-1V253.2h-1V253.8h-1V255.7h-1V254.9h-1V256.7h-1V256.1h-1V256.3h-1V259.7h-1V259.3h-1V258.6h-1V261.4h-1V260.6h-1V262.9h-1V263.1h-1V262.9h-1V262.6h-1V265.1h-1V265.7h-1V263.4h-1V270.0h-1V255.9h-1V248.1h-1V248.1h-1V248.1h-1V248.1h-1V248.1h-1V248.1h-1V248.1h-1V248.1h-1V248.1h-1V248.1h-1V248.1h-1V248.1h-1V248.1h-1V248.1h-1V248.1h-1V248.1h-1V248.1h-1V248.1h-1V248.1h-1V248.1h-1V248.1h-1V248.1h-1V248.1h-1V248.9h-1V252.8h-1V251.7h-1V252.1h-1V251.8h-1V251.6h-1V251.8h-1V251.8h-1V251.6h-1V251.7h-1V251.0h-1V251.6h-1V251.3h-1V251.9h-1V251.7h-1V253.1h-1V253.5h-1V253.4h-1V254.2h-1V253.9h-1V255.2h-1V256.9h-1V256.5h-1V259.4h-1V260.5h-1V258.9h-1V259.5h-1V258.8h-1V259.0h-1V260.2h-1V261.6h-1V263.5h-1V263.8h-1V261.8h-1V259.4h-1V256.9h-1V256.7h-1V258.6h-1V256.9h-1V259.0h-1V258.6h-1V258.4h-1V260.8h-1V260.7h-1V258.3h-1V258.6h-1V262.4h-1V257.4h-1V260.3h-1V259.6h-1V259.0h-1V261.5h-1V261.3h-1V263.8h-1V262.1h-1V261.9h-1V265.0h-1V262.9h-1V263.2h-1V264.1h-1V263.8h-1V256.8h-1V256.6h-1V256.4h-1V257.9h-1V257.4h-1V258.9h-1V258.1h-1V260.1h-1V261.4h-1V260.5h-1V262.7h-1V262.8h-1V265.9h-1V266.2h-1V266.2h-1V263.0h-1V253.4h-1V248.1h-1V248.1h-1V248.1h-1V248.1h-1V248.1h-1V248.1h-1V248.1h-1V248.1h-1V248.1h-1V249.6h-1V251.8h-1V256.2h-1V258.5h-1V258.6h-1V257.7h-1V257.3h-1V260.2h-1V260.3h-1V259.7h-1V262.3h-1V260.5h-1V265.3h-1V262.5h-1V265.9h-1V265.6h-1V265.9h-1V257.7h-1V250.5h-1V255.9h-1V257.3h-1V257.8h-1V258.7h-1V260.9h-1V258.8h-1V262.0h-1V259.2h-1V260.1h-1V260.5h-1V263.4h-1V263.5h-1V264.6h-1V263.1h-1V263.4h-1V248.1h-1V248.1h-1V248.1h-1V248.1h-1V248.1h-1V248.1h-1V248.1h-1V253.6h-1V255.1h-1V256.3h-1V258.5h-1V257.8h-1V256.9h-1V260.1h-1V260.6h-1V260.7h-1V258.8h-1V261.4h-1V262.4h-1V264.1h-1V263.4h-1V264.8h-1V262.8h-1V264.8h-1V268.1h-1V248.4h-1V248.1h-1V248.1h-1V248.1h-1V248.1h-1V248.1h-1V248.1h-1V248.1h-1V248.1h-1V248.1h-1V248.1h-1V248.1h-1V248.1h-1V248.1h-1V248.1h-1V248.1h-1V248.1h-1V248.1h-1V248.1h-1V248.1h-1V248.1h-1V248.1h-1V248.1h-1V248.1h-1V248.1h-1V248.1h-1V248.1h-1V248.1h-1V248.1h-1V248.1h-1V248.1h-1V248.1h-1V248.1h-1V248.1h-1V248.1h-1V250.1h-1V251.6h-1V251.9h-1V252.4h-1V252.8h-1V253.2h-1V253.1h-1V252.6h-1V252.9h-1V253.0h-1V255.1h-1V255.5h-1V254.6h-1V254.5h-1V255.1h-1V256.9h-1V257.4h-1V257.6h-1V258.7h-1V256.7h-1V256.9h-1V258.9h-1V259.3h-1V258.1h-1V258.5h-1V263.9h-1V258.9h-1V259.9h-1V261.0h-1V259.6h-1V259.4h-1V257.7h-1V257.9h-1V258.1h-1V258.6h-1V257.4h-1V258.1h-1V257.1h-1V258.8h-1V257.3h-1V260.3h-1V259.6h-1V260.8h-1V261.8h-1V261.6h-1V259.7h-1V259.8h-1V262.2h-1V261.0h-1V261.0h-1V262.6h-1V263.5h-1V263.2h-1V259.2h-1V259.1h-1V261.1h-1V261.3h-1V260.6h-1V261.5h-1V265.2h-1V262.1h-1V262.3h-1V266.4h-1V264.9h-1V264.5h-1V267.2h-1V268.9h-1V271.7h-1V262.2h-1V248.1h-1V248.1h-1V248.1h-1V248.1h-1V248.1h-1V248.1h-1V248.1h-1V248.1h-1V248.1h-1V248.1h-1V251.0h-1V256.4h-1V262.5h-1V261.8h-1V261.3h-1V263.2h-1V263.5h-1V261.3h-1V265.1h-1V262.3h-1V270.0h-1V267.8h-1V266.9h-1V267.6h-1V269.5h-1V261.4h-1V250.6h-1V252.9h-1V255.8h-1V255.8h-1V256.6h-1V254.9h-1V256.8h-1V256.0h-1V257.6h-1V257.7h-1V256.2h-1V258.7h-1V256.8h-1V259.1h-1V259.7h-1V252.0h-1V248.1h-1V248.6h-1V248.1h-1V248.1h-1V248.9h-1V251.3h-1V253.8h-1V254.0h-1V257.8h-1V257.4h-1V257.0h-1V260.8h-1V259.7h-1V261.8h-1V260.3h-1V259.9h-1V261.6h-1V261.4h-1V259.6h-1V261.8h-1V260.0h-1V262.5h-1V262.1h-1V261.9h-1V248.6h-1V248.1h-1V248.1h-1V248.1h-1V248.1h-1V248.1h-1V248.1h-1V248.1h-1V248.1h-1V248.1h-1V248.1h-1V248.1h-1V248.1h-1V248.1h-1V248.1h-1V248.1h-1V248.1h-1V248.1h-1V248.1h-1V248.1h-1V248.1h-1V248.1h-1V248.1h-1V248.1h-1V248.1h-1V248.1h-1V248.1h-1V248.1h-1V248.1h-1V248.1h-1V248.1h-1V248.1h-1V248.1h-1V248.1h-1V248.1h-1V248.1h-1V248.1h-1V248.1h-1V249.6h-1V252.1h-1V252.5h-1V253.7h-1V252.5h-1V252.7h-1V252.9h-1V253.0h-1V252.8h-1V254.0h-1V253.7h-1V255.5h-1V254.8h-1V256.9h-1V255.5h-1V257.0h-1V258.2h-1V256.5h-1V257.0h-1V248.1h-1Z" fill="#6adcff"/><rect x="1362.0" y="182" width="1.2" height="129" fill="#ffffa8"/></svg>
<div class="ebtn" style="left:809px;top:313px;width:42px;height:14px;">UNDO</div>
<div class="ebtn" style="left:853px;top:313px;width:42px;height:14px;">REDO</div>
<div class="ebtn" style="left:908px;top:313px;width:42px;height:14px;">EDIT</div>
<div class="ebtn" style="left:952px;top:313px;width:42px;height:14px;">DELETE</div>
<div class="ebtn" style="left:1007px;top:313px;width:42px;height:14px;">COPY</div>
<div class="ebtn" style="left:1051px;top:313px;width:42px;height:14px;">PASTE</div>
<div class="ebtn on" style="left:1106px;top:313px;width:42px;height:14px;">SEL ALL</div>
<div class="ebtn on" style="left:1150px;top:313px;width:42px;height:14px;text-align:left;padding-left:2px">MORE</div>
<svg style="left:1181px;top:318px" width="7" height="4" viewBox="0 0 7 4"><path d="M0 0H7L3.5 4Z" fill="#fff"/></svg>
<div class="btn" style="left:1518px;top:172px;width:24px;height:24px;font-size:8.5px;line-height:22px;letter-spacing:-0.5px;border:1px solid #787878">EDIT</div>
<svg style="left:1546px;top:324px" width="10" height="9" viewBox="0 0 10 9" fill="#c8c8c8"><path d="M5 0L8 3H2Z"/><rect x="0" y="4" width="10" height="1.4"/><path d="M5 9L8 6.4H2Z"/></svg>
<div style="left:732px;top:339px;width:779px;height:159px;background:#383838;border-radius:4px"></div>
<svg style="left:808px;top:339px" width="702" height="12" viewBox="808 0 702 12"><rect x="818" y="6" width="1" height="1" fill="#e0e0e0"/><rect x="904" y="6" width="1" height="1" fill="#e0e0e0"/><rect x="948" y="6" width="1" height="1" fill="#e0e0e0"/><rect x="991" y="6" width="1" height="1" fill="#e0e0e0"/><rect x="1077" y="6" width="1" height="1" fill="#e0e0e0"/><rect x="1120" y="6" width="1" height="1" fill="#e0e0e0"/><rect x="1163" y="6" width="1" height="1" fill="#e0e0e0"/><rect x="1249" y="6" width="1" height="1" fill="#e0e0e0"/><rect x="1292" y="6" width="1" height="1" fill="#e0e0e0"/><rect x="1335" y="6" width="1" height="1" fill="#e0e0e0"/><rect x="1421" y="6" width="1" height="1" fill="#e0e0e0"/><rect x="1464" y="6" width="1" height="1" fill="#e0e0e0"/><rect x="1507" y="6" width="1" height="1" fill="#e0e0e0"/></svg>
<span class="t" style="left:852px;top:340px;width:20px;text-align:center;font-size:9px;line-height:10px;color:#fff">1</span>
<span class="t" style="left:1025px;top:340px;width:20px;text-align:center;font-size:9px;line-height:10px;color:#fff">2</span>
<span class="t" style="left:1197px;top:340px;width:20px;text-align:center;font-size:9px;line-height:10px;color:#fff">3</span>
<span class="t" style="left:1370px;top:340px;width:20px;text-align:center;font-size:9px;line-height:10px;color:#fff;font-weight:bold">4</span>
<div style="left:1358px;top:341px;width:10px;height:9px;background:#fff"><div style="left:4px;top:0;width:1px;height:9px;background:#333"></div></div>
<svg style="left:732px;top:351px" width="778" height="146" viewBox="732 351 778 146"><rect x="735" y="399.0" width="73" height="1" fill="#424242"/><rect x="735" y="407.0" width="73" height="1" fill="#424242"/><rect x="735" y="415.0" width="73" height="1" fill="#424242"/><rect x="735" y="423.0" width="73" height="1" fill="#424242"/><rect x="735" y="431.0" width="73" height="1" fill="#424242"/><g stroke="#474747" stroke-width="1" fill="none"><path d="M769.5 402V421M773.5 401V420"/><path d="M768 408L775.5 406.4M768 415.6L775.5 414" stroke-width="1.6"/><path d="M770 428L795 403"/><path d="M790.5 412V427.5C794 426 795.6 421.6 790.5 421"/></g><rect x="808" y="351" width="691" height="128" fill="#fff"/><rect x="809" y="352" width="690" height="127" fill="#f0f0f0"/><rect x="808" y="398.9" width="691" height="1.2" fill="#484848"/><rect x="808" y="406.9" width="691" height="1.2" fill="#484848"/><rect x="808" y="414.9" width="691" height="1.2" fill="#484848"/><rect x="808" y="422.9" width="691" height="1.2" fill="#484848"/><rect x="808" y="430.9" width="691" height="1.2" fill="#484848"/><rect x="814" y="412" width="8" height="3.6" fill="#3c3c3c"/><rect x="860.9" y="399" width="2.1" height="33" fill="#3c3c3c"/><ellipse cx="876.6999999999999" cy="395.5" rx="4.7" ry="3.25" transform="rotate(-24 876.6999999999999 395.5)" fill="#3c3c3c"/><ellipse cx="876.6999999999999" cy="403.5" rx="4.7" ry="3.25" transform="rotate(-24 876.6999999999999 403.5)" fill="#3c3c3c"/><ellipse cx="876.6999999999999" cy="411.5" rx="4.7" ry="3.25" transform="rotate(-24 876.6999999999999 411.5)" fill="#3c3c3c"/><rect x="871.8" y="395.5" width="1.1" height="44.5" fill="#3c3c3c"/><path d="M872.3 440C873.5 433.5 879.3 431 881.0 426C881.4 423.5 880.6999999999999 421.4 879.5 420.4C880.9 425.5 876.9 431 872.3 436.5Z" fill="#3c3c3c" stroke="#3c3c3c" stroke-width="0.5"/><ellipse cx="929.9" cy="395.5" rx="4.7" ry="3.25" transform="rotate(-24 929.9 395.5)" fill="#3c3c3c"/><ellipse cx="929.9" cy="403.5" rx="4.7" ry="3.25" transform="rotate(-24 929.9 403.5)" fill="#3c3c3c"/><ellipse cx="929.9" cy="411.5" rx="4.7" ry="3.25" transform="rotate(-24 929.9 411.5)" fill="#3c3c3c"/><rect x="925.0" y="395.5" width="1.1" height="44.5" fill="#3c3c3c"/><path d="M925.5 440C926.7 433.5 932.5 431 934.2 426C934.6 423.5 933.9 421.4 932.7 420.4C934.1 425.5 930.1 431 925.5 436.5Z" fill="#3c3c3c" stroke="#3c3c3c" stroke-width="0.5"/><circle cx="901.4" cy="409.8" r="2.1" fill="#3c3c3c"/><path d="M901.0 411.2Q905.0 411.6 908.6 408.6L904.6 423" stroke="#3c3c3c" stroke-width="1" fill="none"/><circle cx="954.4" cy="409.8" r="2.1" fill="#3c3c3c"/><path d="M954.0 411.2Q958.0 411.6 961.6 408.6L957.6 423" stroke="#3c3c3c" stroke-width="1" fill="none"/><rect x="978.0" y="412" width="8.0" height="3.6" fill="#3c3c3c"/><rect x="1034.0" y="399" width="2.1" height="33" fill="#3c3c3c"/><rect x="1041.9999999999998" y="383.0" width="14.8" height="1" fill="#3c3c3c"/><rect x="1041.9999999999998" y="391.0" width="14.8" height="1" fill="#3c3c3c"/><ellipse cx="1049.8" cy="383.5" rx="4.7" ry="3.25" transform="rotate(-24 1049.8 383.5)" fill="#3c3c3c"/><ellipse cx="1049.8" cy="391.5" rx="4.7" ry="3.25" transform="rotate(-24 1049.8 391.5)" fill="#3c3c3c"/><ellipse cx="1049.8" cy="399.5" rx="4.7" ry="3.25" transform="rotate(-24 1049.8 399.5)" fill="#3c3c3c"/><rect x="1044.8999999999999" y="383.5" width="1.1" height="44.0" fill="#3c3c3c"/><path d="M1045.3999999999999 427.5C1046.6 421.0 1052.3999999999999 418.5 1054.1 413.5C1054.4999999999998 411.0 1053.8 408.9 1052.6 407.9C1053.9999999999998 413.0 1049.9999999999998 418.5 1045.3999999999999 424.0Z" fill="#3c3c3c" stroke="#3c3c3c" stroke-width="0.5"/><rect x="1095.1999999999998" y="383.0" width="14.8" height="1" fill="#3c3c3c"/><rect x="1095.1999999999998" y="391.0" width="14.8" height="1" fill="#3c3c3c"/><ellipse cx="1103.0" cy="383.5" rx="4.7" ry="3.25" transform="rotate(-24 1103.0 383.5)" fill="#3c3c3c"/><ellipse cx="1103.0" cy="391.5" rx="4.7" ry="3.25" transform="rotate(-24 1103.0 391.5)" fill="#3c3c3c"/><ellipse cx="1103.0" cy="399.5" rx="4.7" ry="3.25" transform="rotate(-24 1103.0 399.5)" fill="#3c3c3c"/><rect x="1098.1" y="383.5" width="1.1" height="44.0" fill="#3c3c3c"/><path d="M1098.6 427.5C1099.8 421.0 1105.6 418.5 1107.3 413.5C1107.6999999999998 411.0 1107.0 408.9 1105.8 407.9C1107.1999999999998 413.0 1103.1999999999998 418.5 1098.6 424.0Z" fill="#3c3c3c" stroke="#3c3c3c" stroke-width="0.5"/><circle cx="1074.5" cy="409.8" r="2.1" fill="#3c3c3c"/><path d="M1074.1 411.2Q1078.1 411.6 1081.6999999999998 408.6L1077.6999999999998 423" stroke="#3c3c3c" stroke-width="1" fill="none"/><circle cx="1127.5" cy="409.8" r="2.1" fill="#3c3c3c"/><path d="M1127.1 411.2Q1131.1 411.6 1134.6999999999998 408.6L1130.6999999999998 423" stroke="#3c3c3c" stroke-width="1" fill="none"/><rect x="1151.1" y="412" width="8.0" height="3.6" fill="#3c3c3c"/><rect x="1206.1" y="399" width="2.1" height="33" fill="#3c3c3c"/><rect x="1214.1" y="383.0" width="14.8" height="1" fill="#3c3c3c"/><rect x="1214.1" y="391.0" width="14.8" height="1" fill="#3c3c3c"/><ellipse cx="1221.9" cy="379.5" rx="4.7" ry="3.25" transform="rotate(-24 1221.9 379.5)" fill="#3c3c3c"/><ellipse cx="1221.9" cy="387.5" rx="4.7" ry="3.25" transform="rotate(-24 1221.9 387.5)" fill="#3c3c3c"/><ellipse cx="1221.9" cy="395.5" rx="4.7" ry="3.25" transform="rotate(-24 1221.9 395.5)" fill="#3c3c3c"/><rect x="1217.0" y="379.5" width="1.1" height="43.0" fill="#3c3c3c"/><path d="M1217.5 422.5C1218.7 416.0 1224.5 413.5 1226.2 408.5C1226.6 406.0 1225.9 403.9 1224.7 402.9C1226.1 408.0 1222.1 413.5 1217.5 419.0Z" fill="#3c3c3c" stroke="#3c3c3c" stroke-width="0.5"/><rect x="1267.3" y="383.0" width="14.8" height="1" fill="#3c3c3c"/><rect x="1267.3" y="391.0" width="14.8" height="1" fill="#3c3c3c"/><ellipse cx="1275.1000000000001" cy="379.5" rx="4.7" ry="3.25" transform="rotate(-24 1275.1000000000001 379.5)" fill="#3c3c3c"/><ellipse cx="1275.1000000000001" cy="387.5" rx="4.7" ry="3.25" transform="rotate(-24 1275.1000000000001 387.5)" fill="#3c3c3c"/><ellipse cx="1275.1000000000001" cy="395.5" rx="4.7" ry="3.25" transform="rotate(-24 1275.1000000000001 395.5)" fill="#3c3c3c"/><rect x="1270.2" y="379.5" width="1.1" height="43.0" fill="#3c3c3c"/><path d="M1270.7 422.5C1271.9 416.0 1277.7 413.5 1279.4 408.5C1279.8 406.0 1279.1000000000001 403.9 1277.9 402.9C1279.3 408.0 1275.3 413.5 1270.7 419.0Z" fill="#3c3c3c" stroke="#3c3c3c" stroke-width="0.5"/><circle cx="1246.6000000000001" cy="409.8" r="2.1" fill="#3c3c3c"/><path d="M1246.2 411.2Q1250.2 411.6 1253.8 408.6L1249.8 423" stroke="#3c3c3c" stroke-width="1" fill="none"/><circle cx="1299.6000000000001" cy="409.8" r="2.1" fill="#3c3c3c"/><path d="M1299.2 411.2Q1303.2 411.6 1306.8 408.6L1302.8 423" stroke="#3c3c3c" stroke-width="1" fill="none"/><rect x="1323.2" y="412" width="8.0" height="3.6" fill="#3c3c3c"/><rect x="1378.0" y="399" width="2.1" height="33" fill="#3c3c3c"/><ellipse cx="1393.8" cy="395.5" rx="4.7" ry="3.25" transform="rotate(-24 1393.8 395.5)" fill="#3c3c3c"/><ellipse cx="1393.8" cy="403.5" rx="4.7" ry="3.25" transform="rotate(-24 1393.8 403.5)" fill="#3c3c3c"/><ellipse cx="1393.8" cy="411.5" rx="4.7" ry="3.25" transform="rotate(-24 1393.8 411.5)" fill="#3c3c3c"/><rect x="1388.8999999999999" y="395.5" width="1.1" height="44.5" fill="#3c3c3c"/><path d="M1389.3999999999999 440C1390.6 433.5 1396.3999999999999 431 1398.1 426C1398.4999999999998 423.5 1397.8 421.4 1396.6 420.4C1397.9999999999998 425.5 1393.9999999999998 431 1389.3999999999999 436.5Z" fill="#3c3c3c" stroke="#3c3c3c" stroke-width="0.5"/><ellipse cx="1447.0" cy="395.5" rx="4.7" ry="3.25" transform="rotate(-24 1447.0 395.5)" fill="#3c3c3c"/><ellipse cx="1447.0" cy="403.5" rx="4.7" ry="3.25" transform="rotate(-24 1447.0 403.5)" fill="#3c3c3c"/><ellipse cx="1447.0" cy="411.5" rx="4.7" ry="3.25" transform="rotate(-24 1447.0 411.5)" fill="#3c3c3c"/><rect x="1442.1" y="395.5" width="1.1" height="44.5" fill="#3c3c3c"/><path d="M1442.6 440C1443.8 433.5 1449.6 431 1451.3 426C1451.6999999999998 423.5 1451.0 421.4 1449.8 420.4C1451.1999999999998 425.5 1447.1999999999998 431 1442.6 436.5Z" fill="#3c3c3c" stroke="#3c3c3c" stroke-width="0.5"/><circle cx="1418.5" cy="409.8" r="2.1" fill="#3c3c3c"/><path d="M1418.1 411.2Q1422.1 411.6 1425.6999999999998 408.6L1421.6999999999998 423" stroke="#3c3c3c" stroke-width="1" fill="none"/><circle cx="1471.5" cy="409.8" r="2.1" fill="#3c3c3c"/><path d="M1471.1 411.2Q1475.1 411.6 1478.6999999999998 408.6L1474.6999999999998 423" stroke="#3c3c3c" stroke-width="1" fill="none"/><rect x="1495.1" y="412" width="3.9" height="3.6" fill="#3c3c3c"/><rect x="1362.1" y="351" width="1" height="128" fill="#8a8a8a"/><g fill="none" stroke="#f2f2f2" stroke-linecap="round" stroke-linejoin="round"><path d="M746.8 427.4C744.2 426.6 742.8 423.6 743.8 420.8C745 417.4 748.6 415.6 752 416.8" stroke-width="1.3"/><path d="M752 416.8C756 418.4 757 423.6 754.6 427C752 430.8 746 431.6 741.8 428.6C737.2 425.2 736.8 419.6 739.8 415C742.6 410.6 748 407 750.4 402" stroke-width="2.7"/><path d="M750.4 402C752.4 398 752 393.4 749.2 392.4C746.4 392.8 744.6 398 745.4 403" stroke-width="2"/><path d="M745.4 403C746.4 412 749 425 750.8 434C751.8 439 750 442.4 746.6 442.8C744.6 442.8 743.2 441.8 742.6 440.4" stroke-width="0.9" stroke="#d8d8d8"/><circle cx="745" cy="438.6" r="3.3" fill="#f2f2f2" stroke="none"/></g></svg>
<div style="left:1499px;top:351px;width:10px;height:128px;background:#2e2e2e"></div>
<div style="left:1500px;top:352px;width:9px;height:17px;border:1px solid #6a6a6a;border-radius:2px"></div>
<svg style="left:1502px;top:359px" width="5" height="3" viewBox="0 0 5 3"><path d="M0 0H5L2.5 3Z" fill="#e0e0e0"/></svg>
<svg style="left:1502px;top:359px" width="5" height="3" viewBox="0 0 5 3"><rect width="5" height="3" fill="#2e2e2e"/><path d="M0 3H5L2.5 0Z" fill="#e0e0e0"/></svg>
<div style="left:1500px;top:401px;width:9px;height:28px;border:1px solid #6a6a6a;border-radius:2px;background:#3c3c3c"></div>
<div style="left:1500px;top:461px;width:9px;height:17px;border:1px solid #6a6a6a;border-radius:2px"></div>
<svg style="left:1502px;top:468px" width="5" height="3" viewBox="0 0 5 3"><path d="M0 0H5L2.5 3Z" fill="#e0e0e0"/></svg>
<div style="left:749px;top:482px;width:13px;height:13px;border:2px solid #fff;box-shadow:0 0 0 1px #888"><div style="left:1px;top:1px;width:7px;height:7px;border:1px solid #fff"></div></div>
<div style="left:765px;top:482px;width:13px;height:13px;border:1px solid #aaa"><div style="left:2px;top:2px;width:7px;height:7px;border:1px dotted #fff"></div></div>
<div style="left:781px;top:482px;width:13px;height:13px;border:1px solid #aaa"><div style="left:2px;top:5px;width:7px;height:1.6px;background:#fff"></div><div style="left:4.7px;top:2px;width:1.6px;height:7px;background:#fff"></div></div>
<div class="ebtn on" style="left:809px;top:482px;width:42px;height:14px;text-align:left;padding-left:11px">1/4</div>
<svg style="left:841px;top:487px" width="7" height="4" viewBox="0 0 7 4"><path d="M0 0H7L3.5 4Z" fill="#fff"/></svg>
<div class="ebtn" style="left:864px;top:482px;width:42px;height:14px;">UNDO</div>
<div class="ebtn" style="left:908px;top:482px;width:42px;height:14px;">REDO</div>
<div class="ebtn" style="left:963px;top:482px;width:20px;height:14px;">b</div>
<div class="ebtn" style="left:985px;top:482px;width:20px;height:14px;">#</div>
<div class="ebtn" style="left:1007px;top:482px;width:42px;height:14px;">EDIT</div>
<div class="ebtn" style="left:1051px;top:482px;width:42px;height:14px;">DELETE</div>
<div class="ebtn" style="left:1106px;top:482px;width:42px;height:14px;">COPY</div>
<div class="ebtn" style="left:1150px;top:482px;width:42px;height:14px;">PASTE</div>
<div class="ebtn on" style="left:1205px;top:482px;width:42px;height:14px;">SEL ALL</div>
<div class="ebtn on" style="left:1249px;top:482px;width:42px;height:14px;text-align:left;padding-left:2px">MORE</div>
<svg style="left:1280px;top:487px" width="7" height="4" viewBox="0 0 7 4"><path d="M0 0H7L3.5 4Z" fill="#fff"/></svg>
<div style="left:1324px;top:479px;width:39px;height:15px;border:1px solid #777;border-top:none;color:#fff;font-size:8.5px;letter-spacing:-0.2px;text-align:center;line-height:14px">PIANO</div>
<div style="left:1363px;top:479px;width:40px;height:17px;background:#f0f0f0;border-radius:0 0 3px 3px;color:#333;font-size:8.5px;letter-spacing:-0.2px;text-align:center;line-height:17px">SCORE</div>
<div style="left:1404px;top:479px;width:39px;height:15px;border:1px solid #777;border-top:none;color:#fff;font-size:8.5px;letter-spacing:-0.2px;text-align:center;line-height:14px">DRUM</div>
<div class="ebtn on" style="left:1455px;top:481px;width:42px;height:14px;">CONTR</div>
<div class="btn" style="left:1518px;top:340px;width:24px;height:24px;font-size:8.5px;line-height:22px;letter-spacing:-0.5px;border:1px solid #787878">EDIT</div>
<svg style="left:1546px;top:492px" width="10" height="9" viewBox="0 0 10 9" fill="#c8c8c8"><path d="M5 0L8 3H2Z"/><rect x="0" y="4" width="10" height="1.4"/><path d="M5 9L8 6.4H2Z"/></svg>
<div style="left:578px;top:610px;width:705px;height:299px;background:#404040;border:1px solid #1a86d8;box-shadow:0 1px 7px rgba(0,0,0,0.35)"></div>
<div style="left:579px;top:611px;width:703px;height:25px;background:#fff"></div>
<span class="t" style="left:583px;top:616px;font-size:12px;line-height:14px;color:#000">Guitar Amp</span>
<svg style="left:1261px;top:617px" width="12" height="12" viewBox="0 0 12 12" stroke="#111" stroke-width="1.2"><path d="M1 1L11 11M11 1L1 11"/></svg>
<div style="left:1202px;top:636px;width:2px;height:272px;background:#2c2c2c;border-right:1px solid #4c4c4c"></div>
<div class="grp" style="left:595px;top:652px;width:129px;height:112px;"></div>
<div style="left:636px;top:644px;width:46px;height:16px;background:#404040;font-size:11px;text-align:center;line-height:17px;color:#e8e8e8">Guitar</div>
<div class="grp" style="left:739px;top:652px;width:345px;height:112px;"></div>
<div class="dd" style="left:868px;top:645px;width:87px;height:15px;line-height:14px">Combo UK</div>
<svg style="left:945px;top:651px" width="6" height="3" viewBox="0 0 6 3"><path d="M0 0H6L3.0 3Z" fill="#fff"/></svg>
<div class="grp" style="left:1099px;top:652px;width:89px;height:239px;"></div>
<div style="left:1106px;top:644px;width:76px;height:16px;background:#404040;font-size:11px;text-align:center;line-height:17px;color:#e8e8e8">Speaker/Mic</div>
<div class="grp" style="left:595px;top:780px;width:153px;height:111px;"></div>
<div class="dd" style="left:628px;top:772px;width:87px;height:16px;line-height:15px">Pickup EQ</div>
<svg style="left:705px;top:779px" width="6" height="3" viewBox="0 0 6 3"><path d="M0 0H6L3.0 3Z" fill="#fff"/></svg>
<div class="grp" style="left:763px;top:780px;width:153px;height:111px;"></div>
<div class="dd" style="left:796px;top:772px;width:88px;height:16px;line-height:15px">Reverb</div>
<svg style="left:874px;top:779px" width="6" height="3" viewBox="0 0 6 3"><path d="M0 0H6L3.0 3Z" fill="#fff"/></svg>
<div class="grp" style="left:931px;top:780px;width:153px;height:111px;"></div>
<div class="dd" style="left:964px;top:772px;width:87px;height:16px;line-height:15px">Booster</div>
<svg style="left:1041px;top:779px" width="6" height="3" viewBox="0 0 6 3"><path d="M0 0H6L3.0 3Z" fill="#fff"/></svg>
<svg style="left:642px;top:683px" width="58" height="58" viewBox="-29 -29 58 58"><rect x="-13" y="23" width="1" height="1" fill="#c8c8c8"/><rect x="-23" y="13" width="1" height="1" fill="#c8c8c8"/><rect x="-27" y="-1" width="1" height="1" fill="#c8c8c8"/><rect x="-23" y="-14" width="1" height="1" fill="#c8c8c8"/><rect x="-13" y="-24" width="1" height="1" fill="#c8c8c8"/><rect x="0" y="-27" width="1" height="1" fill="#c8c8c8"/><rect x="13" y="-24" width="1" height="1" fill="#c8c8c8"/><rect x="23" y="-14" width="1" height="1" fill="#c8c8c8"/><rect x="27" y="-1" width="1" height="1" fill="#c8c8c8"/><rect x="23" y="13" width="1" height="1" fill="#c8c8c8"/><rect x="13" y="23" width="1" height="1" fill="#c8c8c8"/><circle cx="0.7" cy="0.6" r="20.4" fill="#1c1c1c"/></svg>
<div style="left:651.8px;top:692.4px;width:39.2px;height:39.2px;border-radius:50%;background:conic-gradient(from 0deg,#5a5a5a 0deg,#565656 40deg,#444 85deg,#343434 115deg,#484848 150deg,#5c5c5c 200deg,#4c4c4c 250deg,#363636 298deg,#4c4c4c 335deg,#5a5a5a 360deg);box-shadow:inset 0 -1px 3px 0 rgba(0,0,0,.45),0 0 0 0.8px #1e1e1e"></div>
<svg style="left:675px;top:720px" width="9" height="9" viewBox="0 0 9 9"><circle cx="4.0" cy="4.5" r="2.7" fill="#fff"/></svg>
<span class="t" style="left:631px;top:668px;width:80px;text-align:center;font-size:11px;line-height:14px;color:#e8e8e8">Level</span>
<span class="t" style="left:632px;top:736px;width:80px;text-align:center;font-size:8.5px;line-height:10px;color:#b0b0b0">12.0 dB</span>
<svg style="left:818px;top:683px" width="58" height="58" viewBox="-29 -29 58 58"><rect x="-13" y="23" width="1" height="1" fill="#c8c8c8"/><rect x="-23" y="13" width="1" height="1" fill="#c8c8c8"/><rect x="-27" y="-1" width="1" height="1" fill="#c8c8c8"/><rect x="-23" y="-14" width="1" height="1" fill="#c8c8c8"/><rect x="-13" y="-24" width="1" height="1" fill="#c8c8c8"/><rect x="0" y="-27" width="1" height="1" fill="#c8c8c8"/><rect x="13" y="-24" width="1" height="1" fill="#c8c8c8"/><rect x="23" y="-14" width="1" height="1" fill="#c8c8c8"/><rect x="27" y="-1" width="1" height="1" fill="#c8c8c8"/><rect x="23" y="13" width="1" height="1" fill="#c8c8c8"/><rect x="13" y="23" width="1" height="1" fill="#c8c8c8"/><circle cx="0.7" cy="0.6" r="20.4" fill="#1c1c1c"/></svg>
<div style="left:827.8px;top:692.4px;width:39.2px;height:39.2px;border-radius:50%;background:conic-gradient(from 0deg,#5a5a5a 0deg,#565656 40deg,#444 85deg,#343434 115deg,#484848 150deg,#5c5c5c 200deg,#4c4c4c 250deg,#363636 298deg,#4c4c4c 335deg,#5a5a5a 360deg);box-shadow:inset 0 -1px 3px 0 rgba(0,0,0,.45),0 0 0 0.8px #1e1e1e"></div>
<svg style="left:843px;top:692px" width="9" height="9" viewBox="0 0 9 9"><circle cx="4.5" cy="4.4" r="2.7" fill="#fff"/></svg>
<span class="t" style="left:808px;top:668px;width:80px;text-align:center;font-size:11px;line-height:14px;color:#e8e8e8">Volume</span>
<span class="t" style="left:808px;top:736px;width:80px;text-align:center;font-size:8.5px;line-height:10px;color:#b0b0b0">5.0</span>
<svg style="left:882px;top:683px" width="58" height="58" viewBox="-29 -29 58 58"><rect x="-13" y="23" width="1" height="1" fill="#c8c8c8"/><rect x="-23" y="13" width="1" height="1" fill="#c8c8c8"/><rect x="-27" y="-1" width="1" height="1" fill="#c8c8c8"/><rect x="-23" y="-14" width="1" height="1" fill="#c8c8c8"/><rect x="-13" y="-24" width="1" height="1" fill="#c8c8c8"/><rect x="0" y="-27" width="1" height="1" fill="#c8c8c8"/><rect x="13" y="-24" width="1" height="1" fill="#c8c8c8"/><rect x="23" y="-14" width="1" height="1" fill="#c8c8c8"/><rect x="27" y="-1" width="1" height="1" fill="#c8c8c8"/><rect x="23" y="13" width="1" height="1" fill="#c8c8c8"/><rect x="13" y="23" width="1" height="1" fill="#c8c8c8"/><circle cx="0.7" cy="0.6" r="20.4" fill="#1c1c1c"/></svg>
<div style="left:891.8px;top:692.4px;width:39.2px;height:39.2px;border-radius:50%;background:conic-gradient(from 0deg,#5a5a5a 0deg,#565656 40deg,#444 85deg,#343434 115deg,#484848 150deg,#5c5c5c 200deg,#4c4c4c 250deg,#363636 298deg,#4c4c4c 335deg,#5a5a5a 360deg);box-shadow:inset 0 -1px 3px 0 rgba(0,0,0,.45),0 0 0 0.8px #1e1e1e"></div>
<svg style="left:915px;top:720px" width="9" height="9" viewBox="0 0 9 9"><circle cx="4.0" cy="4.5" r="2.7" fill="#fff"/></svg>
<span class="t" style="left:872px;top:668px;width:80px;text-align:center;font-size:11px;line-height:14px;color:#e8e8e8">Bass</span>
<span class="t" style="left:872px;top:736px;width:80px;text-align:center;font-size:8.5px;line-height:10px;color:#b0b0b0">10.0</span>
<svg style="left:946px;top:683px" width="58" height="58" viewBox="-29 -29 58 58"><rect x="-13" y="23" width="1" height="1" fill="#c8c8c8"/><rect x="-23" y="13" width="1" height="1" fill="#c8c8c8"/><rect x="-27" y="-1" width="1" height="1" fill="#c8c8c8"/><rect x="-23" y="-14" width="1" height="1" fill="#c8c8c8"/><rect x="-13" y="-24" width="1" height="1" fill="#c8c8c8"/><rect x="0" y="-27" width="1" height="1" fill="#c8c8c8"/><rect x="13" y="-24" width="1" height="1" fill="#c8c8c8"/><rect x="23" y="-14" width="1" height="1" fill="#c8c8c8"/><rect x="27" y="-1" width="1" height="1" fill="#c8c8c8"/><rect x="23" y="13" width="1" height="1" fill="#c8c8c8"/><rect x="13" y="23" width="1" height="1" fill="#c8c8c8"/><circle cx="0.7" cy="0.6" r="20.4" fill="#1c1c1c"/></svg>
<div style="left:955.8px;top:692.4px;width:39.2px;height:39.2px;border-radius:50%;background:conic-gradient(from 0deg,#5a5a5a 0deg,#565656 40deg,#444 85deg,#343434 115deg,#484848 150deg,#5c5c5c 200deg,#4c4c4c 250deg,#363636 298deg,#4c4c4c 335deg,#5a5a5a 360deg);box-shadow:inset 0 -1px 3px 0 rgba(0,0,0,.45),0 0 0 0.8px #1e1e1e"></div>
<svg style="left:971px;top:692px" width="9" height="9" viewBox="0 0 9 9"><circle cx="4.0" cy="4.4" r="2.7" fill="#fff"/></svg>
<span class="t" style="left:936px;top:668px;width:80px;text-align:center;font-size:11px;line-height:14px;color:#e8e8e8">Cut</span>
<span class="t" style="left:936px;top:736px;width:80px;text-align:center;font-size:8.5px;line-height:10px;color:#b0b0b0">5.0</span>
<svg style="left:1114px;top:683px" width="58" height="58" viewBox="-29 -29 58 58"><rect x="-13" y="23" width="1" height="1" fill="#c8c8c8"/><rect x="-23" y="13" width="1" height="1" fill="#c8c8c8"/><rect x="-27" y="-1" width="1" height="1" fill="#c8c8c8"/><rect x="-23" y="-14" width="1" height="1" fill="#c8c8c8"/><rect x="-13" y="-24" width="1" height="1" fill="#c8c8c8"/><rect x="0" y="-27" width="1" height="1" fill="#c8c8c8"/><rect x="13" y="-24" width="1" height="1" fill="#c8c8c8"/><rect x="23" y="-14" width="1" height="1" fill="#c8c8c8"/><rect x="27" y="-1" width="1" height="1" fill="#c8c8c8"/><rect x="23" y="13" width="1" height="1" fill="#c8c8c8"/><rect x="13" y="23" width="1" height="1" fill="#c8c8c8"/><circle cx="0.7" cy="0.6" r="20.4" fill="#1c1c1c"/></svg>
<div style="left:1123.8px;top:692.4px;width:39.2px;height:39.2px;border-radius:50%;background:conic-gradient(from 0deg,#5a5a5a 0deg,#565656 40deg,#444 85deg,#343434 115deg,#484848 150deg,#5c5c5c 200deg,#4c4c4c 250deg,#363636 298deg,#4c4c4c 335deg,#5a5a5a 360deg);box-shadow:inset 0 -1px 3px 0 rgba(0,0,0,.45),0 0 0 0.8px #1e1e1e"></div>
<svg style="left:1124px;top:710px" width="9" height="9" viewBox="0 0 9 9"><circle cx="4.3" cy="4.0" r="2.7" fill="#fff"/></svg>
<span class="t" style="left:1103px;top:668px;width:80px;text-align:center;font-size:11px;line-height:14px;color:#e8e8e8">Cntr/Edge</span>
<span class="t" style="left:1104px;top:736px;width:80px;text-align:center;font-size:8.5px;line-height:10px;color:#b0b0b0">17 %</span>
<svg style="left:610px;top:811px" width="58" height="58" viewBox="-29 -29 58 58"><rect x="-13" y="23" width="1" height="1" fill="#c8c8c8"/><rect x="-23" y="13" width="1" height="1" fill="#c8c8c8"/><rect x="-27" y="-1" width="1" height="1" fill="#c8c8c8"/><rect x="-23" y="-14" width="1" height="1" fill="#c8c8c8"/><rect x="-13" y="-24" width="1" height="1" fill="#c8c8c8"/><rect x="0" y="-27" width="1" height="1" fill="#c8c8c8"/><rect x="13" y="-24" width="1" height="1" fill="#c8c8c8"/><rect x="23" y="-14" width="1" height="1" fill="#c8c8c8"/><rect x="27" y="-1" width="1" height="1" fill="#c8c8c8"/><rect x="23" y="13" width="1" height="1" fill="#c8c8c8"/><rect x="13" y="23" width="1" height="1" fill="#c8c8c8"/><circle cx="0.7" cy="0.6" r="20.4" fill="#1c1c1c"/></svg>
<div style="left:619.8px;top:820.4px;width:39.2px;height:39.2px;border-radius:50%;background:conic-gradient(from 0deg,#5a5a5a 0deg,#565656 40deg,#444 85deg,#343434 115deg,#484848 150deg,#5c5c5c 200deg,#4c4c4c 250deg,#363636 298deg,#4c4c4c 335deg,#5a5a5a 360deg);box-shadow:inset 0 -1px 3px 0 rgba(0,0,0,.45),0 0 0 0.8px #1e1e1e"></div>
<svg style="left:635px;top:820px" width="9" height="9" viewBox="0 0 9 9"><circle cx="4.3" cy="4.6" r="2.7" fill="#fff"/></svg>
<span class="t" style="left:600px;top:796px;width:80px;text-align:center;font-size:11px;line-height:14px;color:#e8e8e8">Bass</span>
<span class="t" style="left:600px;top:864px;width:80px;text-align:center;font-size:8.5px;line-height:10px;color:#b0b0b0">5.0</span>
<svg style="left:674px;top:811px" width="58" height="58" viewBox="-29 -29 58 58"><rect x="-13" y="23" width="1" height="1" fill="#c8c8c8"/><rect x="-23" y="13" width="1" height="1" fill="#c8c8c8"/><rect x="-27" y="-1" width="1" height="1" fill="#c8c8c8"/><rect x="-23" y="-14" width="1" height="1" fill="#c8c8c8"/><rect x="-13" y="-24" width="1" height="1" fill="#c8c8c8"/><rect x="0" y="-27" width="1" height="1" fill="#c8c8c8"/><rect x="13" y="-24" width="1" height="1" fill="#c8c8c8"/><rect x="23" y="-14" width="1" height="1" fill="#c8c8c8"/><rect x="27" y="-1" width="1" height="1" fill="#c8c8c8"/><rect x="23" y="13" width="1" height="1" fill="#c8c8c8"/><rect x="13" y="23" width="1" height="1" fill="#c8c8c8"/><circle cx="0.7" cy="0.6" r="20.4" fill="#1c1c1c"/></svg>
<div style="left:683.8px;top:820.4px;width:39.2px;height:39.2px;border-radius:50%;background:conic-gradient(from 0deg,#5a5a5a 0deg,#565656 40deg,#444 85deg,#343434 115deg,#484848 150deg,#5c5c5c 200deg,#4c4c4c 250deg,#363636 298deg,#4c4c4c 335deg,#5a5a5a 360deg);box-shadow:inset 0 -1px 3px 0 rgba(0,0,0,.45),0 0 0 0.8px #1e1e1e"></div>
<svg style="left:693px;top:821px" width="9" height="9" viewBox="0 0 9 9"><circle cx="4.3" cy="4.5" r="2.7" fill="#fff"/></svg>
<span class="t" style="left:664px;top:796px;width:80px;text-align:center;font-size:11px;line-height:14px;color:#e8e8e8">Treble</span>
<span class="t" style="left:664px;top:864px;width:80px;text-align:center;font-size:8.5px;line-height:10px;color:#b0b0b0">4.2</span>
<svg style="left:778px;top:811px" width="58" height="58" viewBox="-29 -29 58 58"><rect x="-13" y="23" width="1" height="1" fill="#c8c8c8"/><rect x="-23" y="13" width="1" height="1" fill="#c8c8c8"/><rect x="-27" y="-1" width="1" height="1" fill="#c8c8c8"/><rect x="-23" y="-14" width="1" height="1" fill="#c8c8c8"/><rect x="-13" y="-24" width="1" height="1" fill="#c8c8c8"/><rect x="0" y="-27" width="1" height="1" fill="#c8c8c8"/><rect x="13" y="-24" width="1" height="1" fill="#c8c8c8"/><rect x="23" y="-14" width="1" height="1" fill="#c8c8c8"/><rect x="27" y="-1" width="1" height="1" fill="#c8c8c8"/><rect x="23" y="13" width="1" height="1" fill="#c8c8c8"/><rect x="13" y="23" width="1" height="1" fill="#c8c8c8"/><circle cx="0.7" cy="0.6" r="20.4" fill="#1c1c1c"/></svg>
<div style="left:787.8px;top:820.4px;width:39.2px;height:39.2px;border-radius:50%;background:conic-gradient(from 0deg,#5a5a5a 0deg,#565656 40deg,#444 85deg,#343434 115deg,#484848 150deg,#5c5c5c 200deg,#4c4c4c 250deg,#363636 298deg,#4c4c4c 335deg,#5a5a5a 360deg);box-shadow:inset 0 -1px 3px 0 rgba(0,0,0,.45),0 0 0 0.8px #1e1e1e"></div>
<svg style="left:788px;top:835px" width="9" height="9" viewBox="0 0 9 9"><circle cx="4.7" cy="4.6" r="2.7" fill="#fff"/></svg>
<span class="t" style="left:768px;top:796px;width:80px;text-align:center;font-size:11px;line-height:14px;color:#e8e8e8">Reverb</span>
<span class="t" style="left:768px;top:864px;width:80px;text-align:center;font-size:8.5px;line-height:10px;color:#b0b0b0">2.0</span>
<svg style="left:842px;top:811px" width="58" height="58" viewBox="-29 -29 58 58"><rect x="-13" y="23" width="1" height="1" fill="#c8c8c8"/><rect x="-23" y="13" width="1" height="1" fill="#c8c8c8"/><rect x="-27" y="-1" width="1" height="1" fill="#c8c8c8"/><rect x="-23" y="-14" width="1" height="1" fill="#c8c8c8"/><rect x="-13" y="-24" width="1" height="1" fill="#c8c8c8"/><rect x="0" y="-27" width="1" height="1" fill="#c8c8c8"/><rect x="13" y="-24" width="1" height="1" fill="#c8c8c8"/><rect x="23" y="-14" width="1" height="1" fill="#c8c8c8"/><rect x="27" y="-1" width="1" height="1" fill="#c8c8c8"/><rect x="23" y="13" width="1" height="1" fill="#c8c8c8"/><rect x="13" y="23" width="1" height="1" fill="#c8c8c8"/><circle cx="0.7" cy="0.6" r="20.4" fill="#1c1c1c"/></svg>
<div style="left:851.8px;top:820.4px;width:39.2px;height:39.2px;border-radius:50%;background:conic-gradient(from 0deg,#5a5a5a 0deg,#565656 40deg,#444 85deg,#343434 115deg,#484848 150deg,#5c5c5c 200deg,#4c4c4c 250deg,#363636 298deg,#4c4c4c 335deg,#5a5a5a 360deg);box-shadow:inset 0 -1px 3px 0 rgba(0,0,0,.45),0 0 0 0.8px #1e1e1e"></div>
<svg style="left:859px;top:848px" width="9" height="9" viewBox="0 0 9 9"><circle cx="4.4" cy="4.7" r="2.7" fill="#fff"/></svg>
<span class="t" style="left:832px;top:796px;width:80px;text-align:center;font-size:11px;line-height:14px;color:#e8e8e8">Tone</span>
<span class="t" style="left:832px;top:864px;width:80px;text-align:center;font-size:8.5px;line-height:10px;color:#b0b0b0">0.0</span>
<svg style="left:946px;top:811px" width="58" height="58" viewBox="-29 -29 58 58"><rect x="-13" y="23" width="1" height="1" fill="#c8c8c8"/><rect x="-23" y="13" width="1" height="1" fill="#c8c8c8"/><rect x="-27" y="-1" width="1" height="1" fill="#c8c8c8"/><rect x="-23" y="-14" width="1" height="1" fill="#c8c8c8"/><rect x="-13" y="-24" width="1" height="1" fill="#c8c8c8"/><rect x="0" y="-27" width="1" height="1" fill="#c8c8c8"/><rect x="13" y="-24" width="1" height="1" fill="#c8c8c8"/><rect x="23" y="-14" width="1" height="1" fill="#c8c8c8"/><rect x="27" y="-1" width="1" height="1" fill="#c8c8c8"/><rect x="23" y="13" width="1" height="1" fill="#c8c8c8"/><rect x="13" y="23" width="1" height="1" fill="#c8c8c8"/><circle cx="0.7" cy="0.6" r="20.4" fill="#1c1c1c"/></svg>
<div style="left:955.8px;top:820.4px;width:39.2px;height:39.2px;border-radius:50%;background:conic-gradient(from 0deg,#5a5a5a 0deg,#565656 40deg,#444 85deg,#343434 115deg,#484848 150deg,#5c5c5c 200deg,#4c4c4c 250deg,#363636 298deg,#4c4c4c 335deg,#5a5a5a 360deg);box-shadow:inset 0 -1px 3px 0 rgba(0,0,0,.45),0 0 0 0.8px #1e1e1e"></div>
<svg style="left:986px;top:837px" width="9" height="9" viewBox="0 0 9 9"><circle cx="4.2" cy="4.5" r="2.7" fill="#fff"/></svg>
<span class="t" style="left:936px;top:796px;width:80px;text-align:center;font-size:11px;line-height:14px;color:#e8e8e8">Gain</span>
<span class="t" style="left:936px;top:864px;width:80px;text-align:center;font-size:8.5px;line-height:10px;color:#b0b0b0">8.3</span>
<svg style="left:1010px;top:811px" width="58" height="58" viewBox="-29 -29 58 58"><rect x="-13" y="23" width="1" height="1" fill="#c8c8c8"/><rect x="-23" y="13" width="1" height="1" fill="#c8c8c8"/><rect x="-27" y="-1" width="1" height="1" fill="#c8c8c8"/><rect x="-23" y="-14" width="1" height="1" fill="#c8c8c8"/><rect x="-13" y="-24" width="1" height="1" fill="#c8c8c8"/><rect x="0" y="-27" width="1" height="1" fill="#c8c8c8"/><rect x="13" y="-24" width="1" height="1" fill="#c8c8c8"/><rect x="23" y="-14" width="1" height="1" fill="#c8c8c8"/><rect x="27" y="-1" width="1" height="1" fill="#c8c8c8"/><rect x="23" y="13" width="1" height="1" fill="#c8c8c8"/><rect x="13" y="23" width="1" height="1" fill="#c8c8c8"/><circle cx="0.7" cy="0.6" r="20.4" fill="#1c1c1c"/></svg>
<div style="left:1019.8px;top:820.4px;width:39.2px;height:39.2px;border-radius:50%;background:conic-gradient(from 0deg,#5a5a5a 0deg,#565656 40deg,#444 85deg,#343434 115deg,#484848 150deg,#5c5c5c 200deg,#4c4c4c 250deg,#363636 298deg,#4c4c4c 335deg,#5a5a5a 360deg);box-shadow:inset 0 -1px 3px 0 rgba(0,0,0,.45),0 0 0 0.8px #1e1e1e"></div>
<svg style="left:1049px;top:841px" width="9" height="9" viewBox="0 0 9 9"><circle cx="4.4" cy="4.2" r="2.7" fill="#fff"/></svg>
<span class="t" style="left:1000px;top:796px;width:80px;text-align:center;font-size:11px;line-height:14px;color:#e8e8e8">Tone</span>
<span class="t" style="left:1000px;top:864px;width:80px;text-align:center;font-size:8.5px;line-height:10px;color:#b0b0b0">8.7</span>
<svg style="left:1114px;top:811px" width="58" height="58" viewBox="-29 -29 58 58"><rect x="-13" y="23" width="1" height="1" fill="#c8c8c8"/><rect x="-23" y="13" width="1" height="1" fill="#c8c8c8"/><rect x="-27" y="-1" width="1" height="1" fill="#c8c8c8"/><rect x="-23" y="-14" width="1" height="1" fill="#c8c8c8"/><rect x="-13" y="-24" width="1" height="1" fill="#c8c8c8"/><rect x="0" y="-27" width="1" height="1" fill="#c8c8c8"/><rect x="13" y="-24" width="1" height="1" fill="#c8c8c8"/><rect x="23" y="-14" width="1" height="1" fill="#c8c8c8"/><rect x="27" y="-1" width="1" height="1" fill="#c8c8c8"/><rect x="23" y="13" width="1" height="1" fill="#c8c8c8"/><rect x="13" y="23" width="1" height="1" fill="#c8c8c8"/><circle cx="0.7" cy="0.6" r="20.4" fill="#1c1c1c"/></svg>
<div style="left:1123.8px;top:820.4px;width:39.2px;height:39.2px;border-radius:50%;background:conic-gradient(from 0deg,#5a5a5a 0deg,#565656 40deg,#444 85deg,#343434 115deg,#484848 150deg,#5c5c5c 200deg,#4c4c4c 250deg,#363636 298deg,#4c4c4c 335deg,#5a5a5a 360deg);box-shadow:inset 0 -1px 3px 0 rgba(0,0,0,.45),0 0 0 0.8px #1e1e1e"></div>
<svg style="left:1130px;top:823px" width="9" height="9" viewBox="0 0 9 9"><circle cx="4.3" cy="4.4" r="2.7" fill="#fff"/></svg>
<span class="t" style="left:1104px;top:796px;width:80px;text-align:center;font-size:11px;line-height:14px;color:#e8e8e8">Output</span>
<span class="t" style="left:1104px;top:864px;width:80px;text-align:center;font-size:8.5px;line-height:10px;color:#b0b0b0">-2.9 dB</span>
<span class="t" style="left:592px;top:691px;width:31px;text-align:right;font-size:10px;line-height:12px;color:#e8e8e8">Hot</span>
<div style="left:628px;top:693px;width:7px;height:7px;border-radius:4px;border:1px solid #c8dcdc;background:#0a3030"></div>
<span class="t" style="left:592px;top:707px;width:31px;text-align:right;font-size:10px;line-height:12px;color:#e8e8e8">HB</span>
<div style="left:628px;top:709px;width:7px;height:7px;border-radius:4px;background:#10e4f4"></div>
<span class="t" style="left:592px;top:723px;width:31px;text-align:right;font-size:10px;line-height:12px;color:#e8e8e8">SC</span>
<div style="left:628px;top:725px;width:7px;height:7px;border-radius:4px;background:#10e4f4"></div>
<span class="t" style="left:756px;top:668px;font-size:11px;line-height:14px;color:#e8e8e8">Channel</span>
<div class="sb" style="left:757px;top:701px;width:12px;height:9px;"></div>
<span class="t" style="left:774px;top:700px;font-size:10px;line-height:12px;color:#e8e8e8">Brilliant</span>
<div class="sb" style="left:757px;top:715px;width:12px;height:9px;background:#e0e000"></div>
<span class="t" style="left:774px;top:714px;font-size:10px;line-height:12px;color:#e8e8e8">Normal</span>
<div class="dd" style="left:1107px;top:755px;width:72px;height:16px;line-height:15px">Internal</div>
<svg style="left:1169px;top:762px" width="6" height="3" viewBox="0 0 6 3"><path d="M0 0H6L3.0 3Z" fill="#fff"/></svg>
<div style="left:1108px;top:782px;width:71px;height:6px;background:#000"></div>
<div style="left:1108px;top:782px;width:48px;height:6px;background:#fff"></div>
<div class="sb" style="left:1221px;top:655px;width:12px;height:9px;"></div>
<span class="t" style="left:1238px;top:653px;font-size:10px;line-height:12px;color:#e8e8e8">Bypass</span>
<div class="sb" style="left:1221px;top:675px;width:12px;height:9px;"></div>
<svg style="left:1224px;top:678px" width="6" height="3" viewBox="0 0 6 3"><path d="M0 0H6L3.0 3Z" fill="#fff"/></svg>
<span class="t" style="left:1238px;top:673px;font-size:10px;line-height:12px;color:#e8e8e8">Presets</span>
<div class="btn" style="left:1220px;top:873px;width:46px;height:19px;font-size:12px;line-height:19px">OK</div>
<div class="sep" style="left:1px;top:916px;width:1558px;height:2px;"></div>
<div style="left:15px;top:921px;width:17px;height:17px;background:#e8e8e8;clip-path:polygon(0 0,100% 0,100% 70%,70% 100%,30% 100%,0 70%)"><svg style="left:4px;top:3px" width="9" height="9" viewBox="0 0 9 9" stroke="#222" stroke-width="1.5"><path d="M1 1L8 8M8 1L1 8"/></svg></div>
<span class="t" style="left:1260px;top:923px;font-size:11px;line-height:13px;color:#e0e0e0">1:512</span>
<span class="t" style="left:1307px;top:923px;font-size:11px;line-height:13px;color:#e0e0e0">1/8 note</span>
<div class="btn b" style="left:1363px;top:921px;width:77px;height:16px;font-size:12px;line-height:16px">Automation</div>
<div class="btn b" style="left:1444px;top:921px;width:39px;height:16px;font-size:12px;line-height:16px">Help</div>
<div class="btn" style="left:1487px;top:921px;width:26px;height:16px;"><svg style="left:4px;top:2px" width="19" height="9" viewBox="0 0 19 9"><rect width="19" height="9" fill="#fff"/><rect x="1.6" y="0" width="1.8" height="5.2" fill="#111"/><rect x="4.4" y="0" width="1.8" height="5.2" fill="#111"/><rect x="9.2" y="0" width="1.8" height="5.2" fill="#111"/><rect x="12" y="0" width="1.8" height="5.2" fill="#111"/><rect x="14.8" y="0" width="1.8" height="5.2" fill="#111"/></svg></div>
<div class="btn" style="left:1517px;top:921px;width:26px;height:16px;"><svg style="left:6px;top:1px" width="14" height="14" viewBox="0 0 14 14" fill="none" stroke="#fff" stroke-width="1.7"><path d="M1 4.4V1H4.4M9.6 1H13V4.4M13 9.6V13H9.6M4.4 13H1V9.6"/><rect x="3.6" y="3.6" width="6.8" height="6.8" fill="#fff" stroke="none"/></svg></div>
<svg style="left:1549px;top:931px" width="8" height="8" viewBox="0 0 8 8" fill="#9a9a9a"><rect x="6" y="0" width="1.4" height="1.4"/><rect x="3" y="3" width="1.4" height="1.4"/><rect x="6" y="3" width="1.4" height="1.4"/><rect x="0" y="6" width="1.4" height="1.4"/><rect x="3" y="6" width="1.4" height="1.4"/><rect x="6" y="6" width="1.4" height="1.4"/></svg>
</body></html>
